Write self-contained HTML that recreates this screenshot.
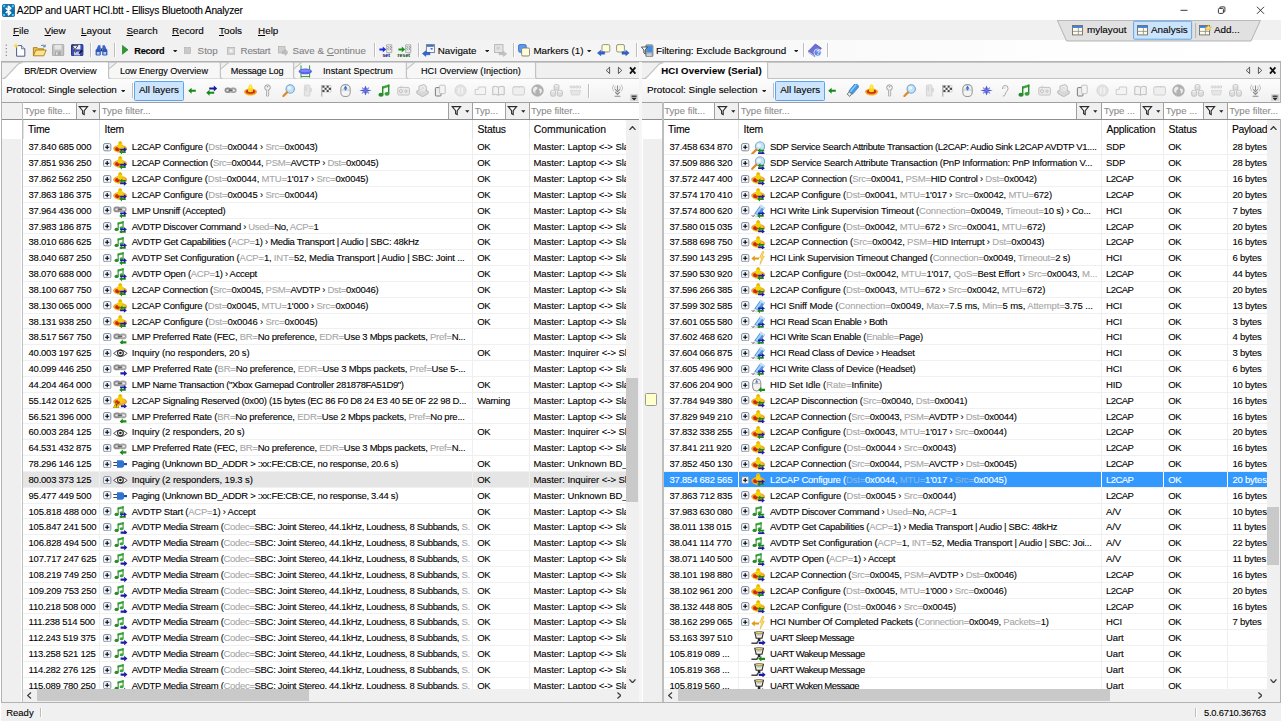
<!DOCTYPE html><html><head><meta charset="utf-8"><title>Ellisys Bluetooth Analyzer</title><style>
*{box-sizing:border-box;margin:0;padding:0}
html,body{width:1282px;height:722px;overflow:hidden;background:#f0f0f0}
body{position:relative;font-family:"Liberation Sans",sans-serif;font-size:9.8px;color:#000;-webkit-font-smoothing:antialiased;-webkit-text-stroke:0.1px}
.a{position:absolute}
.ui{position:absolute;white-space:nowrap;line-height:12px}
u{text-decoration:underline;text-underline-offset:1px}
.dis{color:#838383}
#title{left:0;top:0;width:1282px;height:20px;background:#fff}
#menu{left:0;top:20px;width:1282px;height:20px;background:#f0f0f0}
#lay{left:0;top:20px;width:1282px;height:22px;z-index:3}
#tb{left:0;top:40px;width:1282px;height:21px;background:linear-gradient(90deg,#f0f0f0 0,#f3f3f3 40%,#f9f9f9 62%,#fefefe 82%,#fff 100%)}
.sep{position:absolute;width:1px;background:#bdbdbd;box-shadow:1px 0 0 #fff}
.pane{position:absolute;background:#fff}
.frame{position:absolute;left:1.3px;top:60.9px;width:1279.8px;height:642px;background:#f6f6f6;border:1px solid #b2b2b2}
.tabstrip{position:absolute;background:#f0f0f0;border-top:1.6px solid #c8c8c8;border-bottom:1.2px solid #c2c2c2}
.ptb{position:absolute;background:linear-gradient(180deg,#fcfcfc,#f1f1f1)}
.frow{position:absolute;background:#f0f0f0;border-top:1px solid #a0a0a0;border-bottom:1px solid #8e8e8e}
.fbox{position:absolute;top:0;height:100%;background:#fff;border-left:1px solid #a0a0a0;color:#8c8c8c;font-size:9.55px;line-height:16.2px;padding-left:1.3px;white-space:nowrap;overflow:hidden}
.fbtn{position:absolute;top:0;height:100%;background:#f0f0f0;border-left:1px solid #a0a0a0}
.hdr{position:absolute;background:#fff;font-size:10.4px;letter-spacing:-0.18px}
.hdr>span{position:absolute;top:0;height:100%;line-height:20.2px;white-space:nowrap;overflow:hidden;border-left:1px solid #e4e4e4;padding-left:4px}
.mg{position:absolute;background:#efefef}
.vp{position:absolute;overflow:hidden;background:#fff}
.r{position:absolute;left:0;width:100%;height:15.832px;border-bottom:1px solid #f0f0f0;font-size:9.5px;line-height:16.6px;white-space:nowrap}
.r .c{position:absolute;top:0;height:100%;overflow:hidden;padding-left:3.7px;border-left:1px solid #efefef}
.r .t{border-left:none;letter-spacing:-0.245px;padding-left:5.9px}
.r .it{padding-left:0}
.r.hl{background:#e5e5e5}
.r.sel{background:#3399ff;color:#fff}
.r.sel .c{border-left-color:#fff}
.r.sel .g{color:#8eb4d8}
.g{color:#a6a6a6}
.ex{position:absolute;left:2.7px;top:3.7px}
.ic{position:absolute;left:12.2px;top:1.2px}
.tx{position:absolute;left:31.3px;top:0}
.lp .k4{letter-spacing:-0.05px}.lp .k3{letter-spacing:-0.3px}.rp .k3{letter-spacing:-0.6px}.rp .k4{letter-spacing:-0.3px}.rp .k5{padding-left:4.4px;letter-spacing:-0.2px}
.rp .ex{left:1.8px}.rp .ic{left:11.6px}.rp .tx{left:30.6px}
.vs{position:absolute;background:#f0f0f0}
.th{position:absolute;background:#c9c9c9}
.chev{position:absolute;fill:none;stroke:#404040;stroke-width:1.3}
.tab{position:absolute;font-size:9.3px;line-height:17px;white-space:nowrap}
</style></head><body>
<div id="title" class="a">
<svg class="a" style="left:1.8px;top:4.2px" width="13" height="13" viewBox="0 0 12 12"><rect x="0.3" y="0.3" width="11.4" height="11.4" rx="1.7" fill="#0f69a6" stroke="#0a4f80" stroke-width="0.6"/><rect x="1" y="1" width="10" height="5" rx="1.2" fill="#1a7fc0" opacity="0.55"/><path d="M3.5 3.7 L8.1 8.1 L5.9 10 V2 L8.1 3.9 L3.5 8.3" fill="none" stroke="#fff" stroke-width="1.45" stroke-linejoin="round"/><circle cx="1.9" cy="1.9" r="1.15" fill="#33ccff"/><circle cx="10.1" cy="1.9" r="1.15" fill="#33ccff"/><circle cx="1.9" cy="10.1" r="1.15" fill="#33ccff"/><circle cx="10.1" cy="10.1" r="1.15" fill="#33ccff"/></svg>
<span class="ui " style="left:16.8px;top:5.2px;font-size:10.2px;letter-spacing:-0.215px">A2DP and UART HCI.btt - Ellisys Bluetooth Analyzer</span>
<svg class="a" style="left:1170px;top:0" width="112" height="20" viewBox="0 0 112 20"><path d="M10.5 10.3 H17.5" stroke="#222" stroke-width="0.9"/><rect x="48.4" y="8.4" width="5" height="5" rx="1" fill="none" stroke="#222" stroke-width="0.9"/><path d="M49.9 8.4 V7.6 Q49.9 6.9 50.6 6.9 H54.2 Q54.9 6.9 54.9 7.6 V11.2 Q54.9 11.9 54.2 11.9 H53.4" fill="none" stroke="#222" stroke-width="0.9"/><path d="M87 6.8 L94 13.8 M94 6.8 L87 13.8" stroke="#222" stroke-width="0.9"/></svg>
</div>
<div id="menu" class="a">
<span class="ui " style="left:13px;top:4.7px;font-size:9.9px"><u>F</u>ile</span>
<span class="ui " style="left:44.5px;top:4.7px;font-size:9.9px"><u>V</u>iew</span>
<span class="ui " style="left:81px;top:4.7px;font-size:9.9px"><u>L</u>ayout</span>
<span class="ui " style="left:126.5px;top:4.7px;font-size:9.9px"><u>S</u>earch</span>
<span class="ui " style="left:172px;top:4.7px;font-size:9.9px"><u>R</u>ecord</span>
<span class="ui " style="left:219px;top:4.7px;font-size:9.9px"><u>T</u>ools</span>
<span class="ui " style="left:258px;top:4.7px;font-size:9.9px"><u>H</u>elp</span>
</div>
<div id="tb" class="a">
<svg class="a" style="left:5.2px;top:3.5px" width="3" height="14" viewBox="0 0 3 14"><g fill="#8f8f8f"><rect x="0.7" y="0.6" width="1.3" height="1.2"/><rect x="0.7" y="4" width="1.3" height="1.2"/><rect x="0.7" y="7.4" width="1.3" height="1.2"/><rect x="0.7" y="10.8" width="1.3" height="1.2"/></g></svg>
<svg class="a" style="left:13px;top:3px" width="14" height="15" viewBox="0 0 14 15"><path d="M3.6 2.6 H8.6 L11.8 5.8 V13.2 H3.6 Z" fill="#fff" stroke="#4a5a8a" stroke-width="1"/><path d="M8.6 2.6 V5.8 H11.8" fill="#dfe6f5" stroke="#4a5a8a" stroke-width="0.8"/><path d="M3 0 L3.9 2 L6 2.6 L3.9 3.4 L3 5.6 L2.1 3.4 L0 2.6 L2.1 2 Z" fill="#ffd83a"/></svg>
<svg class="a" style="left:31.5px;top:3px" width="15" height="15" viewBox="0 0 15 15"><path d="M1.4 12.6 V4.6 H5.2 L6.4 5.8 H11.6 V7" fill="#f0c04a" stroke="#a67c1a" stroke-width="0.9"/><path d="M1.4 12.8 L3.8 7 H14.2 L11.8 12.8 Z" fill="#ffe28a" stroke="#a67c1a" stroke-width="0.9"/><path d="M9 2.6 Q11.6 1.2 13 3.4 M13.2 1.6 V3.8 H11" fill="none" stroke="#4a6fb4" stroke-width="0.9"/></svg>
<svg class="a" style="left:52.4px;top:4px" width="12.4" height="12.4" viewBox="0 0 12.4 12.4"><rect x="0.5" y="0.5" width="11.2" height="11.2" rx="0.8" fill="#c4c4c4" stroke="#a9a9a9"/><rect x="2.6" y="0.8" width="6.8" height="4.6" fill="#e6e6e6"/><rect x="3" y="7.4" width="6" height="4" fill="#a9a9a9"/><rect x="4" y="8.2" width="1.6" height="2.6" fill="#e0e0e0"/></svg>
<svg class="a" style="left:71px;top:4px" width="12.6" height="12.4" viewBox="0 0 12.6 12.4"><rect x="0.5" y="0.5" width="11.4" height="11.2" rx="0.8" fill="#3a4cc0" stroke="#26328a"/><rect x="2.6" y="0.8" width="6.8" height="4.6" fill="#e8ecfa"/><rect x="3" y="7.6" width="6" height="3.8" fill="#bfc6ea"/><path d="M1 1.6 H7 L4.8 4.4 V8.4 L3.4 7.2 V4.4 Z" fill="#f4f4f4" stroke="#222" stroke-width="0.8"/><path d="M8 9.6 L11.4 6.2" stroke="#111" stroke-width="1.4"/></svg>
<div class="sep" style="left:90px;top:3.4px;height:13.6px"></div>
<svg class="a" style="left:95px;top:4px" width="13" height="12.6" viewBox="0 0 13 12.6"><path d="M1.6 5 L3.2 1.2 H5.4 L5.8 5 Z M11.4 5 L9.8 1.2 H7.6 L7.2 5 Z" fill="#3a64c8"/><rect x="0.6" y="5" width="5.2" height="6.6" rx="1.4" fill="#2f58b8"/><rect x="7.2" y="5" width="5.2" height="6.6" rx="1.4" fill="#2f58b8"/><rect x="5.6" y="4.4" width="1.8" height="3" fill="#1c3a86"/><rect x="1.8" y="8" width="2.8" height="2.6" fill="#b7cdf5"/><rect x="8.4" y="8" width="2.8" height="2.6" fill="#b7cdf5"/></svg>
<div class="sep" style="left:114.4px;top:3.4px;height:13.6px"></div>
<svg class="a" style="left:122px;top:5.4px" width="6.4" height="9.6" viewBox="0 0 6.4 9.6"><path d="M0.4 0.4 L6 4.8 L0.4 9.2 Z" fill="#2c9a2c" stroke="#1c701c" stroke-width="0.6"/></svg>
<span class="ui " style="font-weight:bold;left:134.3px;top:4.6px;font-size:9.2px;letter-spacing:-0.28px" style="left:134.2px;top:4.6px;font-size:9.8px">Record</span>
<svg class="a" style="left:173.4px;top:9.6px" width="4.4" height="2.6" viewBox="0 0 4.4 2.6"><path d="M0 0 H4.4 L2.2 2.6 Z" fill="#222"/></svg>
<svg class="a" style="left:184.4px;top:6.6px" width="7" height="7" viewBox="0 0 7 7"><rect x="0.4" y="0.4" width="6.2" height="6.2" fill="#c9c9c9" stroke="#b0b0b0" stroke-width="0.6"/></svg>
<span class="ui dis" style="left:197.6px;top:4.6px;font-size:9.8px">Stop</span>
<svg class="a" style="left:226.6px;top:7.2px" width="8.4" height="7.6" viewBox="0 0 8.4 7.6"><rect x="0.4" y="0.4" width="7.6" height="6.8" fill="#d4d4d4" stroke="#b0b0b0" stroke-width="0.7"/><rect x="2.6" y="2.4" width="3" height="3" fill="#f4f4f4"/></svg>
<span class="ui dis" style="left:240.6px;top:4.6px;font-size:9.8px;letter-spacing:-0.28px" style="left:240.6px;top:4.6px;font-size:9.8px">Restart</span>
<svg class="a" style="left:278px;top:6.2px" width="10.4" height="10" viewBox="0 0 10.4 10"><rect x="0.4" y="0.4" width="6.6" height="6.6" fill="#d0d0d0" stroke="#b0b0b0" stroke-width="0.7"/><path d="M4.4 5 H7.4 V3.4 L10 6.4 L7.4 9.4 V7.8 H4.4 Z" fill="#c0c0c0" stroke="#a4a4a4" stroke-width="0.5"/></svg>
<span class="ui dis" style="left:292.4px;top:4.6px;font-size:9.8px">Save &amp; <u>C</u>ontinue</span>
<div class="sep" style="left:374.2px;top:3.4px;height:13.6px"></div>
<svg class="a" style="left:379px;top:3.6px" width="14" height="14" viewBox="0 0 14 14"><path d="M0.4 4.4 H3.8 V2.6 L7.2 5.4 L3.8 8.2 V6.4 H0.4 Z" fill="#1a2ee0"/><path d="M7.6 0.8 H12.8 V8.6 H7.6 Z" fill="#ececec" stroke="#8a8a8a" stroke-width="0.6"/><path d="M8.6 2 l1.2 1.4 l-1.2 1.4 l1.2 1.4 M11 2 l1.2 1.4 l-1.2 1.4 l1.2 1.4" fill="none" stroke="#555" stroke-width="0.6"/><text x="3.4" y="13.4" font-family="Liberation Sans, sans-serif" font-size="5.2" font-weight="bold" fill="#000080">set</text></svg>
<svg class="a" style="left:397.4px;top:3.6px" width="15" height="14" viewBox="0 0 15 14"><path d="M1.4 4.4 H4.8 V2.6 L8.2 5.4 L4.8 8.2 V6.4 H1.4 Z" fill="#149414"/><path d="M8.6 0.8 H13.8 V8.6 H8.6 Z" fill="#ececec" stroke="#8a8a8a" stroke-width="0.6"/><path d="M9.6 2 l1.2 1.4 l-1.2 1.4 l1.2 1.4 M12 2 l1.2 1.4 l-1.2 1.4 l1.2 1.4" fill="none" stroke="#555" stroke-width="0.6"/><text x="0.6" y="13.4" font-family="Liberation Sans, sans-serif" font-size="5.2" font-weight="bold" fill="#004000">reset</text></svg>
<div class="sep" style="left:417.6px;top:3.4px;height:13.6px"></div>
<svg class="a" style="left:422px;top:4px" width="13" height="13" viewBox="0 0 13 13"><rect x="4.4" y="0.6" width="8" height="8" fill="#f4f6fb" stroke="#6d7788" stroke-width="0.9"/><rect x="5" y="1" width="6.8" height="1.8" fill="#3b6fd0"/><rect x="8.6" y="4" width="2" height="1.6" fill="#3b6fd0"/><path d="M0.4 9.6 L3.8 6.8 V8.4 H8 V10.8 H3.8 V12.4 Z" fill="#2f63d8" stroke="#1c3f96" stroke-width="0.4"/></svg>
<span class="ui " style="left:437.8px;top:4.6px;font-size:9.8px" style="left:437.8px;top:4.6px;font-size:9.8px">Navigate</span>
<svg class="a" style="left:485px;top:9.6px" width="4.4" height="2.6" viewBox="0 0 4.4 2.6"><path d="M0 0 H4.4 L2.2 2.6 Z" fill="#222"/></svg>
<svg class="a" style="left:494px;top:4px" width="13.4" height="13" viewBox="0 0 13.4 13"><rect x="0.6" y="0.6" width="8.4" height="8" fill="#e4e4e4" stroke="#b4b4b4" stroke-width="0.9"/><rect x="2.4" y="2.6" width="3.4" height="3" fill="#d0d0d0"/><path d="M5 9 H9.4 V7.2 L12.8 9.9 L9.4 12.6 V10.8 H5 Z" fill="#c4c4c4" stroke="#ababab" stroke-width="0.4"/></svg>
<div class="sep" style="left:513.4px;top:3.4px;height:13.6px"></div>
<svg class="a" style="left:518px;top:4px" width="12.4" height="12.6" viewBox="0 0 12.4 12.6"><rect x="0.6" y="0.6" width="7.6" height="7.6" rx="1.4" fill="#5b9bf0" stroke="#2f6fd0" stroke-width="0.9"/><rect x="3.6" y="4" width="8" height="8" rx="1.4" fill="#fdfdd8" stroke="#7a7a6a" stroke-width="0.9"/></svg>
<span class="ui " style="left:533.4px;top:4.6px;font-size:9.8px">Markers (1)</span>
<svg class="a" style="left:587.4px;top:9.6px" width="4.4" height="2.6" viewBox="0 0 4.4 2.6"><path d="M0 0 H4.4 L2.2 2.6 Z" fill="#222"/></svg>
<svg class="a" style="left:597.4px;top:4.4px" width="13.4" height="12.4" viewBox="0 0 13.4 12.4"><rect x="5" y="0.6" width="7.8" height="7.4" rx="1.4" fill="#fdfdd8" stroke="#8a8a7a" stroke-width="0.9"/><path d="M0.4 9 L3.8 6.2 V7.8 H7.6 V10.2 H3.8 V11.8 Z" fill="#2f63d8" stroke="#1c3f96" stroke-width="0.4"/></svg>
<svg class="a" style="left:616.4px;top:4.4px" width="13.6" height="12.4" viewBox="0 0 13.6 12.4"><rect x="0.6" y="0.6" width="7.8" height="7.4" rx="1.4" fill="#fdfdd8" stroke="#8a8a7a" stroke-width="0.9"/><path d="M13.2 9 L9.8 6.2 V7.8 H6 V10.2 H9.8 V11.8 Z" fill="#2f63d8" stroke="#1c3f96" stroke-width="0.4"/></svg>
<div class="sep" style="left:636.2px;top:3.4px;height:13.6px"></div>
<svg class="a" style="left:641px;top:3.6px" width="13" height="13.6" viewBox="0 0 13 13.6"><rect x="4.6" y="0.8" width="7.4" height="12" rx="1.4" fill="#9aa3ad" stroke="#6f7780" stroke-width="0.7"/><rect x="5.6" y="2" width="5.4" height="6" fill="#3f8fe6"/><rect x="6" y="9.4" width="4.6" height="2.6" fill="#c9ced4"/><path d="M0.4 3 H6.4 L4.2 6 V10 L2.8 8.8 V6 Z" fill="#f8f8f8" stroke="#333" stroke-width="0.8"/></svg>
<span class="ui " style="left:656px;top:4.6px;font-size:9.8px">Filtering: Exclude Background</span>
<svg class="a" style="left:794px;top:9.6px" width="4.4" height="2.6" viewBox="0 0 4.4 2.6"><path d="M0 0 H4.4 L2.2 2.6 Z" fill="#222"/></svg>
<div class="sep" style="left:803.4px;top:3.4px;height:13.6px"></div>
<svg class="a" style="left:808.4px;top:3.4px" width="14" height="14.4" viewBox="0 0 14 14.4"><path d="M0.6 8 L7.4 1 L13.4 5.2 L6.8 12.6 Z" fill="#6f6fd8" stroke="#4a4aa8" stroke-width="0.7"/><path d="M0.6 8 L6.8 12.6 L6.8 13.8 L0.6 9.4 Z" fill="#ececf8" stroke="#4a4aa8" stroke-width="0.5"/><circle cx="9.6" cy="9.6" r="3.6" fill="#5b86e8" stroke="#f0f0ff" stroke-width="0.8"/><text x="8" y="12" font-family="Liberation Sans, sans-serif" font-size="6.4" font-weight="bold" fill="#fff">?</text></svg>
<div class="sep" style="left:826.6px;top:3.4px;height:13.6px"></div>
</div>
<div id="lay" class="a">
<svg class="a" style="left:1050px;top:0" width="220" height="22" viewBox="0 0 220 22"><path d="M7.4 0.4 H210.4 L201 21 H16.6 Z" fill="#e1e1e1" stroke="#adadad" stroke-width="0.9"/><rect x="83.6" y="1.2" width="58" height="18" rx="1" fill="#cce4fb" stroke="#62a6ea" stroke-width="1"/><path d="M145.6 3 V18" stroke="#b5b5b5" stroke-width="1"/></svg>
<svg class="a" style="left:1072px;top:4.5px;overflow:visible" width="13" height="11" viewBox="0 0 13 11"><rect x="0.5" y="0.5" width="10" height="9.4" fill="#fffbe8" stroke="#6d6d6d" stroke-width="0.9"/><rect x="0.9" y="0.9" width="9.2" height="2" fill="#3b7fd6"/><path d="M6.4 3 V9.6 M0.8 6.4 H10.2" stroke="#8a8a8a" stroke-width="0.8"/></svg><span class="ui " style="left:1087px;top:4.4px;font-size:9.9px">mylayout</span>
<svg class="a" style="left:1136.5px;top:4.5px;overflow:visible" width="13" height="11" viewBox="0 0 13 11"><rect x="0.5" y="0.5" width="10" height="9.4" fill="#fffbe8" stroke="#6d6d6d" stroke-width="0.9"/><rect x="0.9" y="0.9" width="9.2" height="2" fill="#3b7fd6"/><path d="M6.4 3 V9.6 M0.8 6.4 H10.2" stroke="#8a8a8a" stroke-width="0.8"/></svg><span class="ui " style="left:1151px;top:4.4px;font-size:9.9px">Analysis</span>
<svg class="a" style="left:1199px;top:4.5px;overflow:visible" width="13" height="11" viewBox="0 0 13 11"><rect x="0.5" y="0.5" width="10" height="9.4" fill="#fffbe8" stroke="#6d6d6d" stroke-width="0.9"/><rect x="0.9" y="0.9" width="9.2" height="2" fill="#3b7fd6"/><path d="M6.4 3 V9.6 M0.8 6.4 H10.2" stroke="#8a8a8a" stroke-width="0.8"/><path d="M9.4 -0.2 L10.4 1.8 L12.4 2.2 L10.9 3.5 L11.3 5.4 L9.4 4.4 L7.5 5.4 L7.9 3.5 L6.4 2.2 L8.4 1.8 Z" fill="#ffe066" stroke="#c79a1e" stroke-width="0.5"/></svg><span class="ui " style="left:1214px;top:4.4px;font-size:9.9px">Add...</span>
</div>
<div class="frame"></div>
<div class="pane" style="left:2.1px;top:61.9px;width:637.4px;height:640.2px"></div>
<div class="tabstrip" style="left:2.1px;top:62.2px;width:637.4px;height:17.3px"></div>
<svg class="a" style="left:406.4px;top:62.3px;overflow:visible" width="131.20000000000005" height="18" viewBox="0 0 131.20000000000005 18"><path d="M0 7.6 L8.6 0.8 H127.60000000000005 Q129.60000000000005 0.8 129.60000000000005 2.8 V14.8 Q129.60000000000005 16.6 131.20000000000005 16.6 H0 Z" fill="#f7f7f7"/><path d="M0 7.6 L8.8 0.4 M129.60000000000005 0.6 V14.8 Q129.60000000000005 16.6 131.60000000000005 16.6" fill="none" stroke="#c2c2c2" stroke-width="1.2"/></svg>
<svg class="a" style="left:293.4px;top:62.3px;overflow:visible" width="115.0" height="18" viewBox="0 0 115.0 18"><path d="M0 7.6 L8.6 0.8 H111.4 Q113.4 0.8 113.4 2.8 V14.8 Q113.4 16.6 115.0 16.6 H0 Z" fill="#f7f7f7"/><path d="M0 7.6 L8.8 0.4 M113.4 0.6 V14.8 Q113.4 16.6 115.4 16.6" fill="none" stroke="#c2c2c2" stroke-width="1.2"/></svg>
<svg class="a" style="left:220.2px;top:62.3px;overflow:visible" width="75.19999999999999" height="18" viewBox="0 0 75.19999999999999 18"><path d="M0 7.6 L8.6 0.8 H71.6 Q73.6 0.8 73.6 2.8 V14.8 Q73.6 16.6 75.19999999999999 16.6 H0 Z" fill="#f7f7f7"/><path d="M0 7.6 L8.8 0.4 M73.6 0.6 V14.8 Q73.6 16.6 75.6 16.6" fill="none" stroke="#c2c2c2" stroke-width="1.2"/></svg>
<svg class="a" style="left:108.2px;top:62.3px;overflow:visible" width="113.99999999999999" height="18" viewBox="0 0 113.99999999999999 18"><path d="M0 7.6 L8.6 0.8 H110.39999999999999 Q112.39999999999999 0.8 112.39999999999999 2.8 V14.8 Q112.39999999999999 16.6 113.99999999999999 16.6 H0 Z" fill="#f7f7f7"/><path d="M0 7.6 L8.8 0.4 M112.39999999999999 0.6 V14.8 Q112.39999999999999 16.6 114.39999999999999 16.6" fill="none" stroke="#c2c2c2" stroke-width="1.2"/></svg>
<svg class="a" style="left:2.0px;top:62.3px;overflow:visible" width="108.2" height="18" viewBox="0 0 108.2 18"><path d="M0.2 17 Q3.4 16.6 5.4 13.6 L15.6 2.6 Q17.6 0.6 20.4 0.6 H104.60000000000001 Q106.60000000000001 0.6 106.60000000000001 2.6 V15 Q106.60000000000001 16.8 108.2 17 V18.4 H0.2 Z" fill="#fff"/><path d="M0.2 17 Q3.4 16.6 5.4 13.6 L15.6 2.6 Q17.6 0.6 20.4 0.6 M106.60000000000001 0.6 V15 Q106.60000000000001 16.8 108.8 17" fill="none" stroke="#c2c2c2" stroke-width="1.2"/></svg>
<span class="tab" style="left:24.2px;top:62.9px;font-size:9.1px;letter-spacing:-0.18px">BR/EDR Overview</span>
<span class="tab" style="left:119.9px;top:62.9px;font-size:9.1px;letter-spacing:-0.02px">Low Energy Overview</span>
<span class="tab" style="left:230.8px;top:62.9px;font-size:9.1px;letter-spacing:-0.19px">Message Log</span>
<svg class="a" style="left:297.6px;top:64.6px" width="14" height="13" viewBox="0 0 14 13"><path d="M3 0.4 V12.6 M11.6 0.4 V12.6 M3 11.6 H11.6" stroke="#2f9a2f" stroke-width="1" fill="none"/><ellipse cx="7.3" cy="6.4" rx="6.6" ry="2.9" fill="#5a62ee"/><ellipse cx="7.3" cy="5.8" rx="5" ry="1.4" fill="#8088f8"/></svg>
<span class="tab" style="left:323px;top:62.9px;font-size:9.1px;letter-spacing:0.08px">Instant Spectrum</span>
<span class="tab" style="left:421px;top:62.9px;font-size:9.1px;letter-spacing:0.055px">HCI Overview (Injection)</span>
<svg class="a" style="left:603.6px;top:66.2px" width="36" height="9" viewBox="0 0 36 9"><path d="M5.6 1.2 L2.2 4.4 L5.6 7.6 Z" fill="#e8e8e8" stroke="#333" stroke-width="0.8"/><path d="M14.4 1.2 L17.8 4.4 L14.4 7.6 Z" fill="#e8e8e8" stroke="#333" stroke-width="0.8"/><path d="M26 1.4 L31.4 7.6 M31.4 1.4 L26 7.6" stroke="#111" stroke-width="1.8"/></svg>
<div class="ptb" style="left:2.1px;top:79.4px;width:637.4px;height:22.4px"></div>
<span class="ui" style="left:6.3px;top:84.4px;font-size:9.85px">Protocol: Single selection</span>
<svg class="a" style="left:120.6px;top:89.6px" width="4.4" height="2.6" viewBox="0 0 4.4 2.6"><path d="M0 0 H4.4 L2.2 2.6 Z" fill="#222"/></svg>
<div class="sep" style="left:131.6px;top:83px;height:15px"></div>
<div class="a" style="left:134.3px;top:80.8px;width:49.6px;height:19.8px;background:#cde5fc;border:1.2px solid #5aa5ee;border-radius:1.5px"></div>
<span class="ui" style="left:139px;top:84.4px;font-size:9.85px">All layers</span>
<svg class="a" style="left:185.7px;top:84px" width="13" height="13" viewBox="0 0 13 13"><path d="M2.2 6.8 L5.6 3.8 V5.8 H9.8 V7.8 H5.6 V9.8 Z" fill="#148a14"/></svg>
<svg class="a" style="left:205.3px;top:84px" width="13" height="13" viewBox="0 0 13 13"><path d="M12.2 4.6 L8.8 1.6 V3.6 H4.2 V5.6 H8.8 V7.6 Z" fill="#1a1aa0"/><path d="M1.2 8.8 L4.6 5.8 V7.8 H9.2 V9.8 H4.6 V11.8 Z" fill="#148a14"/></svg>
<svg class="a" style="left:224.3px;top:84px" width="13" height="13" viewBox="0 0 13 13"><rect x="0.6" y="3.6" width="6.8" height="5.4" rx="2.7" fill="#8e8e8e"/><rect x="5.8" y="3.6" width="6.8" height="5.4" rx="2.7" fill="#a2a2a2"/><rect x="2.2" y="5.4" width="3.2" height="1.8" rx="0.9" fill="#e4e4e4"/><rect x="7.8" y="5.4" width="3.2" height="1.8" rx="0.9" fill="#ececec"/><rect x="4.6" y="5.6" width="4" height="1.4" fill="#6a6a6a"/></svg>
<svg class="a" style="left:243.7px;top:84px" width="13" height="13" viewBox="0 0 13 13"><ellipse cx="6.5" cy="7.8" rx="6.5" ry="3.4" fill="#f0a01a"/><ellipse cx="6.5" cy="7.6" rx="4.6" ry="2.2" fill="#c8281a"/><path d="M3.9 7.6 Q4.3 3.4 4.9 1.8 Q5.5 0.2 6.5 0.2 Q7.5 0.2 8.1 1.8 Q8.7 3.4 9.1 7.6 Q6.5 8.8 3.9 7.6 Z" fill="#ffd21e"/><path d="M5.6 1.6 Q6.5 0.2 7.4 1.6 L7.7 4.6 H5.3 Z" fill="#fff04a"/><path d="M1.2 9.6 Q6.5 12.8 11.8 9.6 Q10.6 11.6 6.5 11.6 Q2.4 11.6 1.2 9.6 Z" fill="#f6c22a"/></svg>
<svg class="a" style="left:261.3px;top:84px" width="13" height="13" viewBox="0 0 13 13"><circle cx="6.5" cy="3.6" r="2.8" fill="#f4f4f4" stroke="#9a9a9a" stroke-width="1"/><path d="M5.6 6.2 V12 L6.5 12.8 L7.4 12 V10.6 L8.2 10 L7.4 9.4 V8.4 L8.2 7.8 L7.4 7.2 V6.2" fill="#f4f4f4" stroke="#9a9a9a" stroke-width="0.8"/><circle cx="6.5" cy="2.8" r="0.8" fill="#9a9a9a"/></svg>
<svg class="a" style="left:281.9px;top:84px" width="13" height="13" viewBox="0 0 13 13"><circle cx="8.2" cy="5" r="4.2" fill="#bfe3fb" stroke="#7aa0c8" stroke-width="1.1"/><circle cx="7.4" cy="4" r="1.8" fill="#eaf6ff"/><path d="M5 8.4 L1.4 12" stroke="#d98a2a" stroke-width="2.2" stroke-linecap="round"/></svg>
<svg class="a" style="left:301.4px;top:84px" width="13" height="13" viewBox="0 0 13 13"><rect x="3.4" y="1" width="5.6" height="11" rx="1" fill="#e6e6e6" stroke="#cfcfcf" stroke-width="0.8"/><path d="M8 4.6 H10.6 V7.4 H8" fill="#dcdcdc" stroke="#cfcfcf" stroke-width="0.6"/><rect x="4.6" y="2.6" width="1.2" height="4.4" fill="#d0d0d0"/></svg>
<svg class="a" style="left:319.5px;top:84px" width="13" height="13" viewBox="0 0 13 13"><path d="M1.8 1 V12.6" stroke="#9a9a9a" stroke-width="0.9"/><path d="M2.4 1.6 H11 V8 H2.4 Z" fill="#fff" stroke="#999" stroke-width="0.4"/><g fill="#4a4a4a"><rect x="2.4" y="1.6" width="2.1" height="2.1"/><rect x="6.6" y="1.6" width="2.1" height="2.1"/><rect x="4.5" y="3.7" width="2.1" height="2.2"/><rect x="8.7" y="3.7" width="2.3" height="2.2"/><rect x="2.4" y="5.9" width="2.1" height="2.1"/><rect x="6.6" y="5.9" width="2.1" height="2.1"/></g></svg>
<svg class="a" style="left:339.2px;top:84px" width="13" height="13" viewBox="0 0 13 13"><rect x="1.8" y="0.6" width="9.4" height="12" rx="4.4" fill="#f4f4f4" stroke="#9c9c9c" stroke-width="1.1"/><path d="M2 6 H11" stroke="#b4b4b4" stroke-width="0.7"/><path d="M6.5 1.6 l2 3.2 h-4 z" fill="#3a6fd0"/><rect x="5.7" y="4.6" width="1.6" height="1.8" fill="#3a6fd0"/></svg>
<svg class="a" style="left:358.5px;top:84px" width="13" height="13" viewBox="0 0 13 13"><path d="M0.2 6.5 L4.8 5.6 L6.5 1.6 L8.2 5.6 L12.8 6.5 L8.2 7.4 L6.5 11.4 L4.8 7.4 Z" fill="#5058d0"/><path d="M3 3.6 L10 9.4 M10 3.6 L3 9.4" stroke="#7078e0" stroke-width="1.1"/></svg>
<svg class="a" style="left:377.7px;top:84px" width="13" height="13" viewBox="0 0 13 13"><path d="M4 2.4 L11.4 0.2 V2.8 L4 5 Z" fill="#3aa83a"/><rect x="4" y="2.6" width="1.4" height="8" fill="#2a8a2a"/><rect x="10" y="0.8" width="1.4" height="8.6" fill="#2a8a2a"/><ellipse cx="3" cy="10.8" rx="2.6" ry="2" fill="#2a8a2a"/><ellipse cx="9" cy="9.8" rx="2.5" ry="1.9" fill="#34a034"/></svg>
<svg class="a" style="left:396.9px;top:84px" width="13" height="13" viewBox="0 0 13 13"><rect x="0.8" y="3.4" width="11.6" height="7.6" rx="1.4" fill="#ececec" stroke="#c2c2c2" stroke-width="1"/><circle cx="4" cy="7.2" r="1.6" fill="none" stroke="#bdbdbd" stroke-width="0.9"/><circle cx="9" cy="7.2" r="1.2" fill="none" stroke="#bdbdbd" stroke-width="0.9"/><path d="M3 3.4 L5 1.4" stroke="#c2c2c2" stroke-width="0.8"/></svg>
<svg class="a" style="left:416.0px;top:84px" width="13" height="13" viewBox="0 0 13 13"><path d="M0.8 7.2 L6.2 4.2 L12.2 7.4 L6.6 10.8 Z" fill="#e6e6e6" stroke="#b0b0b0" stroke-width="0.9"/><path d="M3 5.6 L3 2.2 L8 0.6 L10.2 2.2 L10.2 6" fill="#f4f4f4" stroke="#b0b0b0" stroke-width="0.9"/><path d="M0.8 7.2 V9.4 L6.6 12.8 L12.2 9.6 V7.4" fill="#d8d8d8" stroke="#b0b0b0" stroke-width="0.8"/><path d="M4.6 4 L8.4 2.8 M4.6 5.4 L8.4 4.2" stroke="#c4c4c4" stroke-width="0.6"/></svg>
<svg class="a" style="left:434.3px;top:84px" width="13" height="13" viewBox="0 0 13 13"><rect x="1.4" y="3.6" width="5.6" height="8.4" rx="0.8" fill="#ececec" stroke="#6f6f6f" stroke-width="0.9"/><rect x="5.6" y="1.2" width="5.6" height="8.4" rx="0.8" fill="#f4f4f4" stroke="#bdbdbd" stroke-width="0.9"/></svg>
<svg class="a" style="left:454.4px;top:84px" width="13" height="13" viewBox="0 0 13 13"><circle cx="6.5" cy="6.5" r="5.6" fill="#e3e3e3" stroke="#d2d2d2" stroke-width="0.8"/><rect x="4" y="3.4" width="1.6" height="6.2" rx="0.6" fill="#f2f2f2"/><rect x="7.4" y="3.4" width="1.6" height="6.2" rx="0.6" fill="#f2f2f2"/></svg>
<svg class="a" style="left:473.5px;top:84px" width="13" height="13" viewBox="0 0 13 13"><path d="M1.2 10.6 V5.4 H4.4 V3 H11.6 V10.6 Z" fill="#f4f4f4" stroke="#cdcdcd" stroke-width="1"/></svg>
<svg class="a" style="left:492.4px;top:84px" width="13" height="13" viewBox="0 0 13 13"><path d="M0.8 2.8 Q3.6 1.6 6.5 3.2 Q9.4 1.6 12.2 2.8 V10.8 Q9.4 9.8 6.5 11.2 Q3.6 9.8 0.8 10.8 Z" fill="#f2f2f2" stroke="#bdbdbd" stroke-width="1"/><path d="M6.5 3.2 V11" stroke="#bdbdbd" stroke-width="0.9"/></svg>
<svg class="a" style="left:511.5px;top:84px" width="13" height="13" viewBox="0 0 13 13"><rect x="0.8" y="2.6" width="11.6" height="8.4" rx="1.6" fill="#efefef" stroke="#cfcfcf" stroke-width="1"/><path d="M2.6 2.6 V4 M5 2.6 V4 M7.4 2.6 V4 M9.8 2.6 V4" stroke="#cfcfcf" stroke-width="0.9"/></svg>
<svg class="a" style="left:531.1px;top:84px" width="13" height="13" viewBox="0 0 13 13"><circle cx="6.5" cy="6.5" r="5.8" fill="#b2b2b2" stroke="#a2a2a2" stroke-width="0.6"/><path d="M3 3.4 Q5 2 6.4 3.6 Q7 5.4 5 6 Q3.6 7.4 4.6 9.4 Q3 9 2 7 Q1.6 5 3 3.4 Z M8 4.6 Q10 4 11 6 Q11 8.4 9.4 9.8 Q8.4 8.4 8.8 7 Q7.4 6 8 4.6 Z" fill="#ececec"/></svg>
<svg class="a" style="left:550.4px;top:84px" width="13" height="13" viewBox="0 0 13 13"><g fill="#dedede" stroke="#b4b4b4" stroke-width="0.7"><rect x="4" y="0.6" width="5" height="5.4" rx="1.6"/><rect x="0.6" y="6.4" width="5" height="5.8" rx="1.6"/><rect x="7.4" y="6.4" width="5" height="5.8" rx="1.6"/></g><g fill="#f2f2f2"><ellipse cx="6.5" cy="1.8" rx="1.9" ry="0.8"/><ellipse cx="3.1" cy="7.6" rx="1.9" ry="0.8"/><ellipse cx="9.9" cy="7.6" rx="1.9" ry="0.8"/></g></svg>
<svg class="a" style="left:568.5px;top:84px" width="13" height="13" viewBox="0 0 13 13"><g fill="none" stroke="#c6c6c6" stroke-width="0.8"><ellipse cx="2.2" cy="3" rx="1" ry="1.2"/><ellipse cx="5" cy="3" rx="1" ry="1.2"/><ellipse cx="7.8" cy="3" rx="1" ry="1.2"/><ellipse cx="10.6" cy="3" rx="1" ry="1.2"/></g><path d="M1.4 6.4 H11.6 L10.4 11 H2.6 Z" fill="#e6e6e6" stroke="#d0d0d0" stroke-width="0.7"/></svg>
<svg class="a" style="left:610.5px;top:84px" width="13" height="13" viewBox="0 0 13 13"><path d="M2.8 0.6 Q-0.2 4 2.8 7.4 M10.2 0.6 Q13.2 4 10.2 7.4 M4.4 2 Q2.8 4 4.4 6 M8.6 2 Q10.2 4 8.6 6" fill="none" stroke="#b4b4b4" stroke-width="0.8"/><path d="M6.5 1.4 V6.4 M4.2 5.4 L6.5 7.8 L8.8 5.4 M4.2 8 L6.5 10.4 L8.8 8 M3.6 12.2 H9.4" fill="none" stroke="#8a8a8a" stroke-width="1.1"/></svg>
<div class="sep" style="left:587.6px;top:83.6px;height:14px"></div>
<svg class="a" style="left:629.8px;top:93.6px" width="8.4" height="7.6" viewBox="0 0 8.4 7.6"><rect x="0" y="0" width="8.4" height="7.6" fill="#d6d6d6"/><rect x="1.6" y="1.6" width="5" height="1.2" fill="#222"/><path d="M1.4 3.8 H6.8 L4.1 6.6 Z" fill="#222"/></svg>
<div class="frow" style="left:2.1px;top:101.6px;width:637.4px;height:18px">
<span class="fbox" style="left:20.9px;width:53px;border-left:none">Type filte...</span>
<span class="fbtn" style="left:73.9px;width:23.5px"><svg class="a" style="left:1.5px;top:2.6px" width="20" height="12" viewBox="0 0 20 12"><path d="M1.2 1.6 H9.6 L6.2 5.6 V9.6 L4.6 8.6 V5.6 Z" fill="#fff" stroke="#2a2a2a" stroke-width="1.1"/><path d="M14.2 5.2 h4.2 l-2.1 2.5 z" fill="#222"/></svg></span>
<span class="fbox" style="left:97.4px;width:349.0px">Type filter...</span>
<span class="fbtn" style="left:446.4px;width:24.0px"><svg class="a" style="left:1.5px;top:2.6px" width="20" height="12" viewBox="0 0 20 12"><path d="M1.2 1.6 H9.6 L6.2 5.6 V9.6 L4.6 8.6 V5.6 Z" fill="#fff" stroke="#2a2a2a" stroke-width="1.1"/><path d="M14.2 5.2 h4.2 l-2.1 2.5 z" fill="#222"/></svg></span>
<span class="fbox" style="left:470.4px;width:32.5px">Typ...</span>
<span class="fbtn" style="left:502.9px;width:23.799999999999955px"><svg class="a" style="left:1.5px;top:2.6px" width="20" height="12" viewBox="0 0 20 12"><path d="M1.2 1.6 H9.6 L6.2 5.6 V9.6 L4.6 8.6 V5.6 Z" fill="#fff" stroke="#2a2a2a" stroke-width="1.1"/><path d="M14.2 5.2 h4.2 l-2.1 2.5 z" fill="#222"/></svg></span>
<span class="fbox" style="left:526.7px;width:109.80000000000007px">Type filter...</span>
</div>
<div class="hdr" style="left:2.1px;top:119.6px;width:637.4px;height:19.6px">
<span style="left:20.9px;width:76.5px">Time</span>
<span style="left:97.4px;width:373.0px">Item</span>
<span style="left:470.4px;width:56.299999999999955px">Status</span>
<span style="left:526.7px;width:97.40000000000009px"><i style="font-style:normal;letter-spacing:0.0px">Communication</i></span>
</div>
<div class="mg" style="left:2.2px;top:139.3px;width:18.900000000000002px;height:563px"></div>
<div class="a" style="left:21.6px;top:102px;width:1.2px;height:600.4px;background:#bebebe"></div>
<div class="vp lp" style="left:22.7px;top:139.1px;width:603.5px;height:549.6px">
<div class="r" style="top:0.34px"><span class="c t" style="left:0.0px;width:76.8px">37.840 685 000</span><span class="c it" style="left:76.8px;width:373.0px"><svg class="ex" width="8.4" height="8.4" viewBox="0 0 7.6 7.6"><rect x="0.5" y="0.5" width="6.6" height="6.6" rx="1.3" fill="#f1f4f8" stroke="#7d8ea4" stroke-width="0.9"/><path d="M1.9 3.8 H5.7 M3.8 1.9 V5.7" stroke="#000" stroke-width="1"/></svg><svg class="ic" width="15" height="15" viewBox="0 0 15 15"><ellipse cx="7.1" cy="7.6" rx="6.9" ry="3.6" fill="#f0a01c"/><ellipse cx="7.1" cy="7.2" rx="5.2" ry="2.4" fill="#f8bc2a"/><ellipse cx="4.5" cy="8.1" rx="2.5" ry="2.1" fill="#c8281a"/><path d="M4.7 7 Q4.9 3.2 5.4 1.6 Q5.9 0.1 7.2 0.1 Q8.5 0.1 9 1.6 Q9.5 3.2 9.7 7 Q7.2 8.2 4.7 7 Z" fill="#f2d208"/><path d="M5.9 1.4 Q7.2 -0.4 8.5 1.4 L8.7 2.6 H5.7 Z" fill="#e8a818"/><path d="M2.4 9.8 Q5 11.4 7.4 11.2 L7.2 12 Q4.4 12 2.2 10.6 Z" fill="#f4c82a"/><path d="M6.2 11.1 L9.0 8.8 V10.299999999999999 H12.8 V11.9 H9.0 V13.399999999999999 Z" fill="#1c8a1c"/><path d="M13.9 8.6 L10.9 6.3 V7.75 H7.1000000000000005 V9.45 H10.9 V10.899999999999999 Z" fill="#1c1ca8"/></svg><span class="tx" style="letter-spacing:-0.179px">L2CAP Configure (<span class="g">Dst=</span>0x0044 › <span class="g">Src=</span>0x0043)</span></span><span class="c k3" style="left:449.8px;width:56.299999999999955px">OK</span><span class="c k4" style="left:506.09999999999997px;width:97.40000000000003px">Master: Laptop &lt;-&gt; Sla</span></div>
<div class="r" style="top:16.17px"><span class="c t" style="left:0.0px;width:76.8px">37.851 936 250</span><span class="c it" style="left:76.8px;width:373.0px"><svg class="ex" width="8.4" height="8.4" viewBox="0 0 7.6 7.6"><rect x="0.5" y="0.5" width="6.6" height="6.6" rx="1.3" fill="#f1f4f8" stroke="#7d8ea4" stroke-width="0.9"/><path d="M1.9 3.8 H5.7 M3.8 1.9 V5.7" stroke="#000" stroke-width="1"/></svg><svg class="ic" width="15" height="15" viewBox="0 0 15 15"><ellipse cx="7.1" cy="7.6" rx="6.9" ry="3.6" fill="#f0a01c"/><ellipse cx="7.1" cy="7.2" rx="5.2" ry="2.4" fill="#f8bc2a"/><ellipse cx="4.5" cy="8.1" rx="2.5" ry="2.1" fill="#c8281a"/><path d="M4.7 7 Q4.9 3.2 5.4 1.6 Q5.9 0.1 7.2 0.1 Q8.5 0.1 9 1.6 Q9.5 3.2 9.7 7 Q7.2 8.2 4.7 7 Z" fill="#f2d208"/><path d="M5.9 1.4 Q7.2 -0.4 8.5 1.4 L8.7 2.6 H5.7 Z" fill="#e8a818"/><path d="M2.4 9.8 Q5 11.4 7.4 11.2 L7.2 12 Q4.4 12 2.2 10.6 Z" fill="#f4c82a"/><path d="M6.2 11.1 L9.0 8.8 V10.299999999999999 H12.8 V11.9 H9.0 V13.399999999999999 Z" fill="#1c8a1c"/><path d="M13.9 8.6 L10.9 6.3 V7.75 H7.1000000000000005 V9.45 H10.9 V10.899999999999999 Z" fill="#1c1ca8"/></svg><span class="tx" style="letter-spacing:-0.296px">L2CAP Connection (<span class="g">Src=</span>0x0044, <span class="g">PSM=</span>AVCTP › <span class="g">Dst=</span>0x0045)</span></span><span class="c k3" style="left:449.8px;width:56.299999999999955px">OK</span><span class="c k4" style="left:506.09999999999997px;width:97.40000000000003px">Master: Laptop &lt;-&gt; Sla</span></div>
<div class="r" style="top:32.00px"><span class="c t" style="left:0.0px;width:76.8px">37.862 562 250</span><span class="c it" style="left:76.8px;width:373.0px"><svg class="ex" width="8.4" height="8.4" viewBox="0 0 7.6 7.6"><rect x="0.5" y="0.5" width="6.6" height="6.6" rx="1.3" fill="#f1f4f8" stroke="#7d8ea4" stroke-width="0.9"/><path d="M1.9 3.8 H5.7 M3.8 1.9 V5.7" stroke="#000" stroke-width="1"/></svg><svg class="ic" width="15" height="15" viewBox="0 0 15 15"><ellipse cx="7.1" cy="7.6" rx="6.9" ry="3.6" fill="#f0a01c"/><ellipse cx="7.1" cy="7.2" rx="5.2" ry="2.4" fill="#f8bc2a"/><ellipse cx="4.5" cy="8.1" rx="2.5" ry="2.1" fill="#c8281a"/><path d="M4.7 7 Q4.9 3.2 5.4 1.6 Q5.9 0.1 7.2 0.1 Q8.5 0.1 9 1.6 Q9.5 3.2 9.7 7 Q7.2 8.2 4.7 7 Z" fill="#f2d208"/><path d="M5.9 1.4 Q7.2 -0.4 8.5 1.4 L8.7 2.6 H5.7 Z" fill="#e8a818"/><path d="M2.4 9.8 Q5 11.4 7.4 11.2 L7.2 12 Q4.4 12 2.2 10.6 Z" fill="#f4c82a"/><path d="M13.9 11.4 L10.9 9.100000000000001 V10.55 H7.1000000000000005 V12.25 H10.9 V13.7 Z" fill="#1c1ca8"/><path d="M6.6 8.8 L9.399999999999999 6.500000000000001 V8.0 H13.2 V9.600000000000001 H9.399999999999999 V11.100000000000001 Z" fill="#1c8a1c"/></svg><span class="tx" style="letter-spacing:-0.211px">L2CAP Configure (<span class="g">Dst=</span>0x0044, <span class="g">MTU=</span>1'017 › <span class="g">Src=</span>0x0045)</span></span><span class="c k3" style="left:449.8px;width:56.299999999999955px">OK</span><span class="c k4" style="left:506.09999999999997px;width:97.40000000000003px">Master: Laptop &lt;-&gt; Sla</span></div>
<div class="r" style="top:47.84px"><span class="c t" style="left:0.0px;width:76.8px">37.863 186 375</span><span class="c it" style="left:76.8px;width:373.0px"><svg class="ex" width="8.4" height="8.4" viewBox="0 0 7.6 7.6"><rect x="0.5" y="0.5" width="6.6" height="6.6" rx="1.3" fill="#f1f4f8" stroke="#7d8ea4" stroke-width="0.9"/><path d="M1.9 3.8 H5.7 M3.8 1.9 V5.7" stroke="#000" stroke-width="1"/></svg><svg class="ic" width="15" height="15" viewBox="0 0 15 15"><ellipse cx="7.1" cy="7.6" rx="6.9" ry="3.6" fill="#f0a01c"/><ellipse cx="7.1" cy="7.2" rx="5.2" ry="2.4" fill="#f8bc2a"/><ellipse cx="4.5" cy="8.1" rx="2.5" ry="2.1" fill="#c8281a"/><path d="M4.7 7 Q4.9 3.2 5.4 1.6 Q5.9 0.1 7.2 0.1 Q8.5 0.1 9 1.6 Q9.5 3.2 9.7 7 Q7.2 8.2 4.7 7 Z" fill="#f2d208"/><path d="M5.9 1.4 Q7.2 -0.4 8.5 1.4 L8.7 2.6 H5.7 Z" fill="#e8a818"/><path d="M2.4 9.8 Q5 11.4 7.4 11.2 L7.2 12 Q4.4 12 2.2 10.6 Z" fill="#f4c82a"/><path d="M6.2 11.1 L9.0 8.8 V10.299999999999999 H12.8 V11.9 H9.0 V13.399999999999999 Z" fill="#1c8a1c"/><path d="M13.9 8.6 L10.9 6.3 V7.75 H7.1000000000000005 V9.45 H10.9 V10.899999999999999 Z" fill="#1c1ca8"/></svg><span class="tx" style="letter-spacing:-0.179px">L2CAP Configure (<span class="g">Dst=</span>0x0045 › <span class="g">Src=</span>0x0044)</span></span><span class="c k3" style="left:449.8px;width:56.299999999999955px">OK</span><span class="c k4" style="left:506.09999999999997px;width:97.40000000000003px">Master: Laptop &lt;-&gt; Sla</span></div>
<div class="r" style="top:63.67px"><span class="c t" style="left:0.0px;width:76.8px">37.964 436 000</span><span class="c it" style="left:76.8px;width:373.0px"><svg class="ex" width="8.4" height="8.4" viewBox="0 0 7.6 7.6"><rect x="0.5" y="0.5" width="6.6" height="6.6" rx="1.3" fill="#f1f4f8" stroke="#7d8ea4" stroke-width="0.9"/><path d="M1.9 3.8 H5.7 M3.8 1.9 V5.7" stroke="#000" stroke-width="1"/></svg><svg class="ic" width="15" height="15" viewBox="0 0 15 15"><rect x="0.4" y="2.6" width="7.4" height="5.6" rx="2.8" fill="#8e8e8e"/><rect x="6.2" y="2.6" width="7.4" height="5.6" rx="2.8" fill="#a4a4a4"/><rect x="2.2" y="4.5" width="3.4" height="1.8" rx="0.9" fill="#e6e6e6"/><rect x="8.6" y="4.5" width="3.4" height="1.8" rx="0.9" fill="#efefef"/><rect x="4.8" y="4.7" width="4.4" height="1.4" fill="#666"/><path d="M6.2 11.9 L9.0 9.600000000000001 V11.1 H12.8 V12.700000000000001 H9.0 V14.2 Z" fill="#1c8a1c"/><path d="M13.9 9.4 L10.9 7.1000000000000005 V8.55 H7.1000000000000005 V10.25 H10.9 V11.7 Z" fill="#1c1ca8"/></svg><span class="tx" style="letter-spacing:-0.295px">LMP Unsniff (Accepted)</span></span><span class="c k3" style="left:449.8px;width:56.299999999999955px">OK</span><span class="c k4" style="left:506.09999999999997px;width:97.40000000000003px">Master: Laptop &lt;-&gt; Sla</span></div>
<div class="r" style="top:79.50px"><span class="c t" style="left:0.0px;width:76.8px">37.983 186 875</span><span class="c it" style="left:76.8px;width:373.0px"><svg class="ex" width="8.4" height="8.4" viewBox="0 0 7.6 7.6"><rect x="0.5" y="0.5" width="6.6" height="6.6" rx="1.3" fill="#f1f4f8" stroke="#7d8ea4" stroke-width="0.9"/><path d="M1.9 3.8 H5.7 M3.8 1.9 V5.7" stroke="#000" stroke-width="1"/></svg><svg class="ic" width="15" height="15" viewBox="0 0 15 15"><path d="M4.6 2.6 L10.6 1.0 L10.6 3.2 L4.6 4.8 Z" fill="#3aa83a"/><rect x="4.6" y="2.8" width="1.1" height="6.6" fill="#2c8c2c"/><rect x="9.5" y="1.4" width="1.1" height="6.2" fill="#2c8c2c"/><ellipse cx="3.6" cy="9.4" rx="2.1" ry="1.6" fill="#2c8c2c"/><ellipse cx="8.6" cy="7.8" rx="2.0" ry="1.5" fill="#3aa83a"/><path d="M6.2 11.9 L9.0 9.600000000000001 V11.1 H12.8 V12.700000000000001 H9.0 V14.2 Z" fill="#1c8a1c"/><path d="M13.9 9.4 L10.9 7.1000000000000005 V8.55 H7.1000000000000005 V10.25 H10.9 V11.7 Z" fill="#1c1ca8"/></svg><span class="tx" style="letter-spacing:-0.353px">AVDTP Discover Command › <span class="g">Used=</span>No, <span class="g">ACP=</span>1</span></span><span class="c k3" style="left:449.8px;width:56.299999999999955px">OK</span><span class="c k4" style="left:506.09999999999997px;width:97.40000000000003px">Master: Laptop &lt;-&gt; Sla</span></div>
<div class="r" style="top:95.33px"><span class="c t" style="left:0.0px;width:76.8px">38.010 686 625</span><span class="c it" style="left:76.8px;width:373.0px"><svg class="ex" width="8.4" height="8.4" viewBox="0 0 7.6 7.6"><rect x="0.5" y="0.5" width="6.6" height="6.6" rx="1.3" fill="#f1f4f8" stroke="#7d8ea4" stroke-width="0.9"/><path d="M1.9 3.8 H5.7 M3.8 1.9 V5.7" stroke="#000" stroke-width="1"/></svg><svg class="ic" width="15" height="15" viewBox="0 0 15 15"><path d="M4.6 2.6 L10.6 1.0 L10.6 3.2 L4.6 4.8 Z" fill="#3aa83a"/><rect x="4.6" y="2.8" width="1.1" height="6.6" fill="#2c8c2c"/><rect x="9.5" y="1.4" width="1.1" height="6.2" fill="#2c8c2c"/><ellipse cx="3.6" cy="9.4" rx="2.1" ry="1.6" fill="#2c8c2c"/><ellipse cx="8.6" cy="7.8" rx="2.0" ry="1.5" fill="#3aa83a"/><path d="M6.2 11.9 L9.0 9.600000000000001 V11.1 H12.8 V12.700000000000001 H9.0 V14.2 Z" fill="#1c8a1c"/><path d="M13.9 9.4 L10.9 7.1000000000000005 V8.55 H7.1000000000000005 V10.25 H10.9 V11.7 Z" fill="#1c1ca8"/></svg><span class="tx" style="letter-spacing:-0.300px">AVDTP Get Capabilities (<span class="g">ACP=</span>1) › Media Transport | Audio | SBC: 48kHz</span></span><span class="c k3" style="left:449.8px;width:56.299999999999955px">OK</span><span class="c k4" style="left:506.09999999999997px;width:97.40000000000003px">Master: Laptop &lt;-&gt; Sla</span></div>
<div class="r" style="top:111.16px"><span class="c t" style="left:0.0px;width:76.8px">38.040 687 250</span><span class="c it" style="left:76.8px;width:373.0px"><svg class="ex" width="8.4" height="8.4" viewBox="0 0 7.6 7.6"><rect x="0.5" y="0.5" width="6.6" height="6.6" rx="1.3" fill="#f1f4f8" stroke="#7d8ea4" stroke-width="0.9"/><path d="M1.9 3.8 H5.7 M3.8 1.9 V5.7" stroke="#000" stroke-width="1"/></svg><svg class="ic" width="15" height="15" viewBox="0 0 15 15"><path d="M4.6 2.6 L10.6 1.0 L10.6 3.2 L4.6 4.8 Z" fill="#3aa83a"/><rect x="4.6" y="2.8" width="1.1" height="6.6" fill="#2c8c2c"/><rect x="9.5" y="1.4" width="1.1" height="6.2" fill="#2c8c2c"/><ellipse cx="3.6" cy="9.4" rx="2.1" ry="1.6" fill="#2c8c2c"/><ellipse cx="8.6" cy="7.8" rx="2.0" ry="1.5" fill="#3aa83a"/><path d="M6.2 11.9 L9.0 9.600000000000001 V11.1 H12.8 V12.700000000000001 H9.0 V14.2 Z" fill="#1c8a1c"/><path d="M13.9 9.4 L10.9 7.1000000000000005 V8.55 H7.1000000000000005 V10.25 H10.9 V11.7 Z" fill="#1c1ca8"/></svg><span class="tx" style="letter-spacing:-0.195px">AVDTP Set Configuration (<span class="g">ACP=</span>1, <span class="g">INT=</span>52, Media Transport | Audio | SBC: Joint ...</span></span><span class="c k3" style="left:449.8px;width:56.299999999999955px">OK</span><span class="c k4" style="left:506.09999999999997px;width:97.40000000000003px">Master: Laptop &lt;-&gt; Sla</span></div>
<div class="r" style="top:127.00px"><span class="c t" style="left:0.0px;width:76.8px">38.070 688 000</span><span class="c it" style="left:76.8px;width:373.0px"><svg class="ex" width="8.4" height="8.4" viewBox="0 0 7.6 7.6"><rect x="0.5" y="0.5" width="6.6" height="6.6" rx="1.3" fill="#f1f4f8" stroke="#7d8ea4" stroke-width="0.9"/><path d="M1.9 3.8 H5.7 M3.8 1.9 V5.7" stroke="#000" stroke-width="1"/></svg><svg class="ic" width="15" height="15" viewBox="0 0 15 15"><path d="M4.6 2.6 L10.6 1.0 L10.6 3.2 L4.6 4.8 Z" fill="#3aa83a"/><rect x="4.6" y="2.8" width="1.1" height="6.6" fill="#2c8c2c"/><rect x="9.5" y="1.4" width="1.1" height="6.2" fill="#2c8c2c"/><ellipse cx="3.6" cy="9.4" rx="2.1" ry="1.6" fill="#2c8c2c"/><ellipse cx="8.6" cy="7.8" rx="2.0" ry="1.5" fill="#3aa83a"/><path d="M6.2 11.9 L9.0 9.600000000000001 V11.1 H12.8 V12.700000000000001 H9.0 V14.2 Z" fill="#1c8a1c"/><path d="M13.9 9.4 L10.9 7.1000000000000005 V8.55 H7.1000000000000005 V10.25 H10.9 V11.7 Z" fill="#1c1ca8"/></svg><span class="tx" style="letter-spacing:-0.291px">AVDTP Open (<span class="g">ACP=</span>1) › Accept</span></span><span class="c k3" style="left:449.8px;width:56.299999999999955px">OK</span><span class="c k4" style="left:506.09999999999997px;width:97.40000000000003px">Master: Laptop &lt;-&gt; Sla</span></div>
<div class="r" style="top:142.83px"><span class="c t" style="left:0.0px;width:76.8px">38.100 687 750</span><span class="c it" style="left:76.8px;width:373.0px"><svg class="ex" width="8.4" height="8.4" viewBox="0 0 7.6 7.6"><rect x="0.5" y="0.5" width="6.6" height="6.6" rx="1.3" fill="#f1f4f8" stroke="#7d8ea4" stroke-width="0.9"/><path d="M1.9 3.8 H5.7 M3.8 1.9 V5.7" stroke="#000" stroke-width="1"/></svg><svg class="ic" width="15" height="15" viewBox="0 0 15 15"><ellipse cx="7.1" cy="7.6" rx="6.9" ry="3.6" fill="#f0a01c"/><ellipse cx="7.1" cy="7.2" rx="5.2" ry="2.4" fill="#f8bc2a"/><ellipse cx="4.5" cy="8.1" rx="2.5" ry="2.1" fill="#c8281a"/><path d="M4.7 7 Q4.9 3.2 5.4 1.6 Q5.9 0.1 7.2 0.1 Q8.5 0.1 9 1.6 Q9.5 3.2 9.7 7 Q7.2 8.2 4.7 7 Z" fill="#f2d208"/><path d="M5.9 1.4 Q7.2 -0.4 8.5 1.4 L8.7 2.6 H5.7 Z" fill="#e8a818"/><path d="M2.4 9.8 Q5 11.4 7.4 11.2 L7.2 12 Q4.4 12 2.2 10.6 Z" fill="#f4c82a"/><path d="M6.2 11.1 L9.0 8.8 V10.299999999999999 H12.8 V11.9 H9.0 V13.399999999999999 Z" fill="#1c8a1c"/><path d="M13.9 8.6 L10.9 6.3 V7.75 H7.1000000000000005 V9.45 H10.9 V10.899999999999999 Z" fill="#1c1ca8"/></svg><span class="tx" style="letter-spacing:-0.296px">L2CAP Connection (<span class="g">Src=</span>0x0045, <span class="g">PSM=</span>AVDTP › <span class="g">Dst=</span>0x0046)</span></span><span class="c k3" style="left:449.8px;width:56.299999999999955px">OK</span><span class="c k4" style="left:506.09999999999997px;width:97.40000000000003px">Master: Laptop &lt;-&gt; Sla</span></div>
<div class="r" style="top:158.66px"><span class="c t" style="left:0.0px;width:76.8px">38.130 065 000</span><span class="c it" style="left:76.8px;width:373.0px"><svg class="ex" width="8.4" height="8.4" viewBox="0 0 7.6 7.6"><rect x="0.5" y="0.5" width="6.6" height="6.6" rx="1.3" fill="#f1f4f8" stroke="#7d8ea4" stroke-width="0.9"/><path d="M1.9 3.8 H5.7 M3.8 1.9 V5.7" stroke="#000" stroke-width="1"/></svg><svg class="ic" width="15" height="15" viewBox="0 0 15 15"><ellipse cx="7.1" cy="7.6" rx="6.9" ry="3.6" fill="#f0a01c"/><ellipse cx="7.1" cy="7.2" rx="5.2" ry="2.4" fill="#f8bc2a"/><ellipse cx="4.5" cy="8.1" rx="2.5" ry="2.1" fill="#c8281a"/><path d="M4.7 7 Q4.9 3.2 5.4 1.6 Q5.9 0.1 7.2 0.1 Q8.5 0.1 9 1.6 Q9.5 3.2 9.7 7 Q7.2 8.2 4.7 7 Z" fill="#f2d208"/><path d="M5.9 1.4 Q7.2 -0.4 8.5 1.4 L8.7 2.6 H5.7 Z" fill="#e8a818"/><path d="M2.4 9.8 Q5 11.4 7.4 11.2 L7.2 12 Q4.4 12 2.2 10.6 Z" fill="#f4c82a"/><path d="M13.9 11.4 L10.9 9.100000000000001 V10.55 H7.1000000000000005 V12.25 H10.9 V13.7 Z" fill="#1c1ca8"/><path d="M6.6 8.8 L9.399999999999999 6.500000000000001 V8.0 H13.2 V9.600000000000001 H9.399999999999999 V11.100000000000001 Z" fill="#1c8a1c"/></svg><span class="tx" style="letter-spacing:-0.211px">L2CAP Configure (<span class="g">Dst=</span>0x0045, <span class="g">MTU=</span>1'000 › <span class="g">Src=</span>0x0046)</span></span><span class="c k3" style="left:449.8px;width:56.299999999999955px">OK</span><span class="c k4" style="left:506.09999999999997px;width:97.40000000000003px">Master: Laptop &lt;-&gt; Sla</span></div>
<div class="r" style="top:174.49px"><span class="c t" style="left:0.0px;width:76.8px">38.131 938 250</span><span class="c it" style="left:76.8px;width:373.0px"><svg class="ex" width="8.4" height="8.4" viewBox="0 0 7.6 7.6"><rect x="0.5" y="0.5" width="6.6" height="6.6" rx="1.3" fill="#f1f4f8" stroke="#7d8ea4" stroke-width="0.9"/><path d="M1.9 3.8 H5.7 M3.8 1.9 V5.7" stroke="#000" stroke-width="1"/></svg><svg class="ic" width="15" height="15" viewBox="0 0 15 15"><ellipse cx="7.1" cy="7.6" rx="6.9" ry="3.6" fill="#f0a01c"/><ellipse cx="7.1" cy="7.2" rx="5.2" ry="2.4" fill="#f8bc2a"/><ellipse cx="4.5" cy="8.1" rx="2.5" ry="2.1" fill="#c8281a"/><path d="M4.7 7 Q4.9 3.2 5.4 1.6 Q5.9 0.1 7.2 0.1 Q8.5 0.1 9 1.6 Q9.5 3.2 9.7 7 Q7.2 8.2 4.7 7 Z" fill="#f2d208"/><path d="M5.9 1.4 Q7.2 -0.4 8.5 1.4 L8.7 2.6 H5.7 Z" fill="#e8a818"/><path d="M2.4 9.8 Q5 11.4 7.4 11.2 L7.2 12 Q4.4 12 2.2 10.6 Z" fill="#f4c82a"/><path d="M6.2 11.1 L9.0 8.8 V10.299999999999999 H12.8 V11.9 H9.0 V13.399999999999999 Z" fill="#1c8a1c"/><path d="M13.9 8.6 L10.9 6.3 V7.75 H7.1000000000000005 V9.45 H10.9 V10.899999999999999 Z" fill="#1c1ca8"/></svg><span class="tx" style="letter-spacing:-0.179px">L2CAP Configure (<span class="g">Dst=</span>0x0046 › <span class="g">Src=</span>0x0045)</span></span><span class="c k3" style="left:449.8px;width:56.299999999999955px">OK</span><span class="c k4" style="left:506.09999999999997px;width:97.40000000000003px">Master: Laptop &lt;-&gt; Sla</span></div>
<div class="r" style="top:190.32px"><span class="c t" style="left:0.0px;width:76.8px">38.517 567 750</span><span class="c it" style="left:76.8px;width:373.0px"><svg class="ex" width="8.4" height="8.4" viewBox="0 0 7.6 7.6"><rect x="0.5" y="0.5" width="6.6" height="6.6" rx="1.3" fill="#f1f4f8" stroke="#7d8ea4" stroke-width="0.9"/><path d="M1.9 3.8 H5.7 M3.8 1.9 V5.7" stroke="#000" stroke-width="1"/></svg><svg class="ic" width="15" height="15" viewBox="0 0 15 15"><rect x="0.4" y="2.6" width="7.4" height="5.6" rx="2.8" fill="#8e8e8e"/><rect x="6.2" y="2.6" width="7.4" height="5.6" rx="2.8" fill="#a4a4a4"/><rect x="2.2" y="4.5" width="3.4" height="1.8" rx="0.9" fill="#e6e6e6"/><rect x="8.6" y="4.5" width="3.4" height="1.8" rx="0.9" fill="#efefef"/><rect x="4.8" y="4.7" width="4.4" height="1.4" fill="#666"/><path d="M6.6 11.4 l3.2 -2.8 v1.7 h3.6 v2.2 h-3.6 v1.7 z" fill="#1c8a1c"/></svg><span class="tx" style="letter-spacing:-0.260px">LMP Preferred Rate (FEC, <span class="g">BR=</span>No preference, <span class="g">EDR=</span>Use 3 Mbps packets, <span class="g">Pref=</span>N...</span></span><span class="c k3" style="left:449.8px;width:56.299999999999955px"></span><span class="c k4" style="left:506.09999999999997px;width:97.40000000000003px">Master: Laptop &lt;-&gt; Sla</span></div>
<div class="r" style="top:206.16px"><span class="c t" style="left:0.0px;width:76.8px">40.003 197 625</span><span class="c it" style="left:76.8px;width:373.0px"><svg class="ex" width="8.4" height="8.4" viewBox="0 0 7.6 7.6"><rect x="0.5" y="0.5" width="6.6" height="6.6" rx="1.3" fill="#f1f4f8" stroke="#7d8ea4" stroke-width="0.9"/><path d="M1.9 3.8 H5.7 M3.8 1.9 V5.7" stroke="#000" stroke-width="1"/></svg><svg class="ic" width="15" height="15" viewBox="0 0 15 15"><path d="M0.6 7.4 Q7.4 0.4 14.2 7.4 Q7.4 13.6 0.6 7.4 Z" fill="#fff" stroke="#3c3c3c" stroke-width="0.9"/><circle cx="7.4" cy="7" r="2.9" fill="#fff" stroke="#333" stroke-width="1.2"/><circle cx="7.4" cy="7" r="1.3" fill="#222"/></svg><span class="tx" style="letter-spacing:-0.128px">Inquiry (no responders, 20 s)</span></span><span class="c k3" style="left:449.8px;width:56.299999999999955px">OK</span><span class="c k4" style="left:506.09999999999997px;width:97.40000000000003px">Master: Inquirer &lt;-&gt; Sl</span></div>
<div class="r" style="top:221.99px"><span class="c t" style="left:0.0px;width:76.8px">40.099 446 250</span><span class="c it" style="left:76.8px;width:373.0px"><svg class="ex" width="8.4" height="8.4" viewBox="0 0 7.6 7.6"><rect x="0.5" y="0.5" width="6.6" height="6.6" rx="1.3" fill="#f1f4f8" stroke="#7d8ea4" stroke-width="0.9"/><path d="M1.9 3.8 H5.7 M3.8 1.9 V5.7" stroke="#000" stroke-width="1"/></svg><svg class="ic" width="15" height="15" viewBox="0 0 15 15"><rect x="0.4" y="2.6" width="7.4" height="5.6" rx="2.8" fill="#8e8e8e"/><rect x="6.2" y="2.6" width="7.4" height="5.6" rx="2.8" fill="#a4a4a4"/><rect x="2.2" y="4.5" width="3.4" height="1.8" rx="0.9" fill="#e6e6e6"/><rect x="8.6" y="4.5" width="3.4" height="1.8" rx="0.9" fill="#efefef"/><rect x="4.8" y="4.7" width="4.4" height="1.4" fill="#666"/><path d="M14.2 11.4 l-3.2 -2.8 v1.7 h-3.6 v2.2 h3.6 v1.7 z" fill="#1c1ca8"/></svg><span class="tx" style="letter-spacing:-0.218px">LMP Preferred Rate (<span class="g">BR=</span>No preference, <span class="g">EDR=</span>Use 3 Mbps packets, <span class="g">Pref=</span>Use 5-...</span></span><span class="c k3" style="left:449.8px;width:56.299999999999955px"></span><span class="c k4" style="left:506.09999999999997px;width:97.40000000000003px">Master: Laptop &lt;-&gt; Sla</span></div>
<div class="r" style="top:237.82px"><span class="c t" style="left:0.0px;width:76.8px">44.204 464 000</span><span class="c it" style="left:76.8px;width:373.0px"><svg class="ex" width="8.4" height="8.4" viewBox="0 0 7.6 7.6"><rect x="0.5" y="0.5" width="6.6" height="6.6" rx="1.3" fill="#f1f4f8" stroke="#7d8ea4" stroke-width="0.9"/><path d="M1.9 3.8 H5.7 M3.8 1.9 V5.7" stroke="#000" stroke-width="1"/></svg><svg class="ic" width="15" height="15" viewBox="0 0 15 15"><rect x="0.4" y="2.6" width="7.4" height="5.6" rx="2.8" fill="#8e8e8e"/><rect x="6.2" y="2.6" width="7.4" height="5.6" rx="2.8" fill="#a4a4a4"/><rect x="2.2" y="4.5" width="3.4" height="1.8" rx="0.9" fill="#e6e6e6"/><rect x="8.6" y="4.5" width="3.4" height="1.8" rx="0.9" fill="#efefef"/><rect x="4.8" y="4.7" width="4.4" height="1.4" fill="#666"/><path d="M6.2 11.9 L9.0 9.600000000000001 V11.1 H12.8 V12.700000000000001 H9.0 V14.2 Z" fill="#1c8a1c"/><path d="M13.9 9.4 L10.9 7.1000000000000005 V8.55 H7.1000000000000005 V10.25 H10.9 V11.7 Z" fill="#1c1ca8"/></svg><span class="tx" style="letter-spacing:-0.351px">LMP Name Transaction ("Xbox Gamepad Controller 281878FA51D9")</span></span><span class="c k3" style="left:449.8px;width:56.299999999999955px">OK</span><span class="c k4" style="left:506.09999999999997px;width:97.40000000000003px">Master: Laptop &lt;-&gt; Sla</span></div>
<div class="r" style="top:253.65px"><span class="c t" style="left:0.0px;width:76.8px">55.142 012 625</span><span class="c it" style="left:76.8px;width:373.0px"><svg class="ex" width="8.4" height="8.4" viewBox="0 0 7.6 7.6"><rect x="0.5" y="0.5" width="6.6" height="6.6" rx="1.3" fill="#f1f4f8" stroke="#7d8ea4" stroke-width="0.9"/><path d="M1.9 3.8 H5.7 M3.8 1.9 V5.7" stroke="#000" stroke-width="1"/></svg><svg class="ic" width="15" height="15" viewBox="0 0 15 15"><ellipse cx="7.1" cy="7.6" rx="6.9" ry="3.6" fill="#f0a01c"/><ellipse cx="7.1" cy="7.2" rx="5.2" ry="2.4" fill="#f8bc2a"/><ellipse cx="4.5" cy="8.1" rx="2.5" ry="2.1" fill="#c8281a"/><path d="M4.7 7 Q4.9 3.2 5.4 1.6 Q5.9 0.1 7.2 0.1 Q8.5 0.1 9 1.6 Q9.5 3.2 9.7 7 Q7.2 8.2 4.7 7 Z" fill="#f2d208"/><path d="M5.9 1.4 Q7.2 -0.4 8.5 1.4 L8.7 2.6 H5.7 Z" fill="#e8a818"/><path d="M2.4 9.8 Q5 11.4 7.4 11.2 L7.2 12 Q4.4 12 2.2 10.6 Z" fill="#f4c82a"/><path d="M14 12.2 l-2.8800000000000003 -2.52 v1.53 h-3.24 v1.9800000000000002 h3.24 v1.53 z" fill="#1c1ca8"/><path d="M0.3 13.8 L3.2 8.2 L6.1 13.8 Z" fill="#ffd800" stroke="#8a6a00" stroke-width="0.6"/><rect x="2.9" y="10" width="0.7" height="2.2" fill="#000"/><rect x="2.9" y="12.6" width="0.7" height="0.7" fill="#000"/></svg><span class="tx" style="letter-spacing:-0.314px">L2CAP Signaling Reserved (0x00) (15 bytes (EC 86 F0 D8 24 E3 40 5E 0F 22 98 D...</span></span><span class="c k3" style="left:449.8px;width:56.299999999999955px">Warning</span><span class="c k4" style="left:506.09999999999997px;width:97.40000000000003px">Master: Laptop &lt;-&gt; Sla</span></div>
<div class="r" style="top:269.48px"><span class="c t" style="left:0.0px;width:76.8px">56.521 396 000</span><span class="c it" style="left:76.8px;width:373.0px"><svg class="ex" width="8.4" height="8.4" viewBox="0 0 7.6 7.6"><rect x="0.5" y="0.5" width="6.6" height="6.6" rx="1.3" fill="#f1f4f8" stroke="#7d8ea4" stroke-width="0.9"/><path d="M1.9 3.8 H5.7 M3.8 1.9 V5.7" stroke="#000" stroke-width="1"/></svg><svg class="ic" width="15" height="15" viewBox="0 0 15 15"><rect x="0.4" y="2.6" width="7.4" height="5.6" rx="2.8" fill="#8e8e8e"/><rect x="6.2" y="2.6" width="7.4" height="5.6" rx="2.8" fill="#a4a4a4"/><rect x="2.2" y="4.5" width="3.4" height="1.8" rx="0.9" fill="#e6e6e6"/><rect x="8.6" y="4.5" width="3.4" height="1.8" rx="0.9" fill="#efefef"/><rect x="4.8" y="4.7" width="4.4" height="1.4" fill="#666"/><path d="M6.6 11.4 l3.2 -2.8 v1.7 h3.6 v2.2 h-3.6 v1.7 z" fill="#1c8a1c"/></svg><span class="tx" style="letter-spacing:-0.236px">LMP Preferred Rate (<span class="g">BR=</span>No preference, <span class="g">EDR=</span>Use 2 Mbps packets, <span class="g">Pref=</span>No pre...</span></span><span class="c k3" style="left:449.8px;width:56.299999999999955px"></span><span class="c k4" style="left:506.09999999999997px;width:97.40000000000003px">Master: Laptop &lt;-&gt; Sla</span></div>
<div class="r" style="top:285.32px"><span class="c t" style="left:0.0px;width:76.8px">60.003 284 125</span><span class="c it" style="left:76.8px;width:373.0px"><svg class="ex" width="8.4" height="8.4" viewBox="0 0 7.6 7.6"><rect x="0.5" y="0.5" width="6.6" height="6.6" rx="1.3" fill="#f1f4f8" stroke="#7d8ea4" stroke-width="0.9"/><path d="M1.9 3.8 H5.7 M3.8 1.9 V5.7" stroke="#000" stroke-width="1"/></svg><svg class="ic" width="15" height="15" viewBox="0 0 15 15"><path d="M0.6 7.4 Q7.4 0.4 14.2 7.4 Q7.4 13.6 0.6 7.4 Z" fill="#fff" stroke="#3c3c3c" stroke-width="0.9"/><circle cx="7.4" cy="7" r="2.9" fill="#fff" stroke="#333" stroke-width="1.2"/><circle cx="7.4" cy="7" r="1.3" fill="#222"/></svg><span class="tx" style="letter-spacing:-0.122px">Inquiry (2 responders, 20 s)</span></span><span class="c k3" style="left:449.8px;width:56.299999999999955px">OK</span><span class="c k4" style="left:506.09999999999997px;width:97.40000000000003px">Master: Inquirer &lt;-&gt; Sl</span></div>
<div class="r" style="top:301.15px"><span class="c t" style="left:0.0px;width:76.8px">64.531 432 875</span><span class="c it" style="left:76.8px;width:373.0px"><svg class="ex" width="8.4" height="8.4" viewBox="0 0 7.6 7.6"><rect x="0.5" y="0.5" width="6.6" height="6.6" rx="1.3" fill="#f1f4f8" stroke="#7d8ea4" stroke-width="0.9"/><path d="M1.9 3.8 H5.7 M3.8 1.9 V5.7" stroke="#000" stroke-width="1"/></svg><svg class="ic" width="15" height="15" viewBox="0 0 15 15"><rect x="0.4" y="2.6" width="7.4" height="5.6" rx="2.8" fill="#8e8e8e"/><rect x="6.2" y="2.6" width="7.4" height="5.6" rx="2.8" fill="#a4a4a4"/><rect x="2.2" y="4.5" width="3.4" height="1.8" rx="0.9" fill="#e6e6e6"/><rect x="8.6" y="4.5" width="3.4" height="1.8" rx="0.9" fill="#efefef"/><rect x="4.8" y="4.7" width="4.4" height="1.4" fill="#666"/><path d="M6.6 11.4 l3.2 -2.8 v1.7 h3.6 v2.2 h-3.6 v1.7 z" fill="#1c8a1c"/></svg><span class="tx" style="letter-spacing:-0.260px">LMP Preferred Rate (FEC, <span class="g">BR=</span>No preference, <span class="g">EDR=</span>Use 3 Mbps packets, <span class="g">Pref=</span>N...</span></span><span class="c k3" style="left:449.8px;width:56.299999999999955px"></span><span class="c k4" style="left:506.09999999999997px;width:97.40000000000003px">Master: Laptop &lt;-&gt; Sla</span></div>
<div class="r" style="top:316.98px"><span class="c t" style="left:0.0px;width:76.8px">78.296 146 125</span><span class="c it" style="left:76.8px;width:373.0px"><svg class="ex" width="8.4" height="8.4" viewBox="0 0 7.6 7.6"><rect x="0.5" y="0.5" width="6.6" height="6.6" rx="1.3" fill="#f1f4f8" stroke="#7d8ea4" stroke-width="0.9"/><path d="M1.9 3.8 H5.7 M3.8 1.9 V5.7" stroke="#000" stroke-width="1"/></svg><svg class="ic" width="15" height="15" viewBox="0 0 15 15"><rect x="0.4" y="5" width="3.6" height="1" fill="#444"/><rect x="0.4" y="8" width="3.6" height="1" fill="#444"/><path d="M4 3.2 H9.4 L11 4.6 V9.4 L9.4 10.8 H4 Z" fill="#2f74d0"/><rect x="11" y="6" width="3" height="2.2" fill="#1c4fa0"/></svg><span class="tx" style="letter-spacing:-0.301px">Paging (Unknown BD_ADDR &gt; :xx:FE:CB:CE, no response, 20.6 s)</span></span><span class="c k3" style="left:449.8px;width:56.299999999999955px">OK</span><span class="c k4" style="left:506.09999999999997px;width:97.40000000000003px">Master: Unknown BD_AD</span></div>
<div class="r hl" style="top:332.81px"><span class="c t" style="left:0.0px;width:76.8px">80.003 373 125</span><span class="c it" style="left:76.8px;width:373.0px"><svg class="ex" width="8.4" height="8.4" viewBox="0 0 7.6 7.6"><rect x="0.5" y="0.5" width="6.6" height="6.6" rx="1.3" fill="#f1f4f8" stroke="#7d8ea4" stroke-width="0.9"/><path d="M1.9 3.8 H5.7 M3.8 1.9 V5.7" stroke="#000" stroke-width="1"/></svg><svg class="ic" width="15" height="15" viewBox="0 0 15 15"><path d="M0.6 7.4 Q7.4 0.4 14.2 7.4 Q7.4 13.6 0.6 7.4 Z" fill="#fff" stroke="#3c3c3c" stroke-width="0.9"/><circle cx="7.4" cy="7" r="2.9" fill="#fff" stroke="#333" stroke-width="1.2"/><circle cx="7.4" cy="7" r="1.3" fill="#222"/></svg><span class="tx" style="letter-spacing:-0.103px">Inquiry (2 responders, 19.3 s)</span></span><span class="c k3" style="left:449.8px;width:56.299999999999955px">OK</span><span class="c k4" style="left:506.09999999999997px;width:97.40000000000003px">Master: Inquirer &lt;-&gt; Sl</span></div>
<div class="r" style="top:348.64px"><span class="c t" style="left:0.0px;width:76.8px">95.477 449 500</span><span class="c it" style="left:76.8px;width:373.0px"><svg class="ex" width="8.4" height="8.4" viewBox="0 0 7.6 7.6"><rect x="0.5" y="0.5" width="6.6" height="6.6" rx="1.3" fill="#f1f4f8" stroke="#7d8ea4" stroke-width="0.9"/><path d="M1.9 3.8 H5.7 M3.8 1.9 V5.7" stroke="#000" stroke-width="1"/></svg><svg class="ic" width="15" height="15" viewBox="0 0 15 15"><rect x="0.4" y="5" width="3.6" height="1" fill="#444"/><rect x="0.4" y="8" width="3.6" height="1" fill="#444"/><path d="M4 3.2 H9.4 L11 4.6 V9.4 L9.4 10.8 H4 Z" fill="#2f74d0"/><rect x="11" y="6" width="3" height="2.2" fill="#1c4fa0"/></svg><span class="tx" style="letter-spacing:-0.301px">Paging (Unknown BD_ADDR &gt; :xx:FE:CB:CE, no response, 3.44 s)</span></span><span class="c k3" style="left:449.8px;width:56.299999999999955px">OK</span><span class="c k4" style="left:506.09999999999997px;width:97.40000000000003px">Master: Unknown BD_AD</span></div>
<div class="r" style="top:364.48px"><span class="c t" style="left:0.0px;width:76.8px">105.818 488 000</span><span class="c it" style="left:76.8px;width:373.0px"><svg class="ex" width="8.4" height="8.4" viewBox="0 0 7.6 7.6"><rect x="0.5" y="0.5" width="6.6" height="6.6" rx="1.3" fill="#f1f4f8" stroke="#7d8ea4" stroke-width="0.9"/><path d="M1.9 3.8 H5.7 M3.8 1.9 V5.7" stroke="#000" stroke-width="1"/></svg><svg class="ic" width="15" height="15" viewBox="0 0 15 15"><path d="M4.6 2.6 L10.6 1.0 L10.6 3.2 L4.6 4.8 Z" fill="#3aa83a"/><rect x="4.6" y="2.8" width="1.1" height="6.6" fill="#2c8c2c"/><rect x="9.5" y="1.4" width="1.1" height="6.2" fill="#2c8c2c"/><ellipse cx="3.6" cy="9.4" rx="2.1" ry="1.6" fill="#2c8c2c"/><ellipse cx="8.6" cy="7.8" rx="2.0" ry="1.5" fill="#3aa83a"/><path d="M6.2 11.9 L9.0 9.600000000000001 V11.1 H12.8 V12.700000000000001 H9.0 V14.2 Z" fill="#1c8a1c"/><path d="M13.9 9.4 L10.9 7.1000000000000005 V8.55 H7.1000000000000005 V10.25 H10.9 V11.7 Z" fill="#1c1ca8"/></svg><span class="tx" style="letter-spacing:-0.225px">AVDTP Start (<span class="g">ACP=</span>1) › Accept</span></span><span class="c k3" style="left:449.8px;width:56.299999999999955px">OK</span><span class="c k4" style="left:506.09999999999997px;width:97.40000000000003px">Master: Laptop &lt;-&gt; Sla</span></div>
<div class="r" style="top:380.31px"><span class="c t" style="left:0.0px;width:76.8px">105.847 241 500</span><span class="c it" style="left:76.8px;width:373.0px"><svg class="ex" width="8.4" height="8.4" viewBox="0 0 7.6 7.6"><rect x="0.5" y="0.5" width="6.6" height="6.6" rx="1.3" fill="#f1f4f8" stroke="#7d8ea4" stroke-width="0.9"/><path d="M1.9 3.8 H5.7 M3.8 1.9 V5.7" stroke="#000" stroke-width="1"/></svg><svg class="ic" width="15" height="15" viewBox="0 0 15 15"><path d="M4.6 2.6 L10.6 1.0 L10.6 3.2 L4.6 4.8 Z" fill="#3aa83a"/><rect x="4.6" y="2.8" width="1.1" height="6.6" fill="#2c8c2c"/><rect x="9.5" y="1.4" width="1.1" height="6.2" fill="#2c8c2c"/><ellipse cx="3.6" cy="9.4" rx="2.1" ry="1.6" fill="#2c8c2c"/><ellipse cx="8.6" cy="7.8" rx="2.0" ry="1.5" fill="#3aa83a"/><path d="M14.4 11.6 l-3.2 -2.8 v1.7 h-3.6 v2.2 h3.6 v1.7 z" fill="#1c1ca8"/></svg><span class="tx" style="letter-spacing:-0.330px">AVDTP Media Stream (<span class="g">Codec=</span>SBC: Joint Stereo, 44.1kHz, Loudness, 8 Subbands, <span class="g">S.</span></span></span><span class="c k3" style="left:449.8px;width:56.299999999999955px">OK</span><span class="c k4" style="left:506.09999999999997px;width:97.40000000000003px">Master: Laptop &lt;-&gt; Sla</span></div>
<div class="r" style="top:396.14px"><span class="c t" style="left:0.0px;width:76.8px">106.828 494 500</span><span class="c it" style="left:76.8px;width:373.0px"><svg class="ex" width="8.4" height="8.4" viewBox="0 0 7.6 7.6"><rect x="0.5" y="0.5" width="6.6" height="6.6" rx="1.3" fill="#f1f4f8" stroke="#7d8ea4" stroke-width="0.9"/><path d="M1.9 3.8 H5.7 M3.8 1.9 V5.7" stroke="#000" stroke-width="1"/></svg><svg class="ic" width="15" height="15" viewBox="0 0 15 15"><path d="M4.6 2.6 L10.6 1.0 L10.6 3.2 L4.6 4.8 Z" fill="#3aa83a"/><rect x="4.6" y="2.8" width="1.1" height="6.6" fill="#2c8c2c"/><rect x="9.5" y="1.4" width="1.1" height="6.2" fill="#2c8c2c"/><ellipse cx="3.6" cy="9.4" rx="2.1" ry="1.6" fill="#2c8c2c"/><ellipse cx="8.6" cy="7.8" rx="2.0" ry="1.5" fill="#3aa83a"/><path d="M14.4 11.6 l-3.2 -2.8 v1.7 h-3.6 v2.2 h3.6 v1.7 z" fill="#1c1ca8"/></svg><span class="tx" style="letter-spacing:-0.330px">AVDTP Media Stream (<span class="g">Codec=</span>SBC: Joint Stereo, 44.1kHz, Loudness, 8 Subbands, <span class="g">S.</span></span></span><span class="c k3" style="left:449.8px;width:56.299999999999955px">OK</span><span class="c k4" style="left:506.09999999999997px;width:97.40000000000003px">Master: Laptop &lt;-&gt; Sla</span></div>
<div class="r" style="top:411.97px"><span class="c t" style="left:0.0px;width:76.8px">107.717 247 625</span><span class="c it" style="left:76.8px;width:373.0px"><svg class="ex" width="8.4" height="8.4" viewBox="0 0 7.6 7.6"><rect x="0.5" y="0.5" width="6.6" height="6.6" rx="1.3" fill="#f1f4f8" stroke="#7d8ea4" stroke-width="0.9"/><path d="M1.9 3.8 H5.7 M3.8 1.9 V5.7" stroke="#000" stroke-width="1"/></svg><svg class="ic" width="15" height="15" viewBox="0 0 15 15"><path d="M4.6 2.6 L10.6 1.0 L10.6 3.2 L4.6 4.8 Z" fill="#3aa83a"/><rect x="4.6" y="2.8" width="1.1" height="6.6" fill="#2c8c2c"/><rect x="9.5" y="1.4" width="1.1" height="6.2" fill="#2c8c2c"/><ellipse cx="3.6" cy="9.4" rx="2.1" ry="1.6" fill="#2c8c2c"/><ellipse cx="8.6" cy="7.8" rx="2.0" ry="1.5" fill="#3aa83a"/><path d="M14.4 11.6 l-3.2 -2.8 v1.7 h-3.6 v2.2 h3.6 v1.7 z" fill="#1c1ca8"/></svg><span class="tx" style="letter-spacing:-0.330px">AVDTP Media Stream (<span class="g">Codec=</span>SBC: Joint Stereo, 44.1kHz, Loudness, 8 Subbands, <span class="g">S.</span></span></span><span class="c k3" style="left:449.8px;width:56.299999999999955px">OK</span><span class="c k4" style="left:506.09999999999997px;width:97.40000000000003px">Master: Laptop &lt;-&gt; Sla</span></div>
<div class="r" style="top:427.80px"><span class="c t" style="left:0.0px;width:76.8px">108.219 749 250</span><span class="c it" style="left:76.8px;width:373.0px"><svg class="ex" width="8.4" height="8.4" viewBox="0 0 7.6 7.6"><rect x="0.5" y="0.5" width="6.6" height="6.6" rx="1.3" fill="#f1f4f8" stroke="#7d8ea4" stroke-width="0.9"/><path d="M1.9 3.8 H5.7 M3.8 1.9 V5.7" stroke="#000" stroke-width="1"/></svg><svg class="ic" width="15" height="15" viewBox="0 0 15 15"><path d="M4.6 2.6 L10.6 1.0 L10.6 3.2 L4.6 4.8 Z" fill="#3aa83a"/><rect x="4.6" y="2.8" width="1.1" height="6.6" fill="#2c8c2c"/><rect x="9.5" y="1.4" width="1.1" height="6.2" fill="#2c8c2c"/><ellipse cx="3.6" cy="9.4" rx="2.1" ry="1.6" fill="#2c8c2c"/><ellipse cx="8.6" cy="7.8" rx="2.0" ry="1.5" fill="#3aa83a"/><path d="M14.4 11.6 l-3.2 -2.8 v1.7 h-3.6 v2.2 h3.6 v1.7 z" fill="#1c1ca8"/></svg><span class="tx" style="letter-spacing:-0.330px">AVDTP Media Stream (<span class="g">Codec=</span>SBC: Joint Stereo, 44.1kHz, Loudness, 8 Subbands, <span class="g">S.</span></span></span><span class="c k3" style="left:449.8px;width:56.299999999999955px">OK</span><span class="c k4" style="left:506.09999999999997px;width:97.40000000000003px">Master: Laptop &lt;-&gt; Sla</span></div>
<div class="r" style="top:443.64px"><span class="c t" style="left:0.0px;width:76.8px">109.209 753 250</span><span class="c it" style="left:76.8px;width:373.0px"><svg class="ex" width="8.4" height="8.4" viewBox="0 0 7.6 7.6"><rect x="0.5" y="0.5" width="6.6" height="6.6" rx="1.3" fill="#f1f4f8" stroke="#7d8ea4" stroke-width="0.9"/><path d="M1.9 3.8 H5.7 M3.8 1.9 V5.7" stroke="#000" stroke-width="1"/></svg><svg class="ic" width="15" height="15" viewBox="0 0 15 15"><path d="M4.6 2.6 L10.6 1.0 L10.6 3.2 L4.6 4.8 Z" fill="#3aa83a"/><rect x="4.6" y="2.8" width="1.1" height="6.6" fill="#2c8c2c"/><rect x="9.5" y="1.4" width="1.1" height="6.2" fill="#2c8c2c"/><ellipse cx="3.6" cy="9.4" rx="2.1" ry="1.6" fill="#2c8c2c"/><ellipse cx="8.6" cy="7.8" rx="2.0" ry="1.5" fill="#3aa83a"/><path d="M14.4 11.6 l-3.2 -2.8 v1.7 h-3.6 v2.2 h3.6 v1.7 z" fill="#1c1ca8"/></svg><span class="tx" style="letter-spacing:-0.330px">AVDTP Media Stream (<span class="g">Codec=</span>SBC: Joint Stereo, 44.1kHz, Loudness, 8 Subbands, <span class="g">S.</span></span></span><span class="c k3" style="left:449.8px;width:56.299999999999955px">OK</span><span class="c k4" style="left:506.09999999999997px;width:97.40000000000003px">Master: Laptop &lt;-&gt; Sla</span></div>
<div class="r" style="top:459.47px"><span class="c t" style="left:0.0px;width:76.8px">110.218 508 000</span><span class="c it" style="left:76.8px;width:373.0px"><svg class="ex" width="8.4" height="8.4" viewBox="0 0 7.6 7.6"><rect x="0.5" y="0.5" width="6.6" height="6.6" rx="1.3" fill="#f1f4f8" stroke="#7d8ea4" stroke-width="0.9"/><path d="M1.9 3.8 H5.7 M3.8 1.9 V5.7" stroke="#000" stroke-width="1"/></svg><svg class="ic" width="15" height="15" viewBox="0 0 15 15"><path d="M4.6 2.6 L10.6 1.0 L10.6 3.2 L4.6 4.8 Z" fill="#3aa83a"/><rect x="4.6" y="2.8" width="1.1" height="6.6" fill="#2c8c2c"/><rect x="9.5" y="1.4" width="1.1" height="6.2" fill="#2c8c2c"/><ellipse cx="3.6" cy="9.4" rx="2.1" ry="1.6" fill="#2c8c2c"/><ellipse cx="8.6" cy="7.8" rx="2.0" ry="1.5" fill="#3aa83a"/><path d="M14.4 11.6 l-3.2 -2.8 v1.7 h-3.6 v2.2 h3.6 v1.7 z" fill="#1c1ca8"/></svg><span class="tx" style="letter-spacing:-0.330px">AVDTP Media Stream (<span class="g">Codec=</span>SBC: Joint Stereo, 44.1kHz, Loudness, 8 Subbands, <span class="g">S.</span></span></span><span class="c k3" style="left:449.8px;width:56.299999999999955px">OK</span><span class="c k4" style="left:506.09999999999997px;width:97.40000000000003px">Master: Laptop &lt;-&gt; Sla</span></div>
<div class="r" style="top:475.30px"><span class="c t" style="left:0.0px;width:76.8px">111.238 514 500</span><span class="c it" style="left:76.8px;width:373.0px"><svg class="ex" width="8.4" height="8.4" viewBox="0 0 7.6 7.6"><rect x="0.5" y="0.5" width="6.6" height="6.6" rx="1.3" fill="#f1f4f8" stroke="#7d8ea4" stroke-width="0.9"/><path d="M1.9 3.8 H5.7 M3.8 1.9 V5.7" stroke="#000" stroke-width="1"/></svg><svg class="ic" width="15" height="15" viewBox="0 0 15 15"><path d="M4.6 2.6 L10.6 1.0 L10.6 3.2 L4.6 4.8 Z" fill="#3aa83a"/><rect x="4.6" y="2.8" width="1.1" height="6.6" fill="#2c8c2c"/><rect x="9.5" y="1.4" width="1.1" height="6.2" fill="#2c8c2c"/><ellipse cx="3.6" cy="9.4" rx="2.1" ry="1.6" fill="#2c8c2c"/><ellipse cx="8.6" cy="7.8" rx="2.0" ry="1.5" fill="#3aa83a"/><path d="M14.4 11.6 l-3.2 -2.8 v1.7 h-3.6 v2.2 h3.6 v1.7 z" fill="#1c1ca8"/></svg><span class="tx" style="letter-spacing:-0.330px">AVDTP Media Stream (<span class="g">Codec=</span>SBC: Joint Stereo, 44.1kHz, Loudness, 8 Subbands, <span class="g">S.</span></span></span><span class="c k3" style="left:449.8px;width:56.299999999999955px">OK</span><span class="c k4" style="left:506.09999999999997px;width:97.40000000000003px">Master: Laptop &lt;-&gt; Sla</span></div>
<div class="r" style="top:491.13px"><span class="c t" style="left:0.0px;width:76.8px">112.243 519 375</span><span class="c it" style="left:76.8px;width:373.0px"><svg class="ex" width="8.4" height="8.4" viewBox="0 0 7.6 7.6"><rect x="0.5" y="0.5" width="6.6" height="6.6" rx="1.3" fill="#f1f4f8" stroke="#7d8ea4" stroke-width="0.9"/><path d="M1.9 3.8 H5.7 M3.8 1.9 V5.7" stroke="#000" stroke-width="1"/></svg><svg class="ic" width="15" height="15" viewBox="0 0 15 15"><path d="M4.6 2.6 L10.6 1.0 L10.6 3.2 L4.6 4.8 Z" fill="#3aa83a"/><rect x="4.6" y="2.8" width="1.1" height="6.6" fill="#2c8c2c"/><rect x="9.5" y="1.4" width="1.1" height="6.2" fill="#2c8c2c"/><ellipse cx="3.6" cy="9.4" rx="2.1" ry="1.6" fill="#2c8c2c"/><ellipse cx="8.6" cy="7.8" rx="2.0" ry="1.5" fill="#3aa83a"/><path d="M14.4 11.6 l-3.2 -2.8 v1.7 h-3.6 v2.2 h3.6 v1.7 z" fill="#1c1ca8"/></svg><span class="tx" style="letter-spacing:-0.330px">AVDTP Media Stream (<span class="g">Codec=</span>SBC: Joint Stereo, 44.1kHz, Loudness, 8 Subbands, <span class="g">S.</span></span></span><span class="c k3" style="left:449.8px;width:56.299999999999955px">OK</span><span class="c k4" style="left:506.09999999999997px;width:97.40000000000003px">Master: Laptop &lt;-&gt; Sla</span></div>
<div class="r" style="top:506.96px"><span class="c t" style="left:0.0px;width:76.8px">113.258 521 125</span><span class="c it" style="left:76.8px;width:373.0px"><svg class="ex" width="8.4" height="8.4" viewBox="0 0 7.6 7.6"><rect x="0.5" y="0.5" width="6.6" height="6.6" rx="1.3" fill="#f1f4f8" stroke="#7d8ea4" stroke-width="0.9"/><path d="M1.9 3.8 H5.7 M3.8 1.9 V5.7" stroke="#000" stroke-width="1"/></svg><svg class="ic" width="15" height="15" viewBox="0 0 15 15"><path d="M4.6 2.6 L10.6 1.0 L10.6 3.2 L4.6 4.8 Z" fill="#3aa83a"/><rect x="4.6" y="2.8" width="1.1" height="6.6" fill="#2c8c2c"/><rect x="9.5" y="1.4" width="1.1" height="6.2" fill="#2c8c2c"/><ellipse cx="3.6" cy="9.4" rx="2.1" ry="1.6" fill="#2c8c2c"/><ellipse cx="8.6" cy="7.8" rx="2.0" ry="1.5" fill="#3aa83a"/><path d="M14.4 11.6 l-3.2 -2.8 v1.7 h-3.6 v2.2 h3.6 v1.7 z" fill="#1c1ca8"/></svg><span class="tx" style="letter-spacing:-0.330px">AVDTP Media Stream (<span class="g">Codec=</span>SBC: Joint Stereo, 44.1kHz, Loudness, 8 Subbands, <span class="g">S.</span></span></span><span class="c k3" style="left:449.8px;width:56.299999999999955px">OK</span><span class="c k4" style="left:506.09999999999997px;width:97.40000000000003px">Master: Laptop &lt;-&gt; Sla</span></div>
<div class="r" style="top:522.80px"><span class="c t" style="left:0.0px;width:76.8px">114.282 276 125</span><span class="c it" style="left:76.8px;width:373.0px"><svg class="ex" width="8.4" height="8.4" viewBox="0 0 7.6 7.6"><rect x="0.5" y="0.5" width="6.6" height="6.6" rx="1.3" fill="#f1f4f8" stroke="#7d8ea4" stroke-width="0.9"/><path d="M1.9 3.8 H5.7 M3.8 1.9 V5.7" stroke="#000" stroke-width="1"/></svg><svg class="ic" width="15" height="15" viewBox="0 0 15 15"><path d="M4.6 2.6 L10.6 1.0 L10.6 3.2 L4.6 4.8 Z" fill="#3aa83a"/><rect x="4.6" y="2.8" width="1.1" height="6.6" fill="#2c8c2c"/><rect x="9.5" y="1.4" width="1.1" height="6.2" fill="#2c8c2c"/><ellipse cx="3.6" cy="9.4" rx="2.1" ry="1.6" fill="#2c8c2c"/><ellipse cx="8.6" cy="7.8" rx="2.0" ry="1.5" fill="#3aa83a"/><path d="M14.4 11.6 l-3.2 -2.8 v1.7 h-3.6 v2.2 h3.6 v1.7 z" fill="#1c1ca8"/></svg><span class="tx" style="letter-spacing:-0.330px">AVDTP Media Stream (<span class="g">Codec=</span>SBC: Joint Stereo, 44.1kHz, Loudness, 8 Subbands, <span class="g">S.</span></span></span><span class="c k3" style="left:449.8px;width:56.299999999999955px">OK</span><span class="c k4" style="left:506.09999999999997px;width:97.40000000000003px">Master: Laptop &lt;-&gt; Sla</span></div>
<div class="r" style="top:538.63px"><span class="c t" style="left:0.0px;width:76.8px">115.089 780 250</span><span class="c it" style="left:76.8px;width:373.0px"><svg class="ex" width="8.4" height="8.4" viewBox="0 0 7.6 7.6"><rect x="0.5" y="0.5" width="6.6" height="6.6" rx="1.3" fill="#f1f4f8" stroke="#7d8ea4" stroke-width="0.9"/><path d="M1.9 3.8 H5.7 M3.8 1.9 V5.7" stroke="#000" stroke-width="1"/></svg><svg class="ic" width="15" height="15" viewBox="0 0 15 15"><path d="M4.6 2.6 L10.6 1.0 L10.6 3.2 L4.6 4.8 Z" fill="#3aa83a"/><rect x="4.6" y="2.8" width="1.1" height="6.6" fill="#2c8c2c"/><rect x="9.5" y="1.4" width="1.1" height="6.2" fill="#2c8c2c"/><ellipse cx="3.6" cy="9.4" rx="2.1" ry="1.6" fill="#2c8c2c"/><ellipse cx="8.6" cy="7.8" rx="2.0" ry="1.5" fill="#3aa83a"/><path d="M14.4 11.6 l-3.2 -2.8 v1.7 h-3.6 v2.2 h3.6 v1.7 z" fill="#1c1ca8"/></svg><span class="tx" style="letter-spacing:-0.330px">AVDTP Media Stream (<span class="g">Codec=</span>SBC: Joint Stereo, 44.1kHz, Loudness, 8 Subbands, <span class="g">S.</span></span></span><span class="c k3" style="left:449.8px;width:56.299999999999955px">OK</span><span class="c k4" style="left:506.09999999999997px;width:97.40000000000003px">Master: Laptop &lt;-&gt; Sla</span></div>
</div>
<div class="vs" style="left:626.2px;top:119.6px;width:13.299999999999955px;height:569px"></div>
<div class="th" style="left:626.4000000000001px;top:378.2px;width:12.099999999999955px;height:123.60000000000002px"></div>
<svg class="chev" style="left:629.4000000000001px;top:125.6px" width="7" height="4.6" viewBox="0 0 7 4.6"><path d="M0.5 4 L3.5 0.6 L6.5 4"/></svg>
<svg class="chev" style="left:629.4000000000001px;top:678.6px" width="7" height="4.6" viewBox="0 0 7 4.6"><path d="M0.5 0.4 L3.5 3.8 L6.5 0.4"/></svg>
<div class="vs" style="left:22.7px;top:688.6px;width:616.8px;height:13.4px"></div>
<div class="th" style="left:37px;top:688.7px;width:271.5px;height:12.2px"></div>
<svg class="chev" style="left:27.1px;top:691.8px" width="4.6" height="7" viewBox="0 0 4.6 7"><path d="M4 0.5 L0.6 3.5 L4 6.5"/></svg>
<svg class="chev" style="left:616.7px;top:691.8px" width="4.6" height="7" viewBox="0 0 4.6 7"><path d="M0.4 0.5 L3.8 3.5 L0.4 6.5"/></svg>

<div class="pane" style="left:642.4px;top:61.9px;width:637.6px;height:640.2px"></div>
<div class="tabstrip" style="left:642.4px;top:62.2px;width:637.6px;height:17.3px"></div>
<svg class="a" style="left:643.2px;top:62.3px;overflow:visible" width="126.19999999999993" height="18" viewBox="0 0 126.19999999999993 18"><path d="M0.2 17 Q3.4 16.6 5.4 13.6 L15.6 2.6 Q17.6 0.6 20.4 0.6 H122.59999999999994 Q124.59999999999994 0.6 124.59999999999994 2.6 V15 Q124.59999999999994 16.8 126.19999999999993 17 V18.4 H0.2 Z" fill="#fff"/><path d="M0.2 17 Q3.4 16.6 5.4 13.6 L15.6 2.6 Q17.6 0.6 20.4 0.6 M124.59999999999994 0.6 V15 Q124.59999999999994 16.8 126.79999999999993 17" fill="none" stroke="#c2c2c2" stroke-width="1.2"/></svg>
<span class="tab" style="left:661.2px;top:62.4px;font-weight:bold;font-size:9.6px;letter-spacing:0.17px">HCI Overview (Serial)</span>
<svg class="a" style="left:1244.2px;top:66.2px" width="36" height="9" viewBox="0 0 36 9"><path d="M5.6 1.2 L2.2 4.4 L5.6 7.6 Z" fill="#e8e8e8" stroke="#333" stroke-width="0.8"/><path d="M14.4 1.2 L17.8 4.4 L14.4 7.6 Z" fill="#e8e8e8" stroke="#333" stroke-width="0.8"/><path d="M26 1.4 L31.4 7.6 M31.4 1.4 L26 7.6" stroke="#111" stroke-width="1.8"/></svg>
<div class="ptb" style="left:642.4px;top:79.4px;width:637.6px;height:22.4px"></div>
<span class="ui" style="left:647px;top:84.4px;font-size:9.85px">Protocol: Single selection</span>
<svg class="a" style="left:761.6px;top:89.6px" width="4.4" height="2.6" viewBox="0 0 4.4 2.6"><path d="M0 0 H4.4 L2.2 2.6 Z" fill="#222"/></svg>
<div class="sep" style="left:772.6px;top:83px;height:15px"></div>
<div class="a" style="left:775.4px;top:80.8px;width:49.6px;height:19.8px;background:#cde5fc;border:1.2px solid #5aa5ee;border-radius:1.5px"></div>
<span class="ui" style="left:780.2px;top:84.4px;font-size:9.85px">All layers</span>
<svg class="a" style="left:826.2px;top:84px" width="13" height="13" viewBox="0 0 13 13"><path d="M2.2 6.8 L5.6 3.8 V5.8 H9.8 V7.8 H5.6 V9.8 Z" fill="#148a14"/></svg>
<svg class="a" style="left:846.3px;top:84px" width="13" height="13" viewBox="0 0 13 13"><g transform="rotate(40 6.5 6.5)"><rect x="4" y="-1" width="5" height="10.6" rx="1.2" fill="#3f9ae8" stroke="#2a78c4" stroke-width="0.6"/><rect x="4.8" y="-0.2" width="1.6" height="9" fill="#8cc8f8"/><rect x="4.8" y="9.6" width="3.4" height="3.2" fill="#e8e8e8" stroke="#555" stroke-width="0.7"/></g></svg>
<svg class="a" style="left:865.4px;top:84px" width="13" height="13" viewBox="0 0 13 13"><ellipse cx="6.5" cy="7.8" rx="6.5" ry="3.4" fill="#f0a01a"/><ellipse cx="6.5" cy="7.6" rx="4.6" ry="2.2" fill="#c8281a"/><path d="M3.9 7.6 Q4.3 3.4 4.9 1.8 Q5.5 0.2 6.5 0.2 Q7.5 0.2 8.1 1.8 Q8.7 3.4 9.1 7.6 Q6.5 8.8 3.9 7.6 Z" fill="#ffd21e"/><path d="M5.6 1.6 Q6.5 0.2 7.4 1.6 L7.7 4.6 H5.3 Z" fill="#fff04a"/><path d="M1.2 9.6 Q6.5 12.8 11.8 9.6 Q10.6 11.6 6.5 11.6 Q2.4 11.6 1.2 9.6 Z" fill="#f6c22a"/></svg>
<svg class="a" style="left:882.8px;top:84px" width="13" height="13" viewBox="0 0 13 13"><circle cx="6.5" cy="3.6" r="2.8" fill="#f4f4f4" stroke="#9a9a9a" stroke-width="1"/><path d="M5.6 6.2 V12 L6.5 12.8 L7.4 12 V10.6 L8.2 10 L7.4 9.4 V8.4 L8.2 7.8 L7.4 7.2 V6.2" fill="#f4f4f4" stroke="#9a9a9a" stroke-width="0.8"/><circle cx="6.5" cy="2.8" r="0.8" fill="#9a9a9a"/></svg>
<svg class="a" style="left:903.4px;top:84px" width="13" height="13" viewBox="0 0 13 13"><circle cx="8.2" cy="5" r="4.2" fill="#bfe3fb" stroke="#7aa0c8" stroke-width="1.1"/><circle cx="7.4" cy="4" r="1.8" fill="#eaf6ff"/><path d="M5 8.4 L1.4 12" stroke="#d98a2a" stroke-width="2.2" stroke-linecap="round"/></svg>
<svg class="a" style="left:923.1px;top:84px" width="13" height="13" viewBox="0 0 13 13"><rect x="3.4" y="1" width="5.6" height="11" rx="1" fill="#e6e6e6" stroke="#cfcfcf" stroke-width="0.8"/><path d="M8 4.6 H10.6 V7.4 H8" fill="#dcdcdc" stroke="#cfcfcf" stroke-width="0.6"/><rect x="4.6" y="2.6" width="1.2" height="4.4" fill="#d0d0d0"/></svg>
<svg class="a" style="left:940.8px;top:84px" width="13" height="13" viewBox="0 0 13 13"><path d="M1.8 1 V12.6" stroke="#9a9a9a" stroke-width="0.9"/><path d="M2.4 1.6 H11 V8 H2.4 Z" fill="#fff" stroke="#999" stroke-width="0.4"/><g fill="#4a4a4a"><rect x="2.4" y="1.6" width="2.1" height="2.1"/><rect x="6.6" y="1.6" width="2.1" height="2.1"/><rect x="4.5" y="3.7" width="2.1" height="2.2"/><rect x="8.7" y="3.7" width="2.3" height="2.2"/><rect x="2.4" y="5.9" width="2.1" height="2.1"/><rect x="6.6" y="5.9" width="2.1" height="2.1"/></g></svg>
<svg class="a" style="left:960.5px;top:84px" width="13" height="13" viewBox="0 0 13 13"><rect x="1.8" y="0.6" width="9.4" height="12" rx="4.4" fill="#f4f4f4" stroke="#9c9c9c" stroke-width="1.1"/><path d="M2 6 H11" stroke="#b4b4b4" stroke-width="0.7"/><path d="M6.5 1.6 l2 3.2 h-4 z" fill="#3a6fd0"/><rect x="5.7" y="4.6" width="1.6" height="1.8" fill="#3a6fd0"/></svg>
<svg class="a" style="left:980.2px;top:84px" width="13" height="13" viewBox="0 0 13 13"><path d="M0.2 6.5 L4.8 5.6 L6.5 1.6 L8.2 5.6 L12.8 6.5 L8.2 7.4 L6.5 11.4 L4.8 7.4 Z" fill="#5058d0"/><path d="M3 3.6 L10 9.4 M10 3.6 L3 9.4" stroke="#7078e0" stroke-width="1.1"/></svg>
<svg class="a" style="left:998.0px;top:84px" width="13" height="13" viewBox="0 0 13 13"><path d="M4.4 5 Q4.4 1.4 7.2 1.4 Q10 1.4 10 4.6 Q10 6.6 8.4 7.8 Q7.4 8.8 7.2 10.4 Q6.8 12.4 4.8 12" fill="none" stroke="#a8a8a8" stroke-width="1"/><path d="M6 5 Q6.2 3.4 7.4 3.6" fill="none" stroke="#bcbcbc" stroke-width="0.8"/></svg>
<svg class="a" style="left:1017.5px;top:84px" width="13" height="13" viewBox="0 0 13 13"><path d="M4 2.4 L11.4 0.2 V2.8 L4 5 Z" fill="#3aa83a"/><rect x="4" y="2.6" width="1.4" height="8" fill="#2a8a2a"/><rect x="10" y="0.8" width="1.4" height="8.6" fill="#2a8a2a"/><ellipse cx="3" cy="10.8" rx="2.6" ry="2" fill="#2a8a2a"/><ellipse cx="9" cy="9.8" rx="2.5" ry="1.9" fill="#34a034"/></svg>
<svg class="a" style="left:1038.1px;top:84px" width="13" height="13" viewBox="0 0 13 13"><rect x="0.8" y="3.4" width="11.6" height="7.6" rx="1.4" fill="#ececec" stroke="#c2c2c2" stroke-width="1"/><circle cx="4" cy="7.2" r="1.6" fill="none" stroke="#bdbdbd" stroke-width="0.9"/><circle cx="9" cy="7.2" r="1.2" fill="none" stroke="#bdbdbd" stroke-width="0.9"/><path d="M3 3.4 L5 1.4" stroke="#c2c2c2" stroke-width="0.8"/></svg>
<svg class="a" style="left:1057.0px;top:84px" width="13" height="13" viewBox="0 0 13 13"><path d="M0.8 7.2 L6.2 4.2 L12.2 7.4 L6.6 10.8 Z" fill="#e6e6e6" stroke="#b0b0b0" stroke-width="0.9"/><path d="M3 5.6 L3 2.2 L8 0.6 L10.2 2.2 L10.2 6" fill="#f4f4f4" stroke="#b0b0b0" stroke-width="0.9"/><path d="M0.8 7.2 V9.4 L6.6 12.8 L12.2 9.6 V7.4" fill="#d8d8d8" stroke="#b0b0b0" stroke-width="0.8"/><path d="M4.6 4 L8.4 2.8 M4.6 5.4 L8.4 4.2" stroke="#c4c4c4" stroke-width="0.6"/></svg>
<svg class="a" style="left:1075.5px;top:84px" width="13" height="13" viewBox="0 0 13 13"><rect x="1.4" y="3.6" width="5.6" height="8.4" rx="0.8" fill="#ececec" stroke="#6f6f6f" stroke-width="0.9"/><rect x="5.6" y="1.2" width="5.6" height="8.4" rx="0.8" fill="#f4f4f4" stroke="#bdbdbd" stroke-width="0.9"/></svg>
<svg class="a" style="left:1095.5px;top:84px" width="13" height="13" viewBox="0 0 13 13"><circle cx="6.5" cy="6.5" r="5.6" fill="#e3e3e3" stroke="#d2d2d2" stroke-width="0.8"/><rect x="4" y="3.4" width="1.6" height="6.2" rx="0.6" fill="#f2f2f2"/><rect x="7.4" y="3.4" width="1.6" height="6.2" rx="0.6" fill="#f2f2f2"/></svg>
<svg class="a" style="left:1115.1px;top:84px" width="13" height="13" viewBox="0 0 13 13"><path d="M1.2 10.6 V5.4 H4.4 V3 H11.6 V10.6 Z" fill="#f4f4f4" stroke="#cdcdcd" stroke-width="1"/></svg>
<svg class="a" style="left:1133.5px;top:84px" width="13" height="13" viewBox="0 0 13 13"><path d="M0.8 2.8 Q3.6 1.6 6.5 3.2 Q9.4 1.6 12.2 2.8 V10.8 Q9.4 9.8 6.5 11.2 Q3.6 9.8 0.8 10.8 Z" fill="#f2f2f2" stroke="#bdbdbd" stroke-width="1"/><path d="M6.5 3.2 V11" stroke="#bdbdbd" stroke-width="0.9"/></svg>
<svg class="a" style="left:1153.1px;top:84px" width="13" height="13" viewBox="0 0 13 13"><rect x="0.8" y="2.6" width="11.6" height="8.4" rx="1.6" fill="#efefef" stroke="#cfcfcf" stroke-width="1"/><path d="M2.6 2.6 V4 M5 2.6 V4 M7.4 2.6 V4 M9.8 2.6 V4" stroke="#cfcfcf" stroke-width="0.9"/></svg>
<svg class="a" style="left:1172.2px;top:84px" width="13" height="13" viewBox="0 0 13 13"><circle cx="6.5" cy="6.5" r="5.8" fill="#b2b2b2" stroke="#a2a2a2" stroke-width="0.6"/><path d="M3 3.4 Q5 2 6.4 3.6 Q7 5.4 5 6 Q3.6 7.4 4.6 9.4 Q3 9 2 7 Q1.6 5 3 3.4 Z M8 4.6 Q10 4 11 6 Q11 8.4 9.4 9.8 Q8.4 8.4 8.8 7 Q7.4 6 8 4.6 Z" fill="#ececec"/></svg>
<svg class="a" style="left:1191.3px;top:84px" width="13" height="13" viewBox="0 0 13 13"><g fill="#dedede" stroke="#b4b4b4" stroke-width="0.7"><rect x="4" y="0.6" width="5" height="5.4" rx="1.6"/><rect x="0.6" y="6.4" width="5" height="5.8" rx="1.6"/><rect x="7.4" y="6.4" width="5" height="5.8" rx="1.6"/></g><g fill="#f2f2f2"><ellipse cx="6.5" cy="1.8" rx="1.9" ry="0.8"/><ellipse cx="3.1" cy="7.6" rx="1.9" ry="0.8"/><ellipse cx="9.9" cy="7.6" rx="1.9" ry="0.8"/></g></svg>
<svg class="a" style="left:1210.0px;top:84px" width="13" height="13" viewBox="0 0 13 13"><g fill="none" stroke="#c6c6c6" stroke-width="0.8"><ellipse cx="2.2" cy="3" rx="1" ry="1.2"/><ellipse cx="5" cy="3" rx="1" ry="1.2"/><ellipse cx="7.8" cy="3" rx="1" ry="1.2"/><ellipse cx="10.6" cy="3" rx="1" ry="1.2"/></g><path d="M1.4 6.4 H11.6 L10.4 11 H2.6 Z" fill="#e6e6e6" stroke="#d0d0d0" stroke-width="0.7"/></svg>
<svg class="a" style="left:1229.3px;top:84px" width="13" height="13" viewBox="0 0 13 13"><g fill="#dedede" stroke="#b4b4b4" stroke-width="0.7"><rect x="4" y="0.6" width="5" height="5.4" rx="1.6"/><rect x="0.6" y="6.4" width="5" height="5.8" rx="1.6"/><rect x="7.4" y="6.4" width="5" height="5.8" rx="1.6"/></g><g fill="#f2f2f2"><ellipse cx="6.5" cy="1.8" rx="1.9" ry="0.8"/><ellipse cx="3.1" cy="7.6" rx="1.9" ry="0.8"/><ellipse cx="9.9" cy="7.6" rx="1.9" ry="0.8"/></g></svg>
<svg class="a" style="left:1249.0px;top:84px" width="13" height="13" viewBox="0 0 13 13"><path d="M2.8 0.6 Q-0.2 4 2.8 7.4 M10.2 0.6 Q13.2 4 10.2 7.4 M4.4 2 Q2.8 4 4.4 6 M8.6 2 Q10.2 4 8.6 6" fill="none" stroke="#b4b4b4" stroke-width="0.8"/><path d="M6.5 1.4 V6.4 M4.2 5.4 L6.5 7.8 L8.8 5.4 M4.2 8 L6.5 10.4 L8.8 8 M3.6 12.2 H9.4" fill="none" stroke="#8a8a8a" stroke-width="1.1"/></svg>
<svg class="a" style="left:1271.2px;top:93.6px" width="8.4" height="7.6" viewBox="0 0 8.4 7.6"><rect x="0" y="0" width="8.4" height="7.6" fill="#d6d6d6"/><rect x="1.6" y="1.6" width="5" height="1.2" fill="#222"/><path d="M1.4 3.8 H6.8 L4.1 6.6 Z" fill="#222"/></svg>
<div class="frow" style="left:642.4px;top:101.6px;width:637.6px;height:18px">
<span class="fbox" style="left:20.599999999999977px;width:51.5px;border-left:none">Type filt...</span>
<span class="fbtn" style="left:72.09999999999998px;width:24.0px"><svg class="a" style="left:1.5px;top:2.6px" width="20" height="12" viewBox="0 0 20 12"><path d="M1.2 1.6 H9.6 L6.2 5.6 V9.6 L4.6 8.6 V5.6 Z" fill="#fff" stroke="#2a2a2a" stroke-width="1.1"/><path d="M14.2 5.2 h4.2 l-2.1 2.5 z" fill="#222"/></svg></span>
<span class="fbox" style="left:96.09999999999998px;width:338.0px">Type filter...</span>
<span class="fbtn" style="left:434.09999999999997px;width:24.90000000000009px"><svg class="a" style="left:1.5px;top:2.6px" width="20" height="12" viewBox="0 0 20 12"><path d="M1.2 1.6 H9.6 L6.2 5.6 V9.6 L4.6 8.6 V5.6 Z" fill="#fff" stroke="#2a2a2a" stroke-width="1.1"/><path d="M14.2 5.2 h4.2 l-2.1 2.5 z" fill="#222"/></svg></span>
<span class="fbox" style="left:459.00000000000006px;width:38.59999999999991px">Type ...</span>
<span class="fbtn" style="left:497.59999999999997px;width:23.5px"><svg class="a" style="left:1.5px;top:2.6px" width="20" height="12" viewBox="0 0 20 12"><path d="M1.2 1.6 H9.6 L6.2 5.6 V9.6 L4.6 8.6 V5.6 Z" fill="#fff" stroke="#2a2a2a" stroke-width="1.1"/><path d="M14.2 5.2 h4.2 l-2.1 2.5 z" fill="#222"/></svg></span>
<span class="fbox" style="left:521.1px;width:39.5px">Type ...</span>
<span class="fbtn" style="left:560.6px;width:24px"><svg class="a" style="left:1.5px;top:2.6px" width="20" height="12" viewBox="0 0 20 12"><path d="M1.2 1.6 H9.6 L6.2 5.6 V9.6 L4.6 8.6 V5.6 Z" fill="#fff" stroke="#2a2a2a" stroke-width="1.1"/><path d="M14.2 5.2 h4.2 l-2.1 2.5 z" fill="#222"/></svg></span>
<span class="fbox" style="left:584.6px;width:54px">Type filter...</span>
</div>
<div class="hdr" style="left:642.4px;top:119.6px;width:637.6px;height:19.6px">
<span style="left:20.599999999999977px;width:75.5px">Time</span>
<span style="left:96.09999999999998px;width:362.9000000000001px">Item</span>
<span style="left:459.00000000000006px;width:62.09999999999991px">Application</span>
<span style="left:521.1px;width:63.5px">Status</span>
<span style="left:584.6px;width:53px"><i style="font-style:normal;letter-spacing:-0.34px">Payload</i></span>
</div>
<div class="mg" style="left:642.5px;top:139.3px;width:19.400000000000002px;height:563px"></div>
<div class="a" style="left:662.4px;top:102px;width:1.2px;height:600.4px;background:#bebebe"></div>
<div class="vp rp" style="left:663.7px;top:139.1px;width:603.5px;height:549.6px">
<div class="r" style="top:0.34px"><span class="c t" style="left:0.0px;width:74.79999999999995px">37.458 634 870</span><span class="c it" style="left:74.79999999999995px;width:362.9000000000001px"><svg class="ex" width="8.4" height="8.4" viewBox="0 0 7.6 7.6"><rect x="0.5" y="0.5" width="6.6" height="6.6" rx="1.3" fill="#f1f4f8" stroke="#7d8ea4" stroke-width="0.9"/><path d="M1.9 3.8 H5.7 M3.8 1.9 V5.7" stroke="#000" stroke-width="1"/></svg><svg class="ic" width="15" height="15" viewBox="0 0 15 15"><circle cx="9" cy="5.4" r="4.6" fill="#bfe3fb" stroke="#8aa7c4" stroke-width="1.1"/><circle cx="8" cy="4.4" r="2" fill="#e9f6ff"/><path d="M5.4 8.6 L1.2 12.8" stroke="#d98a2a" stroke-width="2.2" stroke-linecap="round"/><path d="M13.9 12.200000000000001 L10.9 9.900000000000002 V11.350000000000001 H7.1000000000000005 V13.05 H10.9 V14.5 Z" fill="#1c1ca8"/><path d="M6.6 9.600000000000001 L9.399999999999999 7.300000000000002 V8.8 H13.2 V10.400000000000002 H9.399999999999999 V11.900000000000002 Z" fill="#1c8a1c"/></svg><span class="tx" style="letter-spacing:-0.328px">SDP Service Search Attribute Transaction (L2CAP: Audio Sink L2CAP AVDTP V1....</span></span><span class="c k3" style="left:437.70000000000005px;width:62.09999999999991px;letter-spacing:-0.15px">SDP</span><span class="c k4" style="left:499.79999999999995px;width:63.5px">OK</span><span class="c k5" style="left:563.3px;width:40.200000000000045px">28 bytes</span></div>
<div class="r" style="top:16.17px"><span class="c t" style="left:0.0px;width:74.79999999999995px">37.509 886 320</span><span class="c it" style="left:74.79999999999995px;width:362.9000000000001px"><svg class="ex" width="8.4" height="8.4" viewBox="0 0 7.6 7.6"><rect x="0.5" y="0.5" width="6.6" height="6.6" rx="1.3" fill="#f1f4f8" stroke="#7d8ea4" stroke-width="0.9"/><path d="M1.9 3.8 H5.7 M3.8 1.9 V5.7" stroke="#000" stroke-width="1"/></svg><svg class="ic" width="15" height="15" viewBox="0 0 15 15"><circle cx="9" cy="5.4" r="4.6" fill="#bfe3fb" stroke="#8aa7c4" stroke-width="1.1"/><circle cx="8" cy="4.4" r="2" fill="#e9f6ff"/><path d="M5.4 8.6 L1.2 12.8" stroke="#d98a2a" stroke-width="2.2" stroke-linecap="round"/><path d="M13.9 12.200000000000001 L10.9 9.900000000000002 V11.350000000000001 H7.1000000000000005 V13.05 H10.9 V14.5 Z" fill="#1c1ca8"/><path d="M6.6 9.600000000000001 L9.399999999999999 7.300000000000002 V8.8 H13.2 V10.400000000000002 H9.399999999999999 V11.900000000000002 Z" fill="#1c8a1c"/></svg><span class="tx" style="letter-spacing:-0.211px">SDP Service Search Attribute Transaction (PnP Information: PnP Information V...</span></span><span class="c k3" style="left:437.70000000000005px;width:62.09999999999991px;letter-spacing:-0.15px">SDP</span><span class="c k4" style="left:499.79999999999995px;width:63.5px">OK</span><span class="c k5" style="left:563.3px;width:40.200000000000045px">28 bytes</span></div>
<div class="r" style="top:32.00px"><span class="c t" style="left:0.0px;width:74.79999999999995px">37.572 447 400</span><span class="c it" style="left:74.79999999999995px;width:362.9000000000001px"><svg class="ex" width="8.4" height="8.4" viewBox="0 0 7.6 7.6"><rect x="0.5" y="0.5" width="6.6" height="6.6" rx="1.3" fill="#f1f4f8" stroke="#7d8ea4" stroke-width="0.9"/><path d="M1.9 3.8 H5.7 M3.8 1.9 V5.7" stroke="#000" stroke-width="1"/></svg><svg class="ic" width="15" height="15" viewBox="0 0 15 15"><ellipse cx="7.1" cy="7.6" rx="6.9" ry="3.6" fill="#f0a01c"/><ellipse cx="7.1" cy="7.2" rx="5.2" ry="2.4" fill="#f8bc2a"/><ellipse cx="4.5" cy="8.1" rx="2.5" ry="2.1" fill="#c8281a"/><path d="M4.7 7 Q4.9 3.2 5.4 1.6 Q5.9 0.1 7.2 0.1 Q8.5 0.1 9 1.6 Q9.5 3.2 9.7 7 Q7.2 8.2 4.7 7 Z" fill="#f2d208"/><path d="M5.9 1.4 Q7.2 -0.4 8.5 1.4 L8.7 2.6 H5.7 Z" fill="#e8a818"/><path d="M2.4 9.8 Q5 11.4 7.4 11.2 L7.2 12 Q4.4 12 2.2 10.6 Z" fill="#f4c82a"/><path d="M13.9 11.4 L10.9 9.100000000000001 V10.55 H7.1000000000000005 V12.25 H10.9 V13.7 Z" fill="#1c1ca8"/><path d="M6.6 8.8 L9.399999999999999 6.500000000000001 V8.0 H13.2 V9.600000000000001 H9.399999999999999 V11.100000000000001 Z" fill="#1c8a1c"/></svg><span class="tx" style="letter-spacing:-0.244px">L2CAP Connection (<span class="g">Src=</span>0x0041, <span class="g">PSM=</span>HID Control › <span class="g">Dst=</span>0x0042)</span></span><span class="c k3" style="left:437.70000000000005px;width:62.09999999999991px">L2CAP</span><span class="c k4" style="left:499.79999999999995px;width:63.5px">OK</span><span class="c k5" style="left:563.3px;width:40.200000000000045px">16 bytes</span></div>
<div class="r" style="top:47.84px"><span class="c t" style="left:0.0px;width:74.79999999999995px">37.574 170 410</span><span class="c it" style="left:74.79999999999995px;width:362.9000000000001px"><svg class="ex" width="8.4" height="8.4" viewBox="0 0 7.6 7.6"><rect x="0.5" y="0.5" width="6.6" height="6.6" rx="1.3" fill="#f1f4f8" stroke="#7d8ea4" stroke-width="0.9"/><path d="M1.9 3.8 H5.7 M3.8 1.9 V5.7" stroke="#000" stroke-width="1"/></svg><svg class="ic" width="15" height="15" viewBox="0 0 15 15"><ellipse cx="7.1" cy="7.6" rx="6.9" ry="3.6" fill="#f0a01c"/><ellipse cx="7.1" cy="7.2" rx="5.2" ry="2.4" fill="#f8bc2a"/><ellipse cx="4.5" cy="8.1" rx="2.5" ry="2.1" fill="#c8281a"/><path d="M4.7 7 Q4.9 3.2 5.4 1.6 Q5.9 0.1 7.2 0.1 Q8.5 0.1 9 1.6 Q9.5 3.2 9.7 7 Q7.2 8.2 4.7 7 Z" fill="#f2d208"/><path d="M5.9 1.4 Q7.2 -0.4 8.5 1.4 L8.7 2.6 H5.7 Z" fill="#e8a818"/><path d="M2.4 9.8 Q5 11.4 7.4 11.2 L7.2 12 Q4.4 12 2.2 10.6 Z" fill="#f4c82a"/><path d="M6.2 11.1 L9.0 8.8 V10.299999999999999 H12.8 V11.9 H9.0 V13.399999999999999 Z" fill="#1c8a1c"/><path d="M13.9 8.6 L10.9 6.3 V7.75 H7.1000000000000005 V9.45 H10.9 V10.899999999999999 Z" fill="#1c1ca8"/></svg><span class="tx" style="letter-spacing:-0.213px">L2CAP Configure (<span class="g">Dst=</span>0x0041, <span class="g">MTU=</span>1'017 › <span class="g">Src=</span>0x0042, <span class="g">MTU=</span>672)</span></span><span class="c k3" style="left:437.70000000000005px;width:62.09999999999991px">L2CAP</span><span class="c k4" style="left:499.79999999999995px;width:63.5px">OK</span><span class="c k5" style="left:563.3px;width:40.200000000000045px">20 bytes</span></div>
<div class="r" style="top:63.67px"><span class="c t" style="left:0.0px;width:74.79999999999995px">37.574 800 620</span><span class="c it" style="left:74.79999999999995px;width:362.9000000000001px"><svg class="ex" width="8.4" height="8.4" viewBox="0 0 7.6 7.6"><rect x="0.5" y="0.5" width="6.6" height="6.6" rx="1.3" fill="#f1f4f8" stroke="#7d8ea4" stroke-width="0.9"/><path d="M1.9 3.8 H5.7 M3.8 1.9 V5.7" stroke="#000" stroke-width="1"/></svg><svg class="ic" width="15" height="15" viewBox="0 0 15 15"><path d="M3.4 9.4 L9.6 0.8 L14 3.8 L8 12 Z" fill="#4f94e0"/><path d="M4.6 9.2 L10 1.8 L11.6 2.9 L6.2 10.3 Z" fill="#a9d0f7"/><path d="M9.6 0.8 L14 3.8 L13 5.2 L8.6 2.2 Z" fill="#cfe4fa"/><path d="M3.4 9.4 L8 12 L5.4 13 L2.8 11.6 Z" fill="#e4eaf0" stroke="#9aa6b4" stroke-width="0.4"/><path d="M0.6 11 l1.5 1.8 l1.3 -1.8" fill="none" stroke="#555" stroke-width="0.8"/><path d="M6.2 11.9 L9.0 9.600000000000001 V11.1 H12.8 V12.700000000000001 H9.0 V14.2 Z" fill="#1c8a1c"/><path d="M13.9 9.4 L10.9 7.1000000000000005 V8.55 H7.1000000000000005 V10.25 H10.9 V11.7 Z" fill="#1c1ca8"/></svg><span class="tx" style="letter-spacing:-0.183px">HCI Write Link Supervision Timeout (<span class="g">Connection=</span>0x0049, <span class="g">Timeout=</span>10 s) › Co...</span></span><span class="c k3" style="left:437.70000000000005px;width:62.09999999999991px;letter-spacing:-0.15px">HCI</span><span class="c k4" style="left:499.79999999999995px;width:63.5px">OK</span><span class="c k5" style="left:563.3px;width:40.200000000000045px">7 bytes</span></div>
<div class="r" style="top:79.50px"><span class="c t" style="left:0.0px;width:74.79999999999995px">37.580 015 035</span><span class="c it" style="left:74.79999999999995px;width:362.9000000000001px"><svg class="ex" width="8.4" height="8.4" viewBox="0 0 7.6 7.6"><rect x="0.5" y="0.5" width="6.6" height="6.6" rx="1.3" fill="#f1f4f8" stroke="#7d8ea4" stroke-width="0.9"/><path d="M1.9 3.8 H5.7 M3.8 1.9 V5.7" stroke="#000" stroke-width="1"/></svg><svg class="ic" width="15" height="15" viewBox="0 0 15 15"><ellipse cx="7.1" cy="7.6" rx="6.9" ry="3.6" fill="#f0a01c"/><ellipse cx="7.1" cy="7.2" rx="5.2" ry="2.4" fill="#f8bc2a"/><ellipse cx="4.5" cy="8.1" rx="2.5" ry="2.1" fill="#c8281a"/><path d="M4.7 7 Q4.9 3.2 5.4 1.6 Q5.9 0.1 7.2 0.1 Q8.5 0.1 9 1.6 Q9.5 3.2 9.7 7 Q7.2 8.2 4.7 7 Z" fill="#f2d208"/><path d="M5.9 1.4 Q7.2 -0.4 8.5 1.4 L8.7 2.6 H5.7 Z" fill="#e8a818"/><path d="M2.4 9.8 Q5 11.4 7.4 11.2 L7.2 12 Q4.4 12 2.2 10.6 Z" fill="#f4c82a"/><path d="M13.9 11.4 L10.9 9.100000000000001 V10.55 H7.1000000000000005 V12.25 H10.9 V13.7 Z" fill="#1c1ca8"/><path d="M6.6 8.8 L9.399999999999999 6.500000000000001 V8.0 H13.2 V9.600000000000001 H9.399999999999999 V11.100000000000001 Z" fill="#1c8a1c"/></svg><span class="tx" style="letter-spacing:-0.215px">L2CAP Configure (<span class="g">Dst=</span>0x0042, <span class="g">MTU=</span>672 › <span class="g">Src=</span>0x0041, <span class="g">MTU=</span>672)</span></span><span class="c k3" style="left:437.70000000000005px;width:62.09999999999991px">L2CAP</span><span class="c k4" style="left:499.79999999999995px;width:63.5px">OK</span><span class="c k5" style="left:563.3px;width:40.200000000000045px">20 bytes</span></div>
<div class="r" style="top:95.33px"><span class="c t" style="left:0.0px;width:74.79999999999995px">37.588 698 750</span><span class="c it" style="left:74.79999999999995px;width:362.9000000000001px"><svg class="ex" width="8.4" height="8.4" viewBox="0 0 7.6 7.6"><rect x="0.5" y="0.5" width="6.6" height="6.6" rx="1.3" fill="#f1f4f8" stroke="#7d8ea4" stroke-width="0.9"/><path d="M1.9 3.8 H5.7 M3.8 1.9 V5.7" stroke="#000" stroke-width="1"/></svg><svg class="ic" width="15" height="15" viewBox="0 0 15 15"><ellipse cx="7.1" cy="7.6" rx="6.9" ry="3.6" fill="#f0a01c"/><ellipse cx="7.1" cy="7.2" rx="5.2" ry="2.4" fill="#f8bc2a"/><ellipse cx="4.5" cy="8.1" rx="2.5" ry="2.1" fill="#c8281a"/><path d="M4.7 7 Q4.9 3.2 5.4 1.6 Q5.9 0.1 7.2 0.1 Q8.5 0.1 9 1.6 Q9.5 3.2 9.7 7 Q7.2 8.2 4.7 7 Z" fill="#f2d208"/><path d="M5.9 1.4 Q7.2 -0.4 8.5 1.4 L8.7 2.6 H5.7 Z" fill="#e8a818"/><path d="M2.4 9.8 Q5 11.4 7.4 11.2 L7.2 12 Q4.4 12 2.2 10.6 Z" fill="#f4c82a"/><path d="M13.9 11.4 L10.9 9.100000000000001 V10.55 H7.1000000000000005 V12.25 H10.9 V13.7 Z" fill="#1c1ca8"/><path d="M6.6 8.8 L9.399999999999999 6.500000000000001 V8.0 H13.2 V9.600000000000001 H9.399999999999999 V11.100000000000001 Z" fill="#1c8a1c"/></svg><span class="tx" style="letter-spacing:-0.190px">L2CAP Connection (<span class="g">Src=</span>0x0042, <span class="g">PSM=</span>HID Interrupt › <span class="g">Dst=</span>0x0043)</span></span><span class="c k3" style="left:437.70000000000005px;width:62.09999999999991px">L2CAP</span><span class="c k4" style="left:499.79999999999995px;width:63.5px">OK</span><span class="c k5" style="left:563.3px;width:40.200000000000045px">16 bytes</span></div>
<div class="r" style="top:111.16px"><span class="c t" style="left:0.0px;width:74.79999999999995px">37.590 143 295</span><span class="c it" style="left:74.79999999999995px;width:362.9000000000001px"><svg class="ex" width="8.4" height="8.4" viewBox="0 0 7.6 7.6"><rect x="0.5" y="0.5" width="6.6" height="6.6" rx="1.3" fill="#f1f4f8" stroke="#7d8ea4" stroke-width="0.9"/><path d="M1.9 3.8 H5.7 M3.8 1.9 V5.7" stroke="#000" stroke-width="1"/></svg><svg class="ic" width="15" height="15" viewBox="0 0 15 15"><path d="M0.4 7.4 l3.4 -3 v2 h4.2 v2 h-4.2 v2 z" fill="#e29a1a"/><path d="M11.4 0.6 L8.6 6.6 H10.6 L9 13.6 L13.4 5.2 H11.2 L13 0.6 Z" fill="#ffe066" stroke="#e0b030" stroke-width="0.6"/></svg><span class="tx" style="letter-spacing:-0.252px">HCI Link Supervision Timeout Changed (<span class="g">Connection=</span>0x0049, <span class="g">Timeout=</span>2 s)</span></span><span class="c k3" style="left:437.70000000000005px;width:62.09999999999991px;letter-spacing:-0.15px">HCI</span><span class="c k4" style="left:499.79999999999995px;width:63.5px">OK</span><span class="c k5" style="left:563.3px;width:40.200000000000045px">6 bytes</span></div>
<div class="r" style="top:127.00px"><span class="c t" style="left:0.0px;width:74.79999999999995px">37.590 530 920</span><span class="c it" style="left:74.79999999999995px;width:362.9000000000001px"><svg class="ex" width="8.4" height="8.4" viewBox="0 0 7.6 7.6"><rect x="0.5" y="0.5" width="6.6" height="6.6" rx="1.3" fill="#f1f4f8" stroke="#7d8ea4" stroke-width="0.9"/><path d="M1.9 3.8 H5.7 M3.8 1.9 V5.7" stroke="#000" stroke-width="1"/></svg><svg class="ic" width="15" height="15" viewBox="0 0 15 15"><ellipse cx="7.1" cy="7.6" rx="6.9" ry="3.6" fill="#f0a01c"/><ellipse cx="7.1" cy="7.2" rx="5.2" ry="2.4" fill="#f8bc2a"/><ellipse cx="4.5" cy="8.1" rx="2.5" ry="2.1" fill="#c8281a"/><path d="M4.7 7 Q4.9 3.2 5.4 1.6 Q5.9 0.1 7.2 0.1 Q8.5 0.1 9 1.6 Q9.5 3.2 9.7 7 Q7.2 8.2 4.7 7 Z" fill="#f2d208"/><path d="M5.9 1.4 Q7.2 -0.4 8.5 1.4 L8.7 2.6 H5.7 Z" fill="#e8a818"/><path d="M2.4 9.8 Q5 11.4 7.4 11.2 L7.2 12 Q4.4 12 2.2 10.6 Z" fill="#f4c82a"/><path d="M6.2 11.1 L9.0 8.8 V10.299999999999999 H12.8 V11.9 H9.0 V13.399999999999999 Z" fill="#1c8a1c"/><path d="M13.9 8.6 L10.9 6.3 V7.75 H7.1000000000000005 V9.45 H10.9 V10.899999999999999 Z" fill="#1c1ca8"/></svg><span class="tx" style="letter-spacing:-0.168px">L2CAP Configure (<span class="g">Dst=</span>0x0042, <span class="g">MTU=</span>1'017, <span class="g">QoS=</span>Best Effort › <span class="g">Src=</span>0x0043, <span class="g">M...</span></span></span><span class="c k3" style="left:437.70000000000005px;width:62.09999999999991px">L2CAP</span><span class="c k4" style="left:499.79999999999995px;width:63.5px">OK</span><span class="c k5" style="left:563.3px;width:40.200000000000045px">44 bytes</span></div>
<div class="r" style="top:142.83px"><span class="c t" style="left:0.0px;width:74.79999999999995px">37.596 266 385</span><span class="c it" style="left:74.79999999999995px;width:362.9000000000001px"><svg class="ex" width="8.4" height="8.4" viewBox="0 0 7.6 7.6"><rect x="0.5" y="0.5" width="6.6" height="6.6" rx="1.3" fill="#f1f4f8" stroke="#7d8ea4" stroke-width="0.9"/><path d="M1.9 3.8 H5.7 M3.8 1.9 V5.7" stroke="#000" stroke-width="1"/></svg><svg class="ic" width="15" height="15" viewBox="0 0 15 15"><ellipse cx="7.1" cy="7.6" rx="6.9" ry="3.6" fill="#f0a01c"/><ellipse cx="7.1" cy="7.2" rx="5.2" ry="2.4" fill="#f8bc2a"/><ellipse cx="4.5" cy="8.1" rx="2.5" ry="2.1" fill="#c8281a"/><path d="M4.7 7 Q4.9 3.2 5.4 1.6 Q5.9 0.1 7.2 0.1 Q8.5 0.1 9 1.6 Q9.5 3.2 9.7 7 Q7.2 8.2 4.7 7 Z" fill="#f2d208"/><path d="M5.9 1.4 Q7.2 -0.4 8.5 1.4 L8.7 2.6 H5.7 Z" fill="#e8a818"/><path d="M2.4 9.8 Q5 11.4 7.4 11.2 L7.2 12 Q4.4 12 2.2 10.6 Z" fill="#f4c82a"/><path d="M13.9 11.4 L10.9 9.100000000000001 V10.55 H7.1000000000000005 V12.25 H10.9 V13.7 Z" fill="#1c1ca8"/><path d="M6.6 8.8 L9.399999999999999 6.500000000000001 V8.0 H13.2 V9.600000000000001 H9.399999999999999 V11.100000000000001 Z" fill="#1c8a1c"/></svg><span class="tx" style="letter-spacing:-0.215px">L2CAP Configure (<span class="g">Dst=</span>0x0043, <span class="g">MTU=</span>672 › <span class="g">Src=</span>0x0042, <span class="g">MTU=</span>672)</span></span><span class="c k3" style="left:437.70000000000005px;width:62.09999999999991px">L2CAP</span><span class="c k4" style="left:499.79999999999995px;width:63.5px">OK</span><span class="c k5" style="left:563.3px;width:40.200000000000045px">20 bytes</span></div>
<div class="r" style="top:158.66px"><span class="c t" style="left:0.0px;width:74.79999999999995px">37.599 302 585</span><span class="c it" style="left:74.79999999999995px;width:362.9000000000001px"><svg class="ex" width="8.4" height="8.4" viewBox="0 0 7.6 7.6"><rect x="0.5" y="0.5" width="6.6" height="6.6" rx="1.3" fill="#f1f4f8" stroke="#7d8ea4" stroke-width="0.9"/><path d="M1.9 3.8 H5.7 M3.8 1.9 V5.7" stroke="#000" stroke-width="1"/></svg><svg class="ic" width="15" height="15" viewBox="0 0 15 15"><path d="M3.4 9.4 L9.6 0.8 L14 3.8 L8 12 Z" fill="#4f94e0"/><path d="M4.6 9.2 L10 1.8 L11.6 2.9 L6.2 10.3 Z" fill="#a9d0f7"/><path d="M9.6 0.8 L14 3.8 L13 5.2 L8.6 2.2 Z" fill="#cfe4fa"/><path d="M3.4 9.4 L8 12 L5.4 13 L2.8 11.6 Z" fill="#e4eaf0" stroke="#9aa6b4" stroke-width="0.4"/><path d="M0.6 11 l1.5 1.8 l1.3 -1.8" fill="none" stroke="#555" stroke-width="0.8"/><path d="M6.2 11.9 L9.0 9.600000000000001 V11.1 H12.8 V12.700000000000001 H9.0 V14.2 Z" fill="#1c8a1c"/><path d="M13.9 9.4 L10.9 7.1000000000000005 V8.55 H7.1000000000000005 V10.25 H10.9 V11.7 Z" fill="#1c1ca8"/></svg><span class="tx" style="letter-spacing:-0.114px">HCI Sniff Mode (<span class="g">Connection=</span>0x0049, <span class="g">Max=</span>7.5 ms, <span class="g">Min=</span>5 ms, <span class="g">Attempt=</span>3.75 ...</span></span><span class="c k3" style="left:437.70000000000005px;width:62.09999999999991px;letter-spacing:-0.15px">HCI</span><span class="c k4" style="left:499.79999999999995px;width:63.5px">OK</span><span class="c k5" style="left:563.3px;width:40.200000000000045px">13 bytes</span></div>
<div class="r" style="top:174.49px"><span class="c t" style="left:0.0px;width:74.79999999999995px">37.601 055 580</span><span class="c it" style="left:74.79999999999995px;width:362.9000000000001px"><svg class="ex" width="8.4" height="8.4" viewBox="0 0 7.6 7.6"><rect x="0.5" y="0.5" width="6.6" height="6.6" rx="1.3" fill="#f1f4f8" stroke="#7d8ea4" stroke-width="0.9"/><path d="M1.9 3.8 H5.7 M3.8 1.9 V5.7" stroke="#000" stroke-width="1"/></svg><svg class="ic" width="15" height="15" viewBox="0 0 15 15"><path d="M3.4 9.4 L9.6 0.8 L14 3.8 L8 12 Z" fill="#4f94e0"/><path d="M4.6 9.2 L10 1.8 L11.6 2.9 L6.2 10.3 Z" fill="#a9d0f7"/><path d="M9.6 0.8 L14 3.8 L13 5.2 L8.6 2.2 Z" fill="#cfe4fa"/><path d="M3.4 9.4 L8 12 L5.4 13 L2.8 11.6 Z" fill="#e4eaf0" stroke="#9aa6b4" stroke-width="0.4"/><path d="M0.6 11 l1.5 1.8 l1.3 -1.8" fill="none" stroke="#555" stroke-width="0.8"/><path d="M6.2 11.9 L9.0 9.600000000000001 V11.1 H12.8 V12.700000000000001 H9.0 V14.2 Z" fill="#1c8a1c"/><path d="M13.9 9.4 L10.9 7.1000000000000005 V8.55 H7.1000000000000005 V10.25 H10.9 V11.7 Z" fill="#1c1ca8"/></svg><span class="tx" style="letter-spacing:-0.341px">HCI Read Scan Enable › Both</span></span><span class="c k3" style="left:437.70000000000005px;width:62.09999999999991px;letter-spacing:-0.15px">HCI</span><span class="c k4" style="left:499.79999999999995px;width:63.5px">OK</span><span class="c k5" style="left:563.3px;width:40.200000000000045px">3 bytes</span></div>
<div class="r" style="top:190.32px"><span class="c t" style="left:0.0px;width:74.79999999999995px">37.602 468 620</span><span class="c it" style="left:74.79999999999995px;width:362.9000000000001px"><svg class="ex" width="8.4" height="8.4" viewBox="0 0 7.6 7.6"><rect x="0.5" y="0.5" width="6.6" height="6.6" rx="1.3" fill="#f1f4f8" stroke="#7d8ea4" stroke-width="0.9"/><path d="M1.9 3.8 H5.7 M3.8 1.9 V5.7" stroke="#000" stroke-width="1"/></svg><svg class="ic" width="15" height="15" viewBox="0 0 15 15"><path d="M3.4 9.4 L9.6 0.8 L14 3.8 L8 12 Z" fill="#4f94e0"/><path d="M4.6 9.2 L10 1.8 L11.6 2.9 L6.2 10.3 Z" fill="#a9d0f7"/><path d="M9.6 0.8 L14 3.8 L13 5.2 L8.6 2.2 Z" fill="#cfe4fa"/><path d="M3.4 9.4 L8 12 L5.4 13 L2.8 11.6 Z" fill="#e4eaf0" stroke="#9aa6b4" stroke-width="0.4"/><path d="M0.6 11 l1.5 1.8 l1.3 -1.8" fill="none" stroke="#555" stroke-width="0.8"/><path d="M6.2 11.9 L9.0 9.600000000000001 V11.1 H12.8 V12.700000000000001 H9.0 V14.2 Z" fill="#1c8a1c"/><path d="M13.9 9.4 L10.9 7.1000000000000005 V8.55 H7.1000000000000005 V10.25 H10.9 V11.7 Z" fill="#1c1ca8"/></svg><span class="tx" style="letter-spacing:-0.316px">HCI Write Scan Enable (<span class="g">Enable=</span>Page)</span></span><span class="c k3" style="left:437.70000000000005px;width:62.09999999999991px;letter-spacing:-0.15px">HCI</span><span class="c k4" style="left:499.79999999999995px;width:63.5px">OK</span><span class="c k5" style="left:563.3px;width:40.200000000000045px">4 bytes</span></div>
<div class="r" style="top:206.16px"><span class="c t" style="left:0.0px;width:74.79999999999995px">37.604 066 875</span><span class="c it" style="left:74.79999999999995px;width:362.9000000000001px"><svg class="ex" width="8.4" height="8.4" viewBox="0 0 7.6 7.6"><rect x="0.5" y="0.5" width="6.6" height="6.6" rx="1.3" fill="#f1f4f8" stroke="#7d8ea4" stroke-width="0.9"/><path d="M1.9 3.8 H5.7 M3.8 1.9 V5.7" stroke="#000" stroke-width="1"/></svg><svg class="ic" width="15" height="15" viewBox="0 0 15 15"><path d="M3.4 9.4 L9.6 0.8 L14 3.8 L8 12 Z" fill="#4f94e0"/><path d="M4.6 9.2 L10 1.8 L11.6 2.9 L6.2 10.3 Z" fill="#a9d0f7"/><path d="M9.6 0.8 L14 3.8 L13 5.2 L8.6 2.2 Z" fill="#cfe4fa"/><path d="M3.4 9.4 L8 12 L5.4 13 L2.8 11.6 Z" fill="#e4eaf0" stroke="#9aa6b4" stroke-width="0.4"/><path d="M0.6 11 l1.5 1.8 l1.3 -1.8" fill="none" stroke="#555" stroke-width="0.8"/><path d="M6.2 11.9 L9.0 9.600000000000001 V11.1 H12.8 V12.700000000000001 H9.0 V14.2 Z" fill="#1c8a1c"/><path d="M13.9 9.4 L10.9 7.1000000000000005 V8.55 H7.1000000000000005 V10.25 H10.9 V11.7 Z" fill="#1c1ca8"/></svg><span class="tx" style="letter-spacing:-0.284px">HCI Read Class of Device › Headset</span></span><span class="c k3" style="left:437.70000000000005px;width:62.09999999999991px;letter-spacing:-0.15px">HCI</span><span class="c k4" style="left:499.79999999999995px;width:63.5px">OK</span><span class="c k5" style="left:563.3px;width:40.200000000000045px">3 bytes</span></div>
<div class="r" style="top:221.99px"><span class="c t" style="left:0.0px;width:74.79999999999995px">37.605 496 900</span><span class="c it" style="left:74.79999999999995px;width:362.9000000000001px"><svg class="ex" width="8.4" height="8.4" viewBox="0 0 7.6 7.6"><rect x="0.5" y="0.5" width="6.6" height="6.6" rx="1.3" fill="#f1f4f8" stroke="#7d8ea4" stroke-width="0.9"/><path d="M1.9 3.8 H5.7 M3.8 1.9 V5.7" stroke="#000" stroke-width="1"/></svg><svg class="ic" width="15" height="15" viewBox="0 0 15 15"><path d="M3.4 9.4 L9.6 0.8 L14 3.8 L8 12 Z" fill="#4f94e0"/><path d="M4.6 9.2 L10 1.8 L11.6 2.9 L6.2 10.3 Z" fill="#a9d0f7"/><path d="M9.6 0.8 L14 3.8 L13 5.2 L8.6 2.2 Z" fill="#cfe4fa"/><path d="M3.4 9.4 L8 12 L5.4 13 L2.8 11.6 Z" fill="#e4eaf0" stroke="#9aa6b4" stroke-width="0.4"/><path d="M0.6 11 l1.5 1.8 l1.3 -1.8" fill="none" stroke="#555" stroke-width="0.8"/><path d="M6.2 11.9 L9.0 9.600000000000001 V11.1 H12.8 V12.700000000000001 H9.0 V14.2 Z" fill="#1c8a1c"/><path d="M13.9 9.4 L10.9 7.1000000000000005 V8.55 H7.1000000000000005 V10.25 H10.9 V11.7 Z" fill="#1c1ca8"/></svg><span class="tx" style="letter-spacing:-0.250px">HCI Write Class of Device (Headset)</span></span><span class="c k3" style="left:437.70000000000005px;width:62.09999999999991px;letter-spacing:-0.15px">HCI</span><span class="c k4" style="left:499.79999999999995px;width:63.5px">OK</span><span class="c k5" style="left:563.3px;width:40.200000000000045px">6 bytes</span></div>
<div class="r" style="top:237.82px"><span class="c t" style="left:0.0px;width:74.79999999999995px">37.606 204 900</span><span class="c it" style="left:74.79999999999995px;width:362.9000000000001px"><svg class="ex" width="8.4" height="8.4" viewBox="0 0 7.6 7.6"><rect x="0.5" y="0.5" width="6.6" height="6.6" rx="1.3" fill="#f1f4f8" stroke="#7d8ea4" stroke-width="0.9"/><path d="M1.9 3.8 H5.7 M3.8 1.9 V5.7" stroke="#000" stroke-width="1"/></svg><svg class="ic" width="15" height="15" viewBox="0 0 15 15"><rect x="1.6" y="0.8" width="8.2" height="12.2" rx="4" fill="#f2f2f2" stroke="#8c8c8c" stroke-width="1"/><path d="M5.7 1 V5.6 M1.8 5.6 H9.6" stroke="#aaa" stroke-width="0.8" fill="none"/><path d="M5.7 2 l1.6 2.6 h-3.2 z" fill="#3a6fd0"/><path d="M7.2 11.8 l3.2 -2.8 v1.7 h3.6 v2.2 h-3.6 v1.7 z" fill="#1c8a1c"/></svg><span class="tx" style="letter-spacing:-0.064px">HID Set Idle (<span class="g">Rate=</span>Infinite)</span></span><span class="c k3" style="left:437.70000000000005px;width:62.09999999999991px;letter-spacing:-0.15px">HID</span><span class="c k4" style="left:499.79999999999995px;width:63.5px">OK</span><span class="c k5" style="left:563.3px;width:40.200000000000045px">10 bytes</span></div>
<div class="r" style="top:253.65px"><span class="c t" style="left:0.0px;width:74.79999999999995px">37.784 949 380</span><span class="c it" style="left:74.79999999999995px;width:362.9000000000001px"><svg class="ex" width="8.4" height="8.4" viewBox="0 0 7.6 7.6"><rect x="0.5" y="0.5" width="6.6" height="6.6" rx="1.3" fill="#f1f4f8" stroke="#7d8ea4" stroke-width="0.9"/><path d="M1.9 3.8 H5.7 M3.8 1.9 V5.7" stroke="#000" stroke-width="1"/></svg><svg class="ic" width="15" height="15" viewBox="0 0 15 15"><ellipse cx="7.1" cy="7.6" rx="6.9" ry="3.6" fill="#f0a01c"/><ellipse cx="7.1" cy="7.2" rx="5.2" ry="2.4" fill="#f8bc2a"/><ellipse cx="4.5" cy="8.1" rx="2.5" ry="2.1" fill="#c8281a"/><path d="M4.7 7 Q4.9 3.2 5.4 1.6 Q5.9 0.1 7.2 0.1 Q8.5 0.1 9 1.6 Q9.5 3.2 9.7 7 Q7.2 8.2 4.7 7 Z" fill="#f2d208"/><path d="M5.9 1.4 Q7.2 -0.4 8.5 1.4 L8.7 2.6 H5.7 Z" fill="#e8a818"/><path d="M2.4 9.8 Q5 11.4 7.4 11.2 L7.2 12 Q4.4 12 2.2 10.6 Z" fill="#f4c82a"/><path d="M13.9 11.4 L10.9 9.100000000000001 V10.55 H7.1000000000000005 V12.25 H10.9 V13.7 Z" fill="#1c1ca8"/><path d="M6.6 8.8 L9.399999999999999 6.500000000000001 V8.0 H13.2 V9.600000000000001 H9.399999999999999 V11.100000000000001 Z" fill="#1c8a1c"/></svg><span class="tx" style="letter-spacing:-0.260px">L2CAP Disconnection (<span class="g">Src=</span>0x0040, <span class="g">Dst=</span>0x0041)</span></span><span class="c k3" style="left:437.70000000000005px;width:62.09999999999991px">L2CAP</span><span class="c k4" style="left:499.79999999999995px;width:63.5px">OK</span><span class="c k5" style="left:563.3px;width:40.200000000000045px">16 bytes</span></div>
<div class="r" style="top:269.48px"><span class="c t" style="left:0.0px;width:74.79999999999995px">37.829 949 210</span><span class="c it" style="left:74.79999999999995px;width:362.9000000000001px"><svg class="ex" width="8.4" height="8.4" viewBox="0 0 7.6 7.6"><rect x="0.5" y="0.5" width="6.6" height="6.6" rx="1.3" fill="#f1f4f8" stroke="#7d8ea4" stroke-width="0.9"/><path d="M1.9 3.8 H5.7 M3.8 1.9 V5.7" stroke="#000" stroke-width="1"/></svg><svg class="ic" width="15" height="15" viewBox="0 0 15 15"><ellipse cx="7.1" cy="7.6" rx="6.9" ry="3.6" fill="#f0a01c"/><ellipse cx="7.1" cy="7.2" rx="5.2" ry="2.4" fill="#f8bc2a"/><ellipse cx="4.5" cy="8.1" rx="2.5" ry="2.1" fill="#c8281a"/><path d="M4.7 7 Q4.9 3.2 5.4 1.6 Q5.9 0.1 7.2 0.1 Q8.5 0.1 9 1.6 Q9.5 3.2 9.7 7 Q7.2 8.2 4.7 7 Z" fill="#f2d208"/><path d="M5.9 1.4 Q7.2 -0.4 8.5 1.4 L8.7 2.6 H5.7 Z" fill="#e8a818"/><path d="M2.4 9.8 Q5 11.4 7.4 11.2 L7.2 12 Q4.4 12 2.2 10.6 Z" fill="#f4c82a"/><path d="M13.9 11.4 L10.9 9.100000000000001 V10.55 H7.1000000000000005 V12.25 H10.9 V13.7 Z" fill="#1c1ca8"/><path d="M6.6 8.8 L9.399999999999999 6.500000000000001 V8.0 H13.2 V9.600000000000001 H9.399999999999999 V11.100000000000001 Z" fill="#1c8a1c"/></svg><span class="tx" style="letter-spacing:-0.296px">L2CAP Connection (<span class="g">Src=</span>0x0043, <span class="g">PSM=</span>AVDTP › <span class="g">Dst=</span>0x0044)</span></span><span class="c k3" style="left:437.70000000000005px;width:62.09999999999991px">L2CAP</span><span class="c k4" style="left:499.79999999999995px;width:63.5px">OK</span><span class="c k5" style="left:563.3px;width:40.200000000000045px">16 bytes</span></div>
<div class="r" style="top:285.32px"><span class="c t" style="left:0.0px;width:74.79999999999995px">37.832 338 255</span><span class="c it" style="left:74.79999999999995px;width:362.9000000000001px"><svg class="ex" width="8.4" height="8.4" viewBox="0 0 7.6 7.6"><rect x="0.5" y="0.5" width="6.6" height="6.6" rx="1.3" fill="#f1f4f8" stroke="#7d8ea4" stroke-width="0.9"/><path d="M1.9 3.8 H5.7 M3.8 1.9 V5.7" stroke="#000" stroke-width="1"/></svg><svg class="ic" width="15" height="15" viewBox="0 0 15 15"><ellipse cx="7.1" cy="7.6" rx="6.9" ry="3.6" fill="#f0a01c"/><ellipse cx="7.1" cy="7.2" rx="5.2" ry="2.4" fill="#f8bc2a"/><ellipse cx="4.5" cy="8.1" rx="2.5" ry="2.1" fill="#c8281a"/><path d="M4.7 7 Q4.9 3.2 5.4 1.6 Q5.9 0.1 7.2 0.1 Q8.5 0.1 9 1.6 Q9.5 3.2 9.7 7 Q7.2 8.2 4.7 7 Z" fill="#f2d208"/><path d="M5.9 1.4 Q7.2 -0.4 8.5 1.4 L8.7 2.6 H5.7 Z" fill="#e8a818"/><path d="M2.4 9.8 Q5 11.4 7.4 11.2 L7.2 12 Q4.4 12 2.2 10.6 Z" fill="#f4c82a"/><path d="M6.2 11.1 L9.0 8.8 V10.299999999999999 H12.8 V11.9 H9.0 V13.399999999999999 Z" fill="#1c8a1c"/><path d="M13.9 8.6 L10.9 6.3 V7.75 H7.1000000000000005 V9.45 H10.9 V10.899999999999999 Z" fill="#1c1ca8"/></svg><span class="tx" style="letter-spacing:-0.211px">L2CAP Configure (<span class="g">Dst=</span>0x0043, <span class="g">MTU=</span>1'017 › <span class="g">Src=</span>0x0044)</span></span><span class="c k3" style="left:437.70000000000005px;width:62.09999999999991px">L2CAP</span><span class="c k4" style="left:499.79999999999995px;width:63.5px">OK</span><span class="c k5" style="left:563.3px;width:40.200000000000045px">20 bytes</span></div>
<div class="r" style="top:301.15px"><span class="c t" style="left:0.0px;width:74.79999999999995px">37.841 211 920</span><span class="c it" style="left:74.79999999999995px;width:362.9000000000001px"><svg class="ex" width="8.4" height="8.4" viewBox="0 0 7.6 7.6"><rect x="0.5" y="0.5" width="6.6" height="6.6" rx="1.3" fill="#f1f4f8" stroke="#7d8ea4" stroke-width="0.9"/><path d="M1.9 3.8 H5.7 M3.8 1.9 V5.7" stroke="#000" stroke-width="1"/></svg><svg class="ic" width="15" height="15" viewBox="0 0 15 15"><ellipse cx="7.1" cy="7.6" rx="6.9" ry="3.6" fill="#f0a01c"/><ellipse cx="7.1" cy="7.2" rx="5.2" ry="2.4" fill="#f8bc2a"/><ellipse cx="4.5" cy="8.1" rx="2.5" ry="2.1" fill="#c8281a"/><path d="M4.7 7 Q4.9 3.2 5.4 1.6 Q5.9 0.1 7.2 0.1 Q8.5 0.1 9 1.6 Q9.5 3.2 9.7 7 Q7.2 8.2 4.7 7 Z" fill="#f2d208"/><path d="M5.9 1.4 Q7.2 -0.4 8.5 1.4 L8.7 2.6 H5.7 Z" fill="#e8a818"/><path d="M2.4 9.8 Q5 11.4 7.4 11.2 L7.2 12 Q4.4 12 2.2 10.6 Z" fill="#f4c82a"/><path d="M13.9 11.4 L10.9 9.100000000000001 V10.55 H7.1000000000000005 V12.25 H10.9 V13.7 Z" fill="#1c1ca8"/><path d="M6.6 8.8 L9.399999999999999 6.500000000000001 V8.0 H13.2 V9.600000000000001 H9.399999999999999 V11.100000000000001 Z" fill="#1c8a1c"/></svg><span class="tx" style="letter-spacing:-0.179px">L2CAP Configure (<span class="g">Dst=</span>0x0044 › <span class="g">Src=</span>0x0043)</span></span><span class="c k3" style="left:437.70000000000005px;width:62.09999999999991px">L2CAP</span><span class="c k4" style="left:499.79999999999995px;width:63.5px">OK</span><span class="c k5" style="left:563.3px;width:40.200000000000045px">16 bytes</span></div>
<div class="r" style="top:316.98px"><span class="c t" style="left:0.0px;width:74.79999999999995px">37.852 450 130</span><span class="c it" style="left:74.79999999999995px;width:362.9000000000001px"><svg class="ex" width="8.4" height="8.4" viewBox="0 0 7.6 7.6"><rect x="0.5" y="0.5" width="6.6" height="6.6" rx="1.3" fill="#f1f4f8" stroke="#7d8ea4" stroke-width="0.9"/><path d="M1.9 3.8 H5.7 M3.8 1.9 V5.7" stroke="#000" stroke-width="1"/></svg><svg class="ic" width="15" height="15" viewBox="0 0 15 15"><ellipse cx="7.1" cy="7.6" rx="6.9" ry="3.6" fill="#f0a01c"/><ellipse cx="7.1" cy="7.2" rx="5.2" ry="2.4" fill="#f8bc2a"/><ellipse cx="4.5" cy="8.1" rx="2.5" ry="2.1" fill="#c8281a"/><path d="M4.7 7 Q4.9 3.2 5.4 1.6 Q5.9 0.1 7.2 0.1 Q8.5 0.1 9 1.6 Q9.5 3.2 9.7 7 Q7.2 8.2 4.7 7 Z" fill="#f2d208"/><path d="M5.9 1.4 Q7.2 -0.4 8.5 1.4 L8.7 2.6 H5.7 Z" fill="#e8a818"/><path d="M2.4 9.8 Q5 11.4 7.4 11.2 L7.2 12 Q4.4 12 2.2 10.6 Z" fill="#f4c82a"/><path d="M13.9 11.4 L10.9 9.100000000000001 V10.55 H7.1000000000000005 V12.25 H10.9 V13.7 Z" fill="#1c1ca8"/><path d="M6.6 8.8 L9.399999999999999 6.500000000000001 V8.0 H13.2 V9.600000000000001 H9.399999999999999 V11.100000000000001 Z" fill="#1c8a1c"/></svg><span class="tx" style="letter-spacing:-0.296px">L2CAP Connection (<span class="g">Src=</span>0x0044, <span class="g">PSM=</span>AVCTP › <span class="g">Dst=</span>0x0045)</span></span><span class="c k3" style="left:437.70000000000005px;width:62.09999999999991px">L2CAP</span><span class="c k4" style="left:499.79999999999995px;width:63.5px">OK</span><span class="c k5" style="left:563.3px;width:40.200000000000045px">16 bytes</span></div>
<div class="r sel" style="top:332.81px"><span class="c t" style="left:0.0px;width:74.79999999999995px">37.854 682 565</span><span class="c it" style="left:74.79999999999995px;width:362.9000000000001px"><svg class="ex" width="8.4" height="8.4" viewBox="0 0 7.6 7.6"><rect x="0.5" y="0.5" width="6.6" height="6.6" rx="1.3" fill="#f1f4f8" stroke="#7d8ea4" stroke-width="0.9"/><path d="M1.9 3.8 H5.7 M3.8 1.9 V5.7" stroke="#000" stroke-width="1"/></svg><svg class="ic" width="15" height="15" viewBox="0 0 15 15"><ellipse cx="7.1" cy="7.6" rx="6.9" ry="3.6" fill="#f0a01c"/><ellipse cx="7.1" cy="7.2" rx="5.2" ry="2.4" fill="#f8bc2a"/><ellipse cx="4.5" cy="8.1" rx="2.5" ry="2.1" fill="#c8281a"/><path d="M4.7 7 Q4.9 3.2 5.4 1.6 Q5.9 0.1 7.2 0.1 Q8.5 0.1 9 1.6 Q9.5 3.2 9.7 7 Q7.2 8.2 4.7 7 Z" fill="#f2d208"/><path d="M5.9 1.4 Q7.2 -0.4 8.5 1.4 L8.7 2.6 H5.7 Z" fill="#e8a818"/><path d="M2.4 9.8 Q5 11.4 7.4 11.2 L7.2 12 Q4.4 12 2.2 10.6 Z" fill="#f4c82a"/><path d="M6.2 11.1 L9.0 8.8 V10.299999999999999 H12.8 V11.9 H9.0 V13.399999999999999 Z" fill="#1c8a1c"/><path d="M13.9 8.6 L10.9 6.3 V7.75 H7.1000000000000005 V9.45 H10.9 V10.899999999999999 Z" fill="#1c1ca8"/></svg><span class="tx" style="letter-spacing:-0.211px">L2CAP Configure (<span class="g">Dst=</span>0x0044, <span class="g">MTU=</span>1'017 › <span class="g">Src=</span>0x0045)</span></span><span class="c k3" style="left:437.70000000000005px;width:62.09999999999991px">L2CAP</span><span class="c k4" style="left:499.79999999999995px;width:63.5px">OK</span><span class="c k5" style="left:563.3px;width:40.200000000000045px">20 bytes</span></div>
<div class="r" style="top:348.64px"><span class="c t" style="left:0.0px;width:74.79999999999995px">37.863 712 835</span><span class="c it" style="left:74.79999999999995px;width:362.9000000000001px"><svg class="ex" width="8.4" height="8.4" viewBox="0 0 7.6 7.6"><rect x="0.5" y="0.5" width="6.6" height="6.6" rx="1.3" fill="#f1f4f8" stroke="#7d8ea4" stroke-width="0.9"/><path d="M1.9 3.8 H5.7 M3.8 1.9 V5.7" stroke="#000" stroke-width="1"/></svg><svg class="ic" width="15" height="15" viewBox="0 0 15 15"><ellipse cx="7.1" cy="7.6" rx="6.9" ry="3.6" fill="#f0a01c"/><ellipse cx="7.1" cy="7.2" rx="5.2" ry="2.4" fill="#f8bc2a"/><ellipse cx="4.5" cy="8.1" rx="2.5" ry="2.1" fill="#c8281a"/><path d="M4.7 7 Q4.9 3.2 5.4 1.6 Q5.9 0.1 7.2 0.1 Q8.5 0.1 9 1.6 Q9.5 3.2 9.7 7 Q7.2 8.2 4.7 7 Z" fill="#f2d208"/><path d="M5.9 1.4 Q7.2 -0.4 8.5 1.4 L8.7 2.6 H5.7 Z" fill="#e8a818"/><path d="M2.4 9.8 Q5 11.4 7.4 11.2 L7.2 12 Q4.4 12 2.2 10.6 Z" fill="#f4c82a"/><path d="M13.9 11.4 L10.9 9.100000000000001 V10.55 H7.1000000000000005 V12.25 H10.9 V13.7 Z" fill="#1c1ca8"/><path d="M6.6 8.8 L9.399999999999999 6.500000000000001 V8.0 H13.2 V9.600000000000001 H9.399999999999999 V11.100000000000001 Z" fill="#1c8a1c"/></svg><span class="tx" style="letter-spacing:-0.179px">L2CAP Configure (<span class="g">Dst=</span>0x0045 › <span class="g">Src=</span>0x0044)</span></span><span class="c k3" style="left:437.70000000000005px;width:62.09999999999991px">L2CAP</span><span class="c k4" style="left:499.79999999999995px;width:63.5px">OK</span><span class="c k5" style="left:563.3px;width:40.200000000000045px">16 bytes</span></div>
<div class="r" style="top:364.48px"><span class="c t" style="left:0.0px;width:74.79999999999995px">37.983 630 080</span><span class="c it" style="left:74.79999999999995px;width:362.9000000000001px"><svg class="ex" width="8.4" height="8.4" viewBox="0 0 7.6 7.6"><rect x="0.5" y="0.5" width="6.6" height="6.6" rx="1.3" fill="#f1f4f8" stroke="#7d8ea4" stroke-width="0.9"/><path d="M1.9 3.8 H5.7 M3.8 1.9 V5.7" stroke="#000" stroke-width="1"/></svg><svg class="ic" width="15" height="15" viewBox="0 0 15 15"><path d="M4.6 2.6 L10.6 1.0 L10.6 3.2 L4.6 4.8 Z" fill="#3aa83a"/><rect x="4.6" y="2.8" width="1.1" height="6.6" fill="#2c8c2c"/><rect x="9.5" y="1.4" width="1.1" height="6.2" fill="#2c8c2c"/><ellipse cx="3.6" cy="9.4" rx="2.1" ry="1.6" fill="#2c8c2c"/><ellipse cx="8.6" cy="7.8" rx="2.0" ry="1.5" fill="#3aa83a"/><path d="M13.9 12.200000000000001 L10.9 9.900000000000002 V11.350000000000001 H7.1000000000000005 V13.05 H10.9 V14.5 Z" fill="#1c1ca8"/><path d="M6.6 9.600000000000001 L9.399999999999999 7.300000000000002 V8.8 H13.2 V10.400000000000002 H9.399999999999999 V11.900000000000002 Z" fill="#1c8a1c"/></svg><span class="tx" style="letter-spacing:-0.353px">AVDTP Discover Command › <span class="g">Used=</span>No, <span class="g">ACP=</span>1</span></span><span class="c k3" style="left:437.70000000000005px;width:62.09999999999991px;letter-spacing:-0.15px">A/V</span><span class="c k4" style="left:499.79999999999995px;width:63.5px">OK</span><span class="c k5" style="left:563.3px;width:40.200000000000045px">10 bytes</span></div>
<div class="r" style="top:380.31px"><span class="c t" style="left:0.0px;width:74.79999999999995px">38.011 138 015</span><span class="c it" style="left:74.79999999999995px;width:362.9000000000001px"><svg class="ex" width="8.4" height="8.4" viewBox="0 0 7.6 7.6"><rect x="0.5" y="0.5" width="6.6" height="6.6" rx="1.3" fill="#f1f4f8" stroke="#7d8ea4" stroke-width="0.9"/><path d="M1.9 3.8 H5.7 M3.8 1.9 V5.7" stroke="#000" stroke-width="1"/></svg><svg class="ic" width="15" height="15" viewBox="0 0 15 15"><path d="M4.6 2.6 L10.6 1.0 L10.6 3.2 L4.6 4.8 Z" fill="#3aa83a"/><rect x="4.6" y="2.8" width="1.1" height="6.6" fill="#2c8c2c"/><rect x="9.5" y="1.4" width="1.1" height="6.2" fill="#2c8c2c"/><ellipse cx="3.6" cy="9.4" rx="2.1" ry="1.6" fill="#2c8c2c"/><ellipse cx="8.6" cy="7.8" rx="2.0" ry="1.5" fill="#3aa83a"/><path d="M13.9 12.200000000000001 L10.9 9.900000000000002 V11.350000000000001 H7.1000000000000005 V13.05 H10.9 V14.5 Z" fill="#1c1ca8"/><path d="M6.6 9.600000000000001 L9.399999999999999 7.300000000000002 V8.8 H13.2 V10.400000000000002 H9.399999999999999 V11.900000000000002 Z" fill="#1c8a1c"/></svg><span class="tx" style="letter-spacing:-0.300px">AVDTP Get Capabilities (<span class="g">ACP=</span>1) › Media Transport | Audio | SBC: 48kHz</span></span><span class="c k3" style="left:437.70000000000005px;width:62.09999999999991px;letter-spacing:-0.15px">A/V</span><span class="c k4" style="left:499.79999999999995px;width:63.5px">OK</span><span class="c k5" style="left:563.3px;width:40.200000000000045px">11 bytes</span></div>
<div class="r" style="top:396.14px"><span class="c t" style="left:0.0px;width:74.79999999999995px">38.041 114 770</span><span class="c it" style="left:74.79999999999995px;width:362.9000000000001px"><svg class="ex" width="8.4" height="8.4" viewBox="0 0 7.6 7.6"><rect x="0.5" y="0.5" width="6.6" height="6.6" rx="1.3" fill="#f1f4f8" stroke="#7d8ea4" stroke-width="0.9"/><path d="M1.9 3.8 H5.7 M3.8 1.9 V5.7" stroke="#000" stroke-width="1"/></svg><svg class="ic" width="15" height="15" viewBox="0 0 15 15"><path d="M4.6 2.6 L10.6 1.0 L10.6 3.2 L4.6 4.8 Z" fill="#3aa83a"/><rect x="4.6" y="2.8" width="1.1" height="6.6" fill="#2c8c2c"/><rect x="9.5" y="1.4" width="1.1" height="6.2" fill="#2c8c2c"/><ellipse cx="3.6" cy="9.4" rx="2.1" ry="1.6" fill="#2c8c2c"/><ellipse cx="8.6" cy="7.8" rx="2.0" ry="1.5" fill="#3aa83a"/><path d="M13.9 12.200000000000001 L10.9 9.900000000000002 V11.350000000000001 H7.1000000000000005 V13.05 H10.9 V14.5 Z" fill="#1c1ca8"/><path d="M6.6 9.600000000000001 L9.399999999999999 7.300000000000002 V8.8 H13.2 V10.400000000000002 H9.399999999999999 V11.900000000000002 Z" fill="#1c8a1c"/></svg><span class="tx" style="letter-spacing:-0.211px">AVDTP Set Configuration (<span class="g">ACP=</span>1, <span class="g">INT=</span>52, Media Transport | Audio | SBC: Joi...</span></span><span class="c k3" style="left:437.70000000000005px;width:62.09999999999991px;letter-spacing:-0.15px">A/V</span><span class="c k4" style="left:499.79999999999995px;width:63.5px">OK</span><span class="c k5" style="left:563.3px;width:40.200000000000045px">22 bytes</span></div>
<div class="r" style="top:411.97px"><span class="c t" style="left:0.0px;width:74.79999999999995px">38.071 140 500</span><span class="c it" style="left:74.79999999999995px;width:362.9000000000001px"><svg class="ex" width="8.4" height="8.4" viewBox="0 0 7.6 7.6"><rect x="0.5" y="0.5" width="6.6" height="6.6" rx="1.3" fill="#f1f4f8" stroke="#7d8ea4" stroke-width="0.9"/><path d="M1.9 3.8 H5.7 M3.8 1.9 V5.7" stroke="#000" stroke-width="1"/></svg><svg class="ic" width="15" height="15" viewBox="0 0 15 15"><path d="M4.6 2.6 L10.6 1.0 L10.6 3.2 L4.6 4.8 Z" fill="#3aa83a"/><rect x="4.6" y="2.8" width="1.1" height="6.6" fill="#2c8c2c"/><rect x="9.5" y="1.4" width="1.1" height="6.2" fill="#2c8c2c"/><ellipse cx="3.6" cy="9.4" rx="2.1" ry="1.6" fill="#2c8c2c"/><ellipse cx="8.6" cy="7.8" rx="2.0" ry="1.5" fill="#3aa83a"/><path d="M13.9 12.200000000000001 L10.9 9.900000000000002 V11.350000000000001 H7.1000000000000005 V13.05 H10.9 V14.5 Z" fill="#1c1ca8"/><path d="M6.6 9.600000000000001 L9.399999999999999 7.300000000000002 V8.8 H13.2 V10.400000000000002 H9.399999999999999 V11.900000000000002 Z" fill="#1c8a1c"/></svg><span class="tx" style="letter-spacing:-0.291px">AVDTP Open (<span class="g">ACP=</span>1) › Accept</span></span><span class="c k3" style="left:437.70000000000005px;width:62.09999999999991px;letter-spacing:-0.15px">A/V</span><span class="c k4" style="left:499.79999999999995px;width:63.5px">OK</span><span class="c k5" style="left:563.3px;width:40.200000000000045px">11 bytes</span></div>
<div class="r" style="top:427.80px"><span class="c t" style="left:0.0px;width:74.79999999999995px">38.101 198 880</span><span class="c it" style="left:74.79999999999995px;width:362.9000000000001px"><svg class="ex" width="8.4" height="8.4" viewBox="0 0 7.6 7.6"><rect x="0.5" y="0.5" width="6.6" height="6.6" rx="1.3" fill="#f1f4f8" stroke="#7d8ea4" stroke-width="0.9"/><path d="M1.9 3.8 H5.7 M3.8 1.9 V5.7" stroke="#000" stroke-width="1"/></svg><svg class="ic" width="15" height="15" viewBox="0 0 15 15"><ellipse cx="7.1" cy="7.6" rx="6.9" ry="3.6" fill="#f0a01c"/><ellipse cx="7.1" cy="7.2" rx="5.2" ry="2.4" fill="#f8bc2a"/><ellipse cx="4.5" cy="8.1" rx="2.5" ry="2.1" fill="#c8281a"/><path d="M4.7 7 Q4.9 3.2 5.4 1.6 Q5.9 0.1 7.2 0.1 Q8.5 0.1 9 1.6 Q9.5 3.2 9.7 7 Q7.2 8.2 4.7 7 Z" fill="#f2d208"/><path d="M5.9 1.4 Q7.2 -0.4 8.5 1.4 L8.7 2.6 H5.7 Z" fill="#e8a818"/><path d="M2.4 9.8 Q5 11.4 7.4 11.2 L7.2 12 Q4.4 12 2.2 10.6 Z" fill="#f4c82a"/><path d="M13.9 11.4 L10.9 9.100000000000001 V10.55 H7.1000000000000005 V12.25 H10.9 V13.7 Z" fill="#1c1ca8"/><path d="M6.6 8.8 L9.399999999999999 6.500000000000001 V8.0 H13.2 V9.600000000000001 H9.399999999999999 V11.100000000000001 Z" fill="#1c8a1c"/></svg><span class="tx" style="letter-spacing:-0.296px">L2CAP Connection (<span class="g">Src=</span>0x0045, <span class="g">PSM=</span>AVDTP › <span class="g">Dst=</span>0x0046)</span></span><span class="c k3" style="left:437.70000000000005px;width:62.09999999999991px">L2CAP</span><span class="c k4" style="left:499.79999999999995px;width:63.5px">OK</span><span class="c k5" style="left:563.3px;width:40.200000000000045px">16 bytes</span></div>
<div class="r" style="top:443.64px"><span class="c t" style="left:0.0px;width:74.79999999999995px">38.102 961 200</span><span class="c it" style="left:74.79999999999995px;width:362.9000000000001px"><svg class="ex" width="8.4" height="8.4" viewBox="0 0 7.6 7.6"><rect x="0.5" y="0.5" width="6.6" height="6.6" rx="1.3" fill="#f1f4f8" stroke="#7d8ea4" stroke-width="0.9"/><path d="M1.9 3.8 H5.7 M3.8 1.9 V5.7" stroke="#000" stroke-width="1"/></svg><svg class="ic" width="15" height="15" viewBox="0 0 15 15"><ellipse cx="7.1" cy="7.6" rx="6.9" ry="3.6" fill="#f0a01c"/><ellipse cx="7.1" cy="7.2" rx="5.2" ry="2.4" fill="#f8bc2a"/><ellipse cx="4.5" cy="8.1" rx="2.5" ry="2.1" fill="#c8281a"/><path d="M4.7 7 Q4.9 3.2 5.4 1.6 Q5.9 0.1 7.2 0.1 Q8.5 0.1 9 1.6 Q9.5 3.2 9.7 7 Q7.2 8.2 4.7 7 Z" fill="#f2d208"/><path d="M5.9 1.4 Q7.2 -0.4 8.5 1.4 L8.7 2.6 H5.7 Z" fill="#e8a818"/><path d="M2.4 9.8 Q5 11.4 7.4 11.2 L7.2 12 Q4.4 12 2.2 10.6 Z" fill="#f4c82a"/><path d="M6.2 11.1 L9.0 8.8 V10.299999999999999 H12.8 V11.9 H9.0 V13.399999999999999 Z" fill="#1c8a1c"/><path d="M13.9 8.6 L10.9 6.3 V7.75 H7.1000000000000005 V9.45 H10.9 V10.899999999999999 Z" fill="#1c1ca8"/></svg><span class="tx" style="letter-spacing:-0.211px">L2CAP Configure (<span class="g">Dst=</span>0x0045, <span class="g">MTU=</span>1'000 › <span class="g">Src=</span>0x0046)</span></span><span class="c k3" style="left:437.70000000000005px;width:62.09999999999991px">L2CAP</span><span class="c k4" style="left:499.79999999999995px;width:63.5px">OK</span><span class="c k5" style="left:563.3px;width:40.200000000000045px">20 bytes</span></div>
<div class="r" style="top:459.47px"><span class="c t" style="left:0.0px;width:74.79999999999995px">38.132 448 805</span><span class="c it" style="left:74.79999999999995px;width:362.9000000000001px"><svg class="ex" width="8.4" height="8.4" viewBox="0 0 7.6 7.6"><rect x="0.5" y="0.5" width="6.6" height="6.6" rx="1.3" fill="#f1f4f8" stroke="#7d8ea4" stroke-width="0.9"/><path d="M1.9 3.8 H5.7 M3.8 1.9 V5.7" stroke="#000" stroke-width="1"/></svg><svg class="ic" width="15" height="15" viewBox="0 0 15 15"><ellipse cx="7.1" cy="7.6" rx="6.9" ry="3.6" fill="#f0a01c"/><ellipse cx="7.1" cy="7.2" rx="5.2" ry="2.4" fill="#f8bc2a"/><ellipse cx="4.5" cy="8.1" rx="2.5" ry="2.1" fill="#c8281a"/><path d="M4.7 7 Q4.9 3.2 5.4 1.6 Q5.9 0.1 7.2 0.1 Q8.5 0.1 9 1.6 Q9.5 3.2 9.7 7 Q7.2 8.2 4.7 7 Z" fill="#f2d208"/><path d="M5.9 1.4 Q7.2 -0.4 8.5 1.4 L8.7 2.6 H5.7 Z" fill="#e8a818"/><path d="M2.4 9.8 Q5 11.4 7.4 11.2 L7.2 12 Q4.4 12 2.2 10.6 Z" fill="#f4c82a"/><path d="M13.9 11.4 L10.9 9.100000000000001 V10.55 H7.1000000000000005 V12.25 H10.9 V13.7 Z" fill="#1c1ca8"/><path d="M6.6 8.8 L9.399999999999999 6.500000000000001 V8.0 H13.2 V9.600000000000001 H9.399999999999999 V11.100000000000001 Z" fill="#1c8a1c"/></svg><span class="tx" style="letter-spacing:-0.179px">L2CAP Configure (<span class="g">Dst=</span>0x0046 › <span class="g">Src=</span>0x0045)</span></span><span class="c k3" style="left:437.70000000000005px;width:62.09999999999991px">L2CAP</span><span class="c k4" style="left:499.79999999999995px;width:63.5px">OK</span><span class="c k5" style="left:563.3px;width:40.200000000000045px">16 bytes</span></div>
<div class="r" style="top:475.30px"><span class="c t" style="left:0.0px;width:74.79999999999995px">38.162 299 065</span><span class="c it" style="left:74.79999999999995px;width:362.9000000000001px"><svg class="ex" width="8.4" height="8.4" viewBox="0 0 7.6 7.6"><rect x="0.5" y="0.5" width="6.6" height="6.6" rx="1.3" fill="#f1f4f8" stroke="#7d8ea4" stroke-width="0.9"/><path d="M1.9 3.8 H5.7 M3.8 1.9 V5.7" stroke="#000" stroke-width="1"/></svg><svg class="ic" width="15" height="15" viewBox="0 0 15 15"><path d="M0.4 7.4 l3.4 -3 v2 h4.2 v2 h-4.2 v2 z" fill="#e29a1a"/><path d="M11.4 0.6 L8.6 6.6 H10.6 L9 13.6 L13.4 5.2 H11.2 L13 0.6 Z" fill="#ffe066" stroke="#e0b030" stroke-width="0.6"/></svg><span class="tx" style="letter-spacing:-0.252px">HCI Number Of Completed Packets (<span class="g">Connection=</span>0x0049, <span class="g">Packets=</span>1)</span></span><span class="c k3" style="left:437.70000000000005px;width:62.09999999999991px;letter-spacing:-0.15px">HCI</span><span class="c k4" style="left:499.79999999999995px;width:63.5px">OK</span><span class="c k5" style="left:563.3px;width:40.200000000000045px">7 bytes</span></div>
<div class="r" style="top:491.13px"><span class="c t" style="left:0.0px;width:74.79999999999995px">53.163 397 510</span><span class="c it" style="left:74.79999999999995px;width:362.9000000000001px"><svg class="ic" width="15" height="15" viewBox="0 0 15 15"><path d="M3.8 1.4 H12.4 L11 7.2 H5.2 Z" fill="#f1f1e4" stroke="#2a2a2a" stroke-width="1.1"/><ellipse cx="8.1" cy="1.8" rx="4" ry="1.2" fill="#f6e27a" stroke="#444" stroke-width="0.6"/><path d="M6 4 H10.2" stroke="#b0b0b0" stroke-width="0.8"/><rect x="6.8" y="7.2" width="2.6" height="3" fill="#2a2a2a"/><path d="M0.4 12.2 H5.8 L7.2 10.2" fill="none" stroke="#444" stroke-width="1.6"/><path d="M14.6 11.8 l-3.2 -2.8 v1.7 h-3.6 v2.2 h3.6 v1.7 z" fill="#1c1ca8"/></svg><span class="tx" style="letter-spacing:-0.536px">UART Sleep Message</span></span><span class="c k3" style="left:437.70000000000005px;width:62.09999999999991px;letter-spacing:-0.15px">Uart</span><span class="c k4" style="left:499.79999999999995px;width:63.5px">OK</span><span class="c k5" style="left:563.3px;width:40.200000000000045px"></span></div>
<div class="r" style="top:506.96px"><span class="c t" style="left:0.0px;width:74.79999999999995px">105.819 089 ...</span><span class="c it" style="left:74.79999999999995px;width:362.9000000000001px"><svg class="ic" width="15" height="15" viewBox="0 0 15 15"><path d="M3.8 1.4 H12.4 L11 7.2 H5.2 Z" fill="#f1f1e4" stroke="#2a2a2a" stroke-width="1.1"/><ellipse cx="8.1" cy="1.8" rx="4" ry="1.2" fill="#f6e27a" stroke="#444" stroke-width="0.6"/><path d="M6 4 H10.2" stroke="#b0b0b0" stroke-width="0.8"/><rect x="6.8" y="7.2" width="2.6" height="3" fill="#2a2a2a"/><path d="M0.4 12.2 H5.8 L7.2 10.2" fill="none" stroke="#444" stroke-width="1.6"/><path d="M7.2 11.8 l3.2 -2.8 v1.7 h3.6 v2.2 h-3.6 v1.7 z" fill="#1c8a1c"/></svg><span class="tx" style="letter-spacing:-0.481px">UART Wakeup Message</span></span><span class="c k3" style="left:437.70000000000005px;width:62.09999999999991px;letter-spacing:-0.15px">Uart</span><span class="c k4" style="left:499.79999999999995px;width:63.5px">OK</span><span class="c k5" style="left:563.3px;width:40.200000000000045px"></span></div>
<div class="r" style="top:522.80px"><span class="c t" style="left:0.0px;width:74.79999999999995px">105.819 368 ...</span><span class="c it" style="left:74.79999999999995px;width:362.9000000000001px"><svg class="ic" width="15" height="15" viewBox="0 0 15 15"><path d="M3.8 1.4 H12.4 L11 7.2 H5.2 Z" fill="#f1f1e4" stroke="#2a2a2a" stroke-width="1.1"/><ellipse cx="8.1" cy="1.8" rx="4" ry="1.2" fill="#f6e27a" stroke="#444" stroke-width="0.6"/><path d="M6 4 H10.2" stroke="#b0b0b0" stroke-width="0.8"/><rect x="6.8" y="7.2" width="2.6" height="3" fill="#2a2a2a"/><path d="M0.4 12.2 H5.8 L7.2 10.2" fill="none" stroke="#444" stroke-width="1.6"/><path d="M14.6 11.8 l-3.2 -2.8 v1.7 h-3.6 v2.2 h3.6 v1.7 z" fill="#1c1ca8"/></svg><span class="tx" style="letter-spacing:-0.481px">UART Wakeup Message</span></span><span class="c k3" style="left:437.70000000000005px;width:62.09999999999991px;letter-spacing:-0.15px">Uart</span><span class="c k4" style="left:499.79999999999995px;width:63.5px">OK</span><span class="c k5" style="left:563.3px;width:40.200000000000045px"></span></div>
<div class="r" style="top:538.63px"><span class="c t" style="left:0.0px;width:74.79999999999995px">105.819 560 ...</span><span class="c it" style="left:74.79999999999995px;width:362.9000000000001px"><svg class="ic" width="15" height="15" viewBox="0 0 15 15"><path d="M3.8 1.4 H12.4 L11 7.2 H5.2 Z" fill="#f1f1e4" stroke="#2a2a2a" stroke-width="1.1"/><ellipse cx="8.1" cy="1.8" rx="4" ry="1.2" fill="#f6e27a" stroke="#444" stroke-width="0.6"/><path d="M6 4 H10.2" stroke="#b0b0b0" stroke-width="0.8"/><rect x="6.8" y="7.2" width="2.6" height="3" fill="#2a2a2a"/><path d="M0.4 12.2 H5.8 L7.2 10.2" fill="none" stroke="#444" stroke-width="1.6"/><path d="M14.6 11.8 l-3.2 -2.8 v1.7 h-3.6 v2.2 h3.6 v1.7 z" fill="#1c1ca8"/></svg><span class="tx" style="letter-spacing:-0.542px">UART Woken Message</span></span><span class="c k3" style="left:437.70000000000005px;width:62.09999999999991px;letter-spacing:-0.15px">Uart</span><span class="c k4" style="left:499.79999999999995px;width:63.5px">OK</span><span class="c k5" style="left:563.3px;width:40.200000000000045px"></span></div>
</div>
<div class="vs" style="left:1267.2px;top:119.6px;width:12.800000000000182px;height:569px"></div>
<div class="th" style="left:1267.4px;top:507.4px;width:11.600000000000183px;height:58.0px"></div>
<svg class="chev" style="left:1270.4px;top:125.6px" width="7" height="4.6" viewBox="0 0 7 4.6"><path d="M0.5 4 L3.5 0.6 L6.5 4"/></svg>
<svg class="chev" style="left:1270.4px;top:678.6px" width="7" height="4.6" viewBox="0 0 7 4.6"><path d="M0.5 0.4 L3.5 3.8 L6.5 0.4"/></svg>
<div class="vs" style="left:663.7px;top:688.6px;width:616.3000000000002px;height:13.4px"></div>
<div class="th" style="left:677.5px;top:688.7px;width:432.5px;height:12.2px"></div>
<svg class="chev" style="left:668.1px;top:691.8px" width="4.6" height="7" viewBox="0 0 4.6 7"><path d="M4 0.5 L0.6 3.5 L4 6.5"/></svg>
<svg class="chev" style="left:1257.7px;top:691.8px" width="4.6" height="7" viewBox="0 0 4.6 7"><path d="M0.4 0.5 L3.8 3.5 L0.4 6.5"/></svg>
<div class="a" style="left:644.8px;top:393.4px;width:12.6px;height:12.2px;background:#ffffcc;border:1px solid #9a9a9a;border-radius:1.5px"></div>
<div class="a" style="left:0;top:703px;width:1282px;height:19px;background:#f0f0f0"></div>
<span class="ui " style="left:6.2px;top:706.8px;font-size:9.5px">Ready</span>
<div class="sep" style="left:40px;top:708px;height:9px"></div>
<div class="sep" style="left:1195.4px;top:708px;height:9px"></div>
<span class="ui " style="left:1204px;top:706.8px;font-size:9.4px;letter-spacing:-0.24px">5.0.6710.36763</span>
<div class="a" style="left:0;top:720.6px;width:1282px;height:1.4px;background:#fff"></div>
<div class="a" style="left:0;top:20px;width:1.3px;height:702px;background:#fff"></div><div class="a" style="left:1281.1px;top:20px;width:0.9px;height:702px;background:#fff"></div>
</body></html>
